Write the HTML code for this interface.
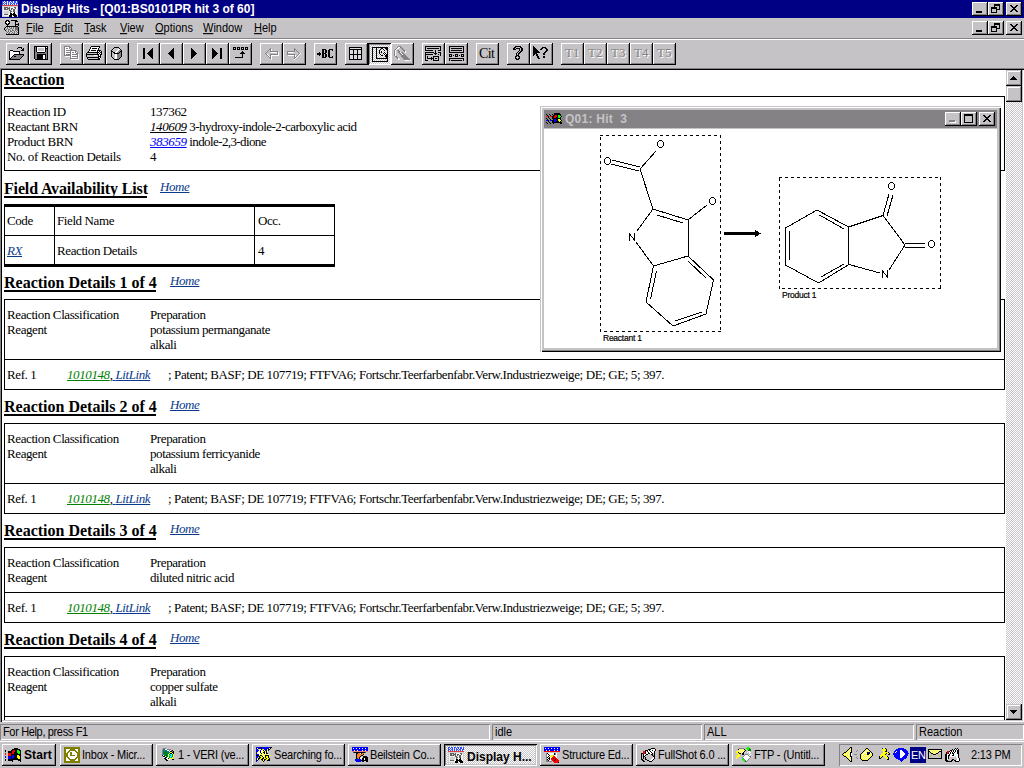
<!DOCTYPE html><html><head><meta charset="utf-8"><style>
*{box-sizing:border-box}
html,body{margin:0;padding:0}
body{width:1024px;height:768px;overflow:hidden;position:relative;background:#c6c3c6;font-family:"Liberation Sans",sans-serif;}
.a{position:absolute}
svg{position:absolute;overflow:visible}
.ss{position:absolute;font-family:"Liberation Sans",sans-serif;font-size:11px;color:#000;white-space:nowrap;line-height:13px}
.se{position:absolute;font-family:"Liberation Serif",serif;font-size:13px;letter-spacing:-0.4px;color:#000;white-space:nowrap;line-height:15px}
.t9{transform:scaleY(1.125);transform-origin:0 10.3px}
.rb{position:absolute;background:#c6c3c6;box-shadow:inset -1px -1px #000,inset 1px 1px #fff,inset -2px -2px #848284}
.h{position:absolute;font-family:"Liberation Serif",serif;font-weight:bold;font-size:16px;line-height:18px;white-space:nowrap}
.ul{position:absolute;height:2px;background:#000}
.home{position:absolute;font-family:"Liberation Serif",serif;font-style:italic;font-size:13px;letter-spacing:-0.4px;line-height:14px;color:#0a3a8c;text-decoration:underline;white-space:nowrap}
.bx{position:absolute;background:#000}
u{text-decoration:none;border-bottom:1px solid #000}
</style></head><body><div class="a" style="left:0px;top:0px;width:1024px;height:18px;background:#000084;"></div><svg style="left:2px;top:1px;" width="16" height="16" viewBox="0 0 16 16" shape-rendering="crispEdges"><rect x="0" y="0" width="2" height="1" fill="#3050ff"/><rect x="2" y="0" width="1" height="1" fill="#f0f0f0"/><rect x="3" y="0" width="2" height="1" fill="#3050ff"/><rect x="5" y="0" width="1" height="1" fill="#f0f0f0"/><rect x="6" y="0" width="2" height="1" fill="#3050ff"/><rect x="8" y="0" width="1" height="1" fill="#f0f0f0"/><rect x="9" y="0" width="2" height="1" fill="#3050ff"/><rect x="11" y="0" width="1" height="1" fill="#f0f0f0"/><rect x="12" y="0" width="2" height="1" fill="#3050ff"/><rect x="14" y="0" width="1" height="1" fill="#f0f0f0"/><rect x="15" y="0" width="1" height="1" fill="#3050ff"/><rect x="0" y="1" width="1" height="1" fill="#3050ff"/><rect x="1" y="1" width="1" height="1" fill="#f0f0f0"/><rect x="2" y="1" width="1" height="1" fill="#3050ff"/><rect x="3" y="1" width="1" height="1" fill="#f0f0f0"/><rect x="4" y="1" width="1" height="1" fill="#3050ff"/><rect x="5" y="1" width="1" height="1" fill="#f0f0f0"/><rect x="6" y="1" width="1" height="1" fill="#3050ff"/><rect x="7" y="1" width="1" height="1" fill="#f0f0f0"/><rect x="8" y="1" width="1" height="1" fill="#3050ff"/><rect x="9" y="1" width="1" height="1" fill="#f0f0f0"/><rect x="10" y="1" width="1" height="1" fill="#3050ff"/><rect x="11" y="1" width="1" height="1" fill="#f0f0f0"/><rect x="12" y="1" width="2" height="1" fill="#3050ff"/><rect x="14" y="1" width="1" height="1" fill="#f0f0f0"/><rect x="15" y="1" width="1" height="1" fill="#3050ff"/><rect x="0" y="2" width="2" height="1" fill="#3050ff"/><rect x="2" y="2" width="1" height="1" fill="#f0f0f0"/><rect x="3" y="2" width="2" height="1" fill="#3050ff"/><rect x="5" y="2" width="1" height="1" fill="#f0f0f0"/><rect x="6" y="2" width="1" height="1" fill="#3050ff"/><rect x="7" y="2" width="1" height="1" fill="#f0f0f0"/><rect x="8" y="2" width="2" height="1" fill="#3050ff"/><rect x="10" y="2" width="1" height="1" fill="#f0f0f0"/><rect x="11" y="2" width="2" height="1" fill="#3050ff"/><rect x="13" y="2" width="1" height="1" fill="#f0f0f0"/><rect x="14" y="2" width="2" height="1" fill="#3050ff"/><rect x="0" y="3" width="1" height="1" fill="#3050ff"/><rect x="1" y="3" width="1" height="1" fill="#f0f0f0"/><rect x="2" y="3" width="1" height="1" fill="#3050ff"/><rect x="3" y="3" width="1" height="1" fill="#f0f0f0"/><rect x="4" y="3" width="1" height="1" fill="#3050ff"/><rect x="5" y="3" width="1" height="1" fill="#f0f0f0"/><rect x="6" y="3" width="1" height="1" fill="#3050ff"/><rect x="7" y="3" width="1" height="1" fill="#f0f0f0"/><rect x="8" y="3" width="1" height="1" fill="#3050ff"/><rect x="9" y="3" width="1" height="1" fill="#f0f0f0"/><rect x="10" y="3" width="1" height="1" fill="#3050ff"/><rect x="11" y="3" width="1" height="1" fill="#f0f0f0"/><rect x="12" y="3" width="1" height="1" fill="#3050ff"/><rect x="13" y="3" width="1" height="1" fill="#f0f0f0"/><rect x="14" y="3" width="1" height="1" fill="#3050ff"/><rect x="15" y="3" width="1" height="1" fill="#f0f0f0"/><rect x="0" y="4" width="16" height="1" fill="#e04040"/><rect x="0" y="5" width="16" height="1" fill="#d0d4cc"/><rect x="0" y="6" width="1" height="1" fill="#d0d4cc"/><rect x="1" y="6" width="1" height="1" fill="#f0f0f0"/><rect x="2" y="6" width="4" height="1" fill="#606060"/><rect x="6" y="6" width="1" height="1" fill="#d0d4cc"/><rect x="7" y="6" width="1" height="1" fill="#606060"/><rect x="8" y="6" width="4" height="1" fill="#f0f0f0"/><rect x="12" y="6" width="2" height="1" fill="#606060"/><rect x="14" y="6" width="1" height="1" fill="#f0f0f0"/><rect x="15" y="6" width="1" height="1" fill="#d0d4cc"/><rect x="0" y="7" width="1" height="1" fill="#d0d4cc"/><rect x="1" y="7" width="1" height="1" fill="#f0f0f0"/><rect x="2" y="7" width="2" height="1" fill="#606060"/><rect x="4" y="7" width="1" height="1" fill="#f0f0f0"/><rect x="5" y="7" width="3" height="1" fill="#606060"/><rect x="8" y="7" width="1" height="1" fill="#f0f0f0"/><rect x="9" y="7" width="2" height="1" fill="#606060"/><rect x="11" y="7" width="2" height="1" fill="#f0f0f0"/><rect x="13" y="7" width="1" height="1" fill="#606060"/><rect x="14" y="7" width="1" height="1" fill="#f0f0f0"/><rect x="15" y="7" width="1" height="1" fill="#d0d4cc"/><rect x="0" y="8" width="1" height="1" fill="#d0d4cc"/><rect x="1" y="8" width="1" height="1" fill="#f0f0f0"/><rect x="2" y="8" width="4" height="1" fill="#606060"/><rect x="6" y="8" width="1" height="1" fill="#d0d4cc"/><rect x="7" y="8" width="1" height="1" fill="#606060"/><rect x="8" y="8" width="1" height="1" fill="#f0f0f0"/><rect x="9" y="8" width="1" height="1" fill="#606060"/><rect x="10" y="8" width="1" height="1" fill="#f0f0f0"/><rect x="11" y="8" width="2" height="1" fill="#606060"/><rect x="13" y="8" width="2" height="1" fill="#f0f0f0"/><rect x="15" y="8" width="1" height="1" fill="#d0d4cc"/><rect x="0" y="9" width="1" height="1" fill="#d0d4cc"/><rect x="1" y="9" width="6" height="1" fill="#f0f0f0"/><rect x="7" y="9" width="2" height="1" fill="#606060"/><rect x="9" y="9" width="2" height="1" fill="#f0f0f0"/><rect x="11" y="9" width="2" height="1" fill="#606060"/><rect x="13" y="9" width="2" height="1" fill="#f0f0f0"/><rect x="15" y="9" width="1" height="1" fill="#d0d4cc"/><rect x="0" y="10" width="1" height="1" fill="#d0d4cc"/><rect x="1" y="10" width="1" height="1" fill="#f0f0f0"/><rect x="2" y="10" width="5" height="1" fill="#d0d4cc"/><rect x="7" y="10" width="1" height="1" fill="#f0f0f0"/><rect x="8" y="10" width="2" height="1" fill="#606060"/><rect x="10" y="10" width="1" height="1" fill="#f0f0f0"/><rect x="11" y="10" width="2" height="1" fill="#606060"/><rect x="13" y="10" width="2" height="1" fill="#f0f0f0"/><rect x="15" y="10" width="1" height="1" fill="#d0d4cc"/><rect x="0" y="11" width="1" height="1" fill="#d0d4cc"/><rect x="1" y="11" width="1" height="1" fill="#f0f0f0"/><rect x="2" y="11" width="5" height="1" fill="#d0d4cc"/><rect x="7" y="11" width="1" height="1" fill="#f0f0f0"/><rect x="8" y="11" width="1" height="1" fill="#606060"/><rect x="9" y="11" width="3" height="1" fill="#f0f0f0"/><rect x="12" y="11" width="1" height="1" fill="#000"/><rect x="13" y="11" width="2" height="1" fill="#f0f0f0"/><rect x="15" y="11" width="1" height="1" fill="#d0d4cc"/><rect x="0" y="12" width="1" height="1" fill="#d0d4cc"/><rect x="1" y="12" width="1" height="1" fill="#f0f0f0"/><rect x="2" y="12" width="4" height="1" fill="#d0d4cc"/><rect x="6" y="12" width="2" height="1" fill="#f0f0f0"/><rect x="8" y="12" width="2" height="1" fill="#000"/><rect x="10" y="12" width="1" height="1" fill="#f0f0f0"/><rect x="11" y="12" width="2" height="1" fill="#000"/><rect x="13" y="12" width="2" height="1" fill="#f0f0f0"/><rect x="15" y="12" width="1" height="1" fill="#d0d4cc"/><rect x="0" y="13" width="1" height="1" fill="#d0d4cc"/><rect x="1" y="13" width="1" height="1" fill="#f0f0f0"/><rect x="2" y="13" width="4" height="1" fill="#606060"/><rect x="6" y="13" width="2" height="1" fill="#f0f0f0"/><rect x="8" y="13" width="6" height="1" fill="#000"/><rect x="14" y="13" width="1" height="1" fill="#f0f0f0"/><rect x="15" y="13" width="1" height="1" fill="#d0d4cc"/><rect x="0" y="14" width="1" height="1" fill="#d0d4cc"/><rect x="1" y="14" width="6" height="1" fill="#f0f0f0"/><rect x="7" y="14" width="3" height="1" fill="#000"/><rect x="10" y="14" width="1" height="1" fill="#f0f0f0"/><rect x="11" y="14" width="4" height="1" fill="#000"/><rect x="15" y="14" width="1" height="1" fill="#d0d4cc"/><rect x="0" y="15" width="7" height="1" fill="#d0d4cc"/><rect x="7" y="15" width="3" height="1" fill="#000"/><rect x="10" y="15" width="2" height="1" fill="#f0f0f0"/><rect x="12" y="15" width="3" height="1" fill="#000"/><rect x="15" y="15" width="1" height="1" fill="#d0d4cc"/></svg><div class="ss" style="left:21px;top:2px;color:#fff;font-weight:bold;font-size:12px;line-height:14px">Display Hits - [Q01:BS0101PR hit 3 of 60]</div><div class="rb" style="left:972px;top:2px;width:16px;height:14px;"></div><div class="rb" style="left:988px;top:2px;width:16px;height:14px;"></div><div class="rb" style="left:1006px;top:2px;width:16px;height:14px;"></div><svg style="left:972px;top:2px;" width="16" height="14" viewBox="0 0 16 14" shape-rendering="crispEdges"><rect x="4" y="9" width="6" height="2" fill="#000"/></svg><svg style="left:988px;top:2px;" width="16" height="14" viewBox="0 0 16 14" shape-rendering="crispEdges"><rect x="6" y="2" width="6" height="1" fill="#000"/><rect x="6" y="3" width="6" height="1" fill="#000"/><rect x="6" y="3" width="1" height="3" fill="#000"/><rect x="11" y="3" width="1" height="5" fill="#000"/><rect x="9" y="7" width="3" height="1" fill="#000"/><rect x="3" y="5" width="6" height="1" fill="#000"/><rect x="3" y="6" width="6" height="1" fill="#000"/><rect x="3" y="6" width="1" height="5" fill="#000"/><rect x="8" y="6" width="1" height="5" fill="#000"/><rect x="3" y="10" width="6" height="1" fill="#000"/></svg><svg style="left:1006px;top:2px;" width="16" height="14" viewBox="0 0 16 14" shape-rendering="crispEdges"><rect x="4" y="3" width="2" height="1" fill="#000"/><rect x="10" y="3" width="2" height="1" fill="#000"/><rect x="5" y="4" width="2" height="1" fill="#000"/><rect x="9" y="4" width="2" height="1" fill="#000"/><rect x="6" y="5" width="2" height="1" fill="#000"/><rect x="8" y="5" width="2" height="1" fill="#000"/><rect x="7" y="6" width="2" height="1" fill="#000"/><rect x="7" y="6" width="2" height="1" fill="#000"/><rect x="8" y="7" width="2" height="1" fill="#000"/><rect x="6" y="7" width="2" height="1" fill="#000"/><rect x="9" y="8" width="2" height="1" fill="#000"/><rect x="5" y="8" width="2" height="1" fill="#000"/><rect x="10" y="9" width="2" height="1" fill="#000"/><rect x="4" y="9" width="2" height="1" fill="#000"/></svg><svg style="left:4px;top:20px;" width="16" height="15" viewBox="0 0 16 15" shape-rendering="crispEdges"><rect x="2" y="0" width="3" height="1" fill="#000"/><rect x="7" y="0" width="6" height="1" fill="#000"/><rect x="1" y="1" width="2" height="1" fill="#000"/><rect x="3" y="1" width="1" height="1" fill="#fff"/><rect x="4" y="1" width="2" height="1" fill="#000"/><rect x="11" y="1" width="3" height="1" fill="#000"/><rect x="1" y="2" width="1" height="1" fill="#000"/><rect x="2" y="2" width="3" height="1" fill="#fff"/><rect x="5" y="2" width="1" height="1" fill="#000"/><rect x="11" y="2" width="1" height="1" fill="#000"/><rect x="1" y="3" width="2" height="1" fill="#000"/><rect x="3" y="3" width="1" height="1" fill="#fff"/><rect x="4" y="3" width="2" height="1" fill="#000"/><rect x="11" y="3" width="1" height="1" fill="#000"/><rect x="14" y="3" width="1" height="1" fill="#000"/><rect x="2" y="4" width="3" height="1" fill="#000"/><rect x="11" y="4" width="4" height="1" fill="#000"/><rect x="3" y="5" width="1" height="1" fill="#000"/><rect x="11" y="5" width="1" height="1" fill="#000"/><rect x="14" y="5" width="1" height="1" fill="#000"/><rect x="2" y="6" width="12" height="1" fill="#000"/><rect x="1" y="7" width="1" height="1" fill="#000"/><rect x="3" y="7" width="1" height="1" fill="#707070"/><rect x="4" y="7" width="1" height="1" fill="#d0d0d0"/><rect x="5" y="7" width="1" height="1" fill="#707070"/><rect x="6" y="7" width="1" height="1" fill="#d0d0d0"/><rect x="7" y="7" width="1" height="1" fill="#707070"/><rect x="8" y="7" width="1" height="1" fill="#d0d0d0"/><rect x="9" y="7" width="1" height="1" fill="#707070"/><rect x="10" y="7" width="1" height="1" fill="#d0d0d0"/><rect x="11" y="7" width="3" height="1" fill="#707070"/><rect x="14" y="7" width="1" height="1" fill="#000"/><rect x="0" y="8" width="1" height="1" fill="#000"/><rect x="2" y="8" width="1" height="1" fill="#d0d0d0"/><rect x="3" y="8" width="1" height="1" fill="#707070"/><rect x="4" y="8" width="2" height="1" fill="#d0d0d0"/><rect x="6" y="8" width="2" height="1" fill="#707070"/><rect x="8" y="8" width="1" height="1" fill="#d0d0d0"/><rect x="9" y="8" width="1" height="1" fill="#707070"/><rect x="10" y="8" width="1" height="1" fill="#d0d0d0"/><rect x="11" y="8" width="3" height="1" fill="#707070"/><rect x="14" y="8" width="1" height="1" fill="#000"/><rect x="0" y="9" width="1" height="1" fill="#000"/><rect x="2" y="9" width="1" height="1" fill="#707070"/><rect x="3" y="9" width="1" height="1" fill="#d0d0d0"/><rect x="4" y="9" width="2" height="1" fill="#707070"/><rect x="6" y="9" width="2" height="1" fill="#d0d0d0"/><rect x="8" y="9" width="1" height="1" fill="#707070"/><rect x="9" y="9" width="2" height="1" fill="#d0d0d0"/><rect x="11" y="9" width="3" height="1" fill="#707070"/><rect x="14" y="9" width="1" height="1" fill="#000"/><rect x="1" y="10" width="1" height="1" fill="#000"/><rect x="2" y="10" width="2" height="1" fill="#d0d0d0"/><rect x="4" y="10" width="1" height="1" fill="#707070"/><rect x="5" y="10" width="1" height="1" fill="#d0d0d0"/><rect x="6" y="10" width="1" height="1" fill="#707070"/><rect x="7" y="10" width="1" height="1" fill="#d0d0d0"/><rect x="8" y="10" width="2" height="1" fill="#707070"/><rect x="10" y="10" width="1" height="1" fill="#d0d0d0"/><rect x="11" y="10" width="1" height="1" fill="#707070"/><rect x="12" y="10" width="1" height="1" fill="#d0d0d0"/><rect x="13" y="10" width="1" height="1" fill="#707070"/><rect x="14" y="10" width="1" height="1" fill="#000"/><rect x="2" y="11" width="1" height="1" fill="#707070"/><rect x="3" y="11" width="1" height="1" fill="#d0d0d0"/><rect x="4" y="11" width="1" height="1" fill="#707070"/><rect x="5" y="11" width="1" height="1" fill="#d0d0d0"/><rect x="6" y="11" width="2" height="1" fill="#707070"/><rect x="8" y="11" width="2" height="1" fill="#d0d0d0"/><rect x="10" y="11" width="1" height="1" fill="#707070"/><rect x="11" y="11" width="1" height="1" fill="#d0d0d0"/><rect x="12" y="11" width="1" height="1" fill="#707070"/><rect x="13" y="11" width="1" height="1" fill="#d0d0d0"/><rect x="14" y="11" width="1" height="1" fill="#000"/><rect x="2" y="12" width="1" height="1" fill="#d0d0d0"/><rect x="3" y="12" width="1" height="1" fill="#707070"/><rect x="4" y="12" width="1" height="1" fill="#d0d0d0"/><rect x="5" y="12" width="1" height="1" fill="#707070"/><rect x="6" y="12" width="2" height="1" fill="#d0d0d0"/><rect x="8" y="12" width="1" height="1" fill="#707070"/><rect x="9" y="12" width="1" height="1" fill="#d0d0d0"/><rect x="10" y="12" width="1" height="1" fill="#707070"/><rect x="11" y="12" width="2" height="1" fill="#d0d0d0"/><rect x="13" y="12" width="1" height="1" fill="#707070"/><rect x="14" y="12" width="1" height="1" fill="#000"/><rect x="2" y="13" width="1" height="1" fill="#707070"/><rect x="3" y="13" width="1" height="1" fill="#d0d0d0"/><rect x="4" y="13" width="2" height="1" fill="#707070"/><rect x="6" y="13" width="1" height="1" fill="#d0d0d0"/><rect x="7" y="13" width="1" height="1" fill="#707070"/><rect x="8" y="13" width="1" height="1" fill="#d0d0d0"/><rect x="9" y="13" width="2" height="1" fill="#707070"/><rect x="11" y="13" width="1" height="1" fill="#d0d0d0"/><rect x="12" y="13" width="1" height="1" fill="#707070"/><rect x="13" y="13" width="1" height="1" fill="#d0d0d0"/><rect x="14" y="13" width="1" height="1" fill="#000"/><rect x="2" y="14" width="13" height="1" fill="#000"/></svg><div class="ss t9" style="left:26px;top:22px;"><span style="text-decoration:underline;text-underline-offset:1px">F</span>ile</div><div class="ss t9" style="left:54px;top:22px;"><span style="text-decoration:underline;text-underline-offset:1px">E</span>dit</div><div class="ss t9" style="left:84px;top:22px;"><span style="text-decoration:underline;text-underline-offset:1px">T</span>ask</div><div class="ss t9" style="left:120px;top:22px;"><span style="text-decoration:underline;text-underline-offset:1px">V</span>iew</div><div class="ss t9" style="left:155px;top:22px;"><span style="text-decoration:underline;text-underline-offset:1px">O</span>ptions</div><div class="ss t9" style="left:203px;top:22px;"><span style="text-decoration:underline;text-underline-offset:1px">W</span>indow</div><div class="ss t9" style="left:254px;top:22px;"><span style="text-decoration:underline;text-underline-offset:1px">H</span>elp</div><div class="rb" style="left:972px;top:21px;width:16px;height:14px;"></div><div class="rb" style="left:988px;top:21px;width:16px;height:14px;"></div><div class="rb" style="left:1006px;top:21px;width:16px;height:14px;"></div><svg style="left:972px;top:21px;" width="16" height="14" viewBox="0 0 16 14" shape-rendering="crispEdges"><rect x="4" y="9" width="6" height="2" fill="#000"/></svg><svg style="left:988px;top:21px;" width="16" height="14" viewBox="0 0 16 14" shape-rendering="crispEdges"><rect x="6" y="2" width="6" height="1" fill="#000"/><rect x="6" y="3" width="6" height="1" fill="#000"/><rect x="6" y="3" width="1" height="3" fill="#000"/><rect x="11" y="3" width="1" height="5" fill="#000"/><rect x="9" y="7" width="3" height="1" fill="#000"/><rect x="3" y="5" width="6" height="1" fill="#000"/><rect x="3" y="6" width="6" height="1" fill="#000"/><rect x="3" y="6" width="1" height="5" fill="#000"/><rect x="8" y="6" width="1" height="5" fill="#000"/><rect x="3" y="10" width="6" height="1" fill="#000"/></svg><svg style="left:1006px;top:21px;" width="16" height="14" viewBox="0 0 16 14" shape-rendering="crispEdges"><rect x="4" y="3" width="2" height="1" fill="#000"/><rect x="10" y="3" width="2" height="1" fill="#000"/><rect x="5" y="4" width="2" height="1" fill="#000"/><rect x="9" y="4" width="2" height="1" fill="#000"/><rect x="6" y="5" width="2" height="1" fill="#000"/><rect x="8" y="5" width="2" height="1" fill="#000"/><rect x="7" y="6" width="2" height="1" fill="#000"/><rect x="7" y="6" width="2" height="1" fill="#000"/><rect x="8" y="7" width="2" height="1" fill="#000"/><rect x="6" y="7" width="2" height="1" fill="#000"/><rect x="9" y="8" width="2" height="1" fill="#000"/><rect x="5" y="8" width="2" height="1" fill="#000"/><rect x="10" y="9" width="2" height="1" fill="#000"/><rect x="4" y="9" width="2" height="1" fill="#000"/></svg><div class="a" style="left:0px;top:38px;width:1024px;height:1px;background:#848284;"></div><div class="a" style="left:0px;top:39px;width:1024px;height:1px;background:#fff;"></div><div class="rb" style="left:6px;top:43px;width:23px;height:22px;"></div><div class="rb" style="left:29px;top:43px;width:23px;height:22px;"></div><div class="rb" style="left:60px;top:43px;width:23px;height:22px;"></div><div class="rb" style="left:83px;top:43px;width:23px;height:22px;"></div><div class="rb" style="left:106px;top:43px;width:23px;height:22px;"></div><div class="rb" style="left:137px;top:43px;width:23px;height:22px;"></div><div class="rb" style="left:160px;top:43px;width:23px;height:22px;"></div><div class="rb" style="left:183px;top:43px;width:23px;height:22px;"></div><div class="rb" style="left:206px;top:43px;width:23px;height:22px;"></div><div class="rb" style="left:229px;top:43px;width:23px;height:22px;"></div><div class="rb" style="left:260px;top:43px;width:23px;height:22px;"></div><div class="rb" style="left:283px;top:43px;width:23px;height:22px;"></div><div class="rb" style="left:314px;top:43px;width:23px;height:22px;"></div><div class="rb" style="left:345px;top:43px;width:23px;height:22px;"></div><div class="a" style="left:368px;top:43px;width:23px;height:22px;background-color:#fff;background-image:repeating-conic-gradient(#c6c3c6 0 25%,#fff 0 50%);background-size:2px 2px;box-shadow:inset 1px 1px #000,inset -1px -1px #fff,inset 2px 2px #848284"></div><div class="rb" style="left:391px;top:43px;width:23px;height:22px;"></div><div class="rb" style="left:422px;top:43px;width:23px;height:22px;"></div><div class="rb" style="left:445px;top:43px;width:23px;height:22px;"></div><div class="rb" style="left:476px;top:43px;width:23px;height:22px;"></div><div class="rb" style="left:507px;top:43px;width:23px;height:22px;"></div><div class="rb" style="left:530px;top:43px;width:23px;height:22px;"></div><div class="rb" style="left:561px;top:43px;width:23px;height:22px;"></div><div class="rb" style="left:584px;top:43px;width:23px;height:22px;"></div><div class="rb" style="left:607px;top:43px;width:23px;height:22px;"></div><div class="rb" style="left:630px;top:43px;width:23px;height:22px;"></div><div class="rb" style="left:653px;top:43px;width:23px;height:22px;"></div><svg style="left:9px;top:47px;" width="15" height="13" viewBox="0 0 15 13" shape-rendering="crispEdges"><rect x="9" y="0" width="4" height="1" fill="#000"/><rect x="8" y="1" width="1" height="1" fill="#000"/><rect x="12" y="1" width="1" height="1" fill="#000"/><rect x="14" y="1" width="1" height="1" fill="#000"/><rect x="13" y="2" width="2" height="1" fill="#000"/><rect x="1" y="3" width="3" height="1" fill="#000"/><rect x="12" y="3" width="3" height="1" fill="#000"/><rect x="0" y="4" width="1" height="1" fill="#000"/><rect x="1" y="4" width="3" height="1" fill="#fff"/><rect x="4" y="4" width="7" height="1" fill="#000"/><rect x="0" y="5" width="1" height="1" fill="#000"/><rect x="1" y="5" width="9" height="1" fill="#fff"/><rect x="10" y="5" width="1" height="1" fill="#000"/><rect x="0" y="6" width="1" height="1" fill="#000"/><rect x="1" y="6" width="9" height="1" fill="#fff"/><rect x="10" y="6" width="1" height="1" fill="#000"/><rect x="0" y="7" width="1" height="1" fill="#000"/><rect x="1" y="7" width="4" height="1" fill="#fff"/><rect x="5" y="7" width="10" height="1" fill="#000"/><rect x="0" y="8" width="1" height="1" fill="#000"/><rect x="1" y="8" width="3" height="1" fill="#fff"/><rect x="4" y="8" width="1" height="1" fill="#000"/><rect x="5" y="8" width="9" height="1" fill="#848284"/><rect x="14" y="8" width="1" height="1" fill="#000"/><rect x="0" y="9" width="1" height="1" fill="#000"/><rect x="1" y="9" width="2" height="1" fill="#fff"/><rect x="3" y="9" width="1" height="1" fill="#000"/><rect x="4" y="9" width="1" height="1" fill="#848284"/><rect x="5" y="9" width="2" height="1" fill="#000"/><rect x="7" y="9" width="6" height="1" fill="#848284"/><rect x="13" y="9" width="1" height="1" fill="#000"/><rect x="0" y="10" width="1" height="1" fill="#000"/><rect x="1" y="10" width="1" height="1" fill="#fff"/><rect x="2" y="10" width="1" height="1" fill="#000"/><rect x="3" y="10" width="9" height="1" fill="#848284"/><rect x="12" y="10" width="1" height="1" fill="#000"/><rect x="0" y="11" width="2" height="1" fill="#000"/><rect x="2" y="11" width="9" height="1" fill="#848284"/><rect x="11" y="11" width="1" height="1" fill="#000"/><rect x="0" y="12" width="11" height="1" fill="#000"/></svg><svg style="left:34px;top:46px;" width="14" height="14" viewBox="0 0 14 14" shape-rendering="crispEdges"><rect x="0" y="0" width="14" height="1" fill="#000"/><rect x="0" y="1" width="1" height="1" fill="#000"/><rect x="1" y="1" width="1" height="1" fill="#848284"/><rect x="2" y="1" width="1" height="1" fill="#000"/><rect x="3" y="1" width="8" height="1" fill="#fff"/><rect x="11" y="1" width="1" height="1" fill="#000"/><rect x="12" y="1" width="1" height="1" fill="#fff"/><rect x="13" y="1" width="1" height="1" fill="#000"/><rect x="0" y="2" width="1" height="1" fill="#000"/><rect x="1" y="2" width="1" height="1" fill="#848284"/><rect x="2" y="2" width="1" height="1" fill="#000"/><rect x="3" y="2" width="1" height="1" fill="#fff"/><rect x="4" y="2" width="6" height="1" fill="#c6c3c6"/><rect x="10" y="2" width="1" height="1" fill="#fff"/><rect x="11" y="2" width="3" height="1" fill="#000"/><rect x="0" y="3" width="1" height="1" fill="#000"/><rect x="1" y="3" width="1" height="1" fill="#848284"/><rect x="2" y="3" width="1" height="1" fill="#000"/><rect x="3" y="3" width="1" height="1" fill="#fff"/><rect x="4" y="3" width="6" height="1" fill="#c6c3c6"/><rect x="10" y="3" width="1" height="1" fill="#fff"/><rect x="11" y="3" width="1" height="1" fill="#000"/><rect x="12" y="3" width="1" height="1" fill="#848284"/><rect x="13" y="3" width="1" height="1" fill="#000"/><rect x="0" y="4" width="1" height="1" fill="#000"/><rect x="1" y="4" width="1" height="1" fill="#848284"/><rect x="2" y="4" width="1" height="1" fill="#000"/><rect x="3" y="4" width="1" height="1" fill="#fff"/><rect x="4" y="4" width="6" height="1" fill="#c6c3c6"/><rect x="10" y="4" width="1" height="1" fill="#fff"/><rect x="11" y="4" width="1" height="1" fill="#000"/><rect x="12" y="4" width="1" height="1" fill="#848284"/><rect x="13" y="4" width="1" height="1" fill="#000"/><rect x="0" y="5" width="1" height="1" fill="#000"/><rect x="1" y="5" width="1" height="1" fill="#848284"/><rect x="2" y="5" width="1" height="1" fill="#000"/><rect x="3" y="5" width="8" height="1" fill="#fff"/><rect x="11" y="5" width="1" height="1" fill="#000"/><rect x="12" y="5" width="1" height="1" fill="#848284"/><rect x="13" y="5" width="1" height="1" fill="#000"/><rect x="0" y="6" width="1" height="1" fill="#000"/><rect x="1" y="6" width="2" height="1" fill="#848284"/><rect x="3" y="6" width="8" height="1" fill="#000"/><rect x="11" y="6" width="2" height="1" fill="#848284"/><rect x="13" y="6" width="1" height="1" fill="#000"/><rect x="0" y="7" width="1" height="1" fill="#000"/><rect x="1" y="7" width="12" height="1" fill="#848284"/><rect x="13" y="7" width="1" height="1" fill="#000"/><rect x="0" y="8" width="1" height="1" fill="#000"/><rect x="1" y="8" width="2" height="1" fill="#848284"/><rect x="3" y="8" width="9" height="1" fill="#000"/><rect x="12" y="8" width="1" height="1" fill="#848284"/><rect x="13" y="8" width="1" height="1" fill="#000"/><rect x="0" y="9" width="1" height="1" fill="#000"/><rect x="1" y="9" width="2" height="1" fill="#848284"/><rect x="3" y="9" width="6" height="1" fill="#000"/><rect x="9" y="9" width="2" height="1" fill="#fff"/><rect x="11" y="9" width="1" height="1" fill="#000"/><rect x="12" y="9" width="1" height="1" fill="#848284"/><rect x="13" y="9" width="1" height="1" fill="#000"/><rect x="0" y="10" width="1" height="1" fill="#000"/><rect x="1" y="10" width="2" height="1" fill="#848284"/><rect x="3" y="10" width="6" height="1" fill="#000"/><rect x="9" y="10" width="2" height="1" fill="#fff"/><rect x="11" y="10" width="1" height="1" fill="#000"/><rect x="12" y="10" width="1" height="1" fill="#848284"/><rect x="13" y="10" width="1" height="1" fill="#000"/><rect x="0" y="11" width="1" height="1" fill="#000"/><rect x="1" y="11" width="2" height="1" fill="#848284"/><rect x="3" y="11" width="6" height="1" fill="#000"/><rect x="9" y="11" width="2" height="1" fill="#fff"/><rect x="11" y="11" width="1" height="1" fill="#000"/><rect x="12" y="11" width="1" height="1" fill="#848284"/><rect x="13" y="11" width="1" height="1" fill="#000"/><rect x="0" y="12" width="1" height="1" fill="#000"/><rect x="1" y="12" width="2" height="1" fill="#848284"/><rect x="3" y="12" width="6" height="1" fill="#000"/><rect x="9" y="12" width="2" height="1" fill="#fff"/><rect x="11" y="12" width="1" height="1" fill="#000"/><rect x="12" y="12" width="1" height="1" fill="#848284"/><rect x="13" y="12" width="1" height="1" fill="#000"/><rect x="0" y="13" width="1" height="1" fill="#fff"/><rect x="1" y="13" width="13" height="1" fill="#000"/></svg><svg style="left:64px;top:46px;" width="16" height="14" viewBox="0 0 16 14" shape-rendering="crispEdges"><rect x="0" y="0" width="6" height="1" fill="#848284"/><rect x="0" y="1" width="1" height="1" fill="#848284"/><rect x="1" y="1" width="4" height="1" fill="#fff"/><rect x="5" y="1" width="2" height="1" fill="#848284"/><rect x="0" y="2" width="1" height="1" fill="#848284"/><rect x="1" y="2" width="1" height="1" fill="#fff"/><rect x="2" y="2" width="2" height="1" fill="#848284"/><rect x="4" y="2" width="1" height="1" fill="#fff"/><rect x="5" y="2" width="1" height="1" fill="#848284"/><rect x="6" y="2" width="1" height="1" fill="#fff"/><rect x="7" y="2" width="1" height="1" fill="#848284"/><rect x="0" y="3" width="1" height="1" fill="#848284"/><rect x="1" y="3" width="5" height="1" fill="#fff"/><rect x="6" y="3" width="2" height="1" fill="#848284"/><rect x="0" y="4" width="1" height="1" fill="#848284"/><rect x="1" y="4" width="1" height="1" fill="#fff"/><rect x="2" y="4" width="10" height="1" fill="#848284"/><rect x="0" y="5" width="1" height="1" fill="#848284"/><rect x="1" y="5" width="5" height="1" fill="#fff"/><rect x="6" y="5" width="1" height="1" fill="#848284"/><rect x="7" y="5" width="4" height="1" fill="#fff"/><rect x="11" y="5" width="2" height="1" fill="#848284"/><rect x="0" y="6" width="1" height="1" fill="#848284"/><rect x="1" y="6" width="1" height="1" fill="#fff"/><rect x="2" y="6" width="5" height="1" fill="#848284"/><rect x="7" y="6" width="1" height="1" fill="#fff"/><rect x="8" y="6" width="2" height="1" fill="#848284"/><rect x="10" y="6" width="1" height="1" fill="#fff"/><rect x="11" y="6" width="1" height="1" fill="#848284"/><rect x="12" y="6" width="1" height="1" fill="#fff"/><rect x="13" y="6" width="1" height="1" fill="#848284"/><rect x="0" y="7" width="1" height="1" fill="#848284"/><rect x="1" y="7" width="5" height="1" fill="#fff"/><rect x="6" y="7" width="1" height="1" fill="#848284"/><rect x="7" y="7" width="5" height="1" fill="#fff"/><rect x="12" y="7" width="2" height="1" fill="#848284"/><rect x="0" y="8" width="1" height="1" fill="#848284"/><rect x="1" y="8" width="1" height="1" fill="#fff"/><rect x="2" y="8" width="5" height="1" fill="#848284"/><rect x="7" y="8" width="1" height="1" fill="#fff"/><rect x="8" y="8" width="6" height="1" fill="#848284"/><rect x="14" y="8" width="1" height="1" fill="#fff"/><rect x="0" y="9" width="7" height="1" fill="#848284"/><rect x="7" y="9" width="6" height="1" fill="#fff"/><rect x="13" y="9" width="1" height="1" fill="#848284"/><rect x="14" y="9" width="1" height="1" fill="#fff"/><rect x="1" y="10" width="5" height="1" fill="#fff"/><rect x="6" y="10" width="1" height="1" fill="#848284"/><rect x="7" y="10" width="1" height="1" fill="#fff"/><rect x="8" y="10" width="6" height="1" fill="#848284"/><rect x="14" y="10" width="1" height="1" fill="#fff"/><rect x="6" y="11" width="1" height="1" fill="#848284"/><rect x="7" y="11" width="6" height="1" fill="#fff"/><rect x="13" y="11" width="1" height="1" fill="#848284"/><rect x="14" y="11" width="1" height="1" fill="#fff"/><rect x="6" y="12" width="8" height="1" fill="#848284"/><rect x="14" y="12" width="1" height="1" fill="#fff"/><rect x="7" y="13" width="8" height="1" fill="#fff"/></svg><svg style="left:86px;top:46px;" width="16" height="14" viewBox="0 0 16 14" shape-rendering="crispEdges"><rect x="5" y="0" width="9" height="1" fill="#000"/><rect x="4" y="1" width="1" height="1" fill="#000"/><rect x="5" y="1" width="8" height="1" fill="#fff"/><rect x="13" y="1" width="1" height="1" fill="#000"/><rect x="4" y="2" width="1" height="1" fill="#000"/><rect x="5" y="2" width="1" height="1" fill="#fff"/><rect x="6" y="2" width="5" height="1" fill="#000"/><rect x="11" y="2" width="1" height="1" fill="#fff"/><rect x="12" y="2" width="1" height="1" fill="#000"/><rect x="3" y="3" width="1" height="1" fill="#000"/><rect x="4" y="3" width="8" height="1" fill="#fff"/><rect x="12" y="3" width="1" height="1" fill="#000"/><rect x="3" y="4" width="1" height="1" fill="#000"/><rect x="4" y="4" width="1" height="1" fill="#fff"/><rect x="5" y="4" width="5" height="1" fill="#000"/><rect x="10" y="4" width="1" height="1" fill="#fff"/><rect x="11" y="4" width="4" height="1" fill="#000"/><rect x="2" y="5" width="1" height="1" fill="#000"/><rect x="3" y="5" width="8" height="1" fill="#fff"/><rect x="11" y="5" width="1" height="1" fill="#000"/><rect x="12" y="5" width="1" height="1" fill="#fff"/><rect x="13" y="5" width="1" height="1" fill="#000"/><rect x="14" y="5" width="1" height="1" fill="#fff"/><rect x="15" y="5" width="1" height="1" fill="#000"/><rect x="1" y="6" width="12" height="1" fill="#000"/><rect x="13" y="6" width="1" height="1" fill="#fff"/><rect x="14" y="6" width="2" height="1" fill="#000"/><rect x="0" y="7" width="1" height="1" fill="#000"/><rect x="1" y="7" width="10" height="1" fill="#c6c3c6"/><rect x="11" y="7" width="1" height="1" fill="#000"/><rect x="12" y="7" width="1" height="1" fill="#fff"/><rect x="13" y="7" width="1" height="1" fill="#000"/><rect x="14" y="7" width="1" height="1" fill="#fff"/><rect x="15" y="7" width="1" height="1" fill="#000"/><rect x="0" y="8" width="13" height="1" fill="#000"/><rect x="13" y="8" width="1" height="1" fill="#fff"/><rect x="14" y="8" width="2" height="1" fill="#000"/><rect x="0" y="9" width="1" height="1" fill="#000"/><rect x="1" y="9" width="7" height="1" fill="#c6c3c6"/><rect x="8" y="9" width="3" height="1" fill="#fff"/><rect x="11" y="9" width="1" height="1" fill="#c6c3c6"/><rect x="12" y="9" width="1" height="1" fill="#000"/><rect x="13" y="9" width="1" height="1" fill="#fff"/><rect x="14" y="9" width="1" height="1" fill="#000"/><rect x="0" y="10" width="1" height="1" fill="#000"/><rect x="1" y="10" width="11" height="1" fill="#c6c3c6"/><rect x="12" y="10" width="3" height="1" fill="#000"/><rect x="1" y="11" width="12" height="1" fill="#000"/><rect x="13" y="11" width="1" height="1" fill="#fff"/><rect x="14" y="11" width="1" height="1" fill="#000"/><rect x="1" y="12" width="1" height="1" fill="#000"/><rect x="2" y="12" width="10" height="1" fill="#c6c3c6"/><rect x="12" y="12" width="2" height="1" fill="#000"/><rect x="14" y="12" width="1" height="1" fill="#fff"/><rect x="2" y="13" width="12" height="1" fill="#000"/></svg><svg style="left:111px;top:47px;" width="11" height="13" viewBox="0 0 11 13" shape-rendering="crispEdges"><rect x="3" y="0" width="5" height="1" fill="#000"/><rect x="2" y="1" width="1" height="1" fill="#000"/><rect x="3" y="1" width="5" height="1" fill="#c6c3c6"/><rect x="8" y="1" width="1" height="1" fill="#000"/><rect x="1" y="2" width="1" height="1" fill="#000"/><rect x="2" y="2" width="5" height="1" fill="#c6c3c6"/><rect x="7" y="2" width="2" height="1" fill="#fff"/><rect x="9" y="2" width="1" height="1" fill="#000"/><rect x="0" y="3" width="1" height="1" fill="#000"/><rect x="1" y="3" width="5" height="1" fill="#c6c3c6"/><rect x="6" y="3" width="2" height="1" fill="#fff"/><rect x="8" y="3" width="2" height="1" fill="#848284"/><rect x="10" y="3" width="1" height="1" fill="#000"/><rect x="0" y="4" width="2" height="1" fill="#000"/><rect x="2" y="4" width="3" height="1" fill="#c6c3c6"/><rect x="5" y="4" width="2" height="1" fill="#fff"/><rect x="7" y="4" width="2" height="1" fill="#848284"/><rect x="9" y="4" width="2" height="1" fill="#000"/><rect x="0" y="5" width="1" height="1" fill="#000"/><rect x="1" y="5" width="1" height="1" fill="#c6c3c6"/><rect x="2" y="5" width="2" height="1" fill="#000"/><rect x="4" y="5" width="2" height="1" fill="#fff"/><rect x="6" y="5" width="2" height="1" fill="#848284"/><rect x="8" y="5" width="1" height="1" fill="#000"/><rect x="9" y="5" width="1" height="1" fill="#848284"/><rect x="10" y="5" width="1" height="1" fill="#000"/><rect x="0" y="6" width="1" height="1" fill="#000"/><rect x="1" y="6" width="2" height="1" fill="#c6c3c6"/><rect x="3" y="6" width="5" height="1" fill="#000"/><rect x="8" y="6" width="2" height="1" fill="#848284"/><rect x="10" y="6" width="1" height="1" fill="#000"/><rect x="0" y="7" width="1" height="1" fill="#000"/><rect x="1" y="7" width="3" height="1" fill="#c6c3c6"/><rect x="4" y="7" width="2" height="1" fill="#fff"/><rect x="6" y="7" width="4" height="1" fill="#848284"/><rect x="10" y="7" width="1" height="1" fill="#000"/><rect x="0" y="8" width="1" height="1" fill="#000"/><rect x="1" y="8" width="3" height="1" fill="#c6c3c6"/><rect x="4" y="8" width="2" height="1" fill="#fff"/><rect x="6" y="8" width="4" height="1" fill="#848284"/><rect x="10" y="8" width="1" height="1" fill="#000"/><rect x="0" y="9" width="1" height="1" fill="#000"/><rect x="1" y="9" width="3" height="1" fill="#c6c3c6"/><rect x="4" y="9" width="2" height="1" fill="#fff"/><rect x="6" y="9" width="4" height="1" fill="#848284"/><rect x="10" y="9" width="1" height="1" fill="#000"/><rect x="1" y="10" width="1" height="1" fill="#000"/><rect x="2" y="10" width="2" height="1" fill="#c6c3c6"/><rect x="4" y="10" width="2" height="1" fill="#fff"/><rect x="6" y="10" width="3" height="1" fill="#848284"/><rect x="9" y="10" width="1" height="1" fill="#000"/><rect x="2" y="11" width="1" height="1" fill="#000"/><rect x="3" y="11" width="1" height="1" fill="#c6c3c6"/><rect x="4" y="11" width="2" height="1" fill="#fff"/><rect x="6" y="11" width="2" height="1" fill="#848284"/><rect x="8" y="11" width="1" height="1" fill="#000"/><rect x="3" y="12" width="5" height="1" fill="#000"/></svg><svg style="left:137px;top:43px;" width="23" height="22" viewBox="0 0 23 22" shape-rendering="crispEdges"><rect x="6" y="5" width="2" height="11" fill="#000"/><rect x="15" y="5" width="1" height="1" fill="#000"/><rect x="14" y="6" width="2" height="1" fill="#000"/><rect x="13" y="7" width="3" height="1" fill="#000"/><rect x="12" y="8" width="4" height="1" fill="#000"/><rect x="11" y="9" width="5" height="1" fill="#000"/><rect x="10" y="10" width="6" height="1" fill="#000"/><rect x="11" y="11" width="5" height="1" fill="#000"/><rect x="12" y="12" width="4" height="1" fill="#000"/><rect x="13" y="13" width="3" height="1" fill="#000"/><rect x="14" y="14" width="2" height="1" fill="#000"/><rect x="15" y="15" width="1" height="1" fill="#000"/></svg><svg style="left:160px;top:43px;" width="23" height="22" viewBox="0 0 23 22" shape-rendering="crispEdges"><rect x="13" y="5" width="1" height="1" fill="#000"/><rect x="12" y="6" width="2" height="1" fill="#000"/><rect x="11" y="7" width="3" height="1" fill="#000"/><rect x="10" y="8" width="4" height="1" fill="#000"/><rect x="9" y="9" width="5" height="1" fill="#000"/><rect x="8" y="10" width="6" height="1" fill="#000"/><rect x="9" y="11" width="5" height="1" fill="#000"/><rect x="10" y="12" width="4" height="1" fill="#000"/><rect x="11" y="13" width="3" height="1" fill="#000"/><rect x="12" y="14" width="2" height="1" fill="#000"/><rect x="13" y="15" width="1" height="1" fill="#000"/></svg><svg style="left:183px;top:43px;" width="23" height="22" viewBox="0 0 23 22" shape-rendering="crispEdges"><rect x="8" y="5" width="1" height="1" fill="#000"/><rect x="8" y="6" width="2" height="1" fill="#000"/><rect x="8" y="7" width="3" height="1" fill="#000"/><rect x="8" y="8" width="4" height="1" fill="#000"/><rect x="8" y="9" width="5" height="1" fill="#000"/><rect x="8" y="10" width="6" height="1" fill="#000"/><rect x="8" y="11" width="5" height="1" fill="#000"/><rect x="8" y="12" width="4" height="1" fill="#000"/><rect x="8" y="13" width="3" height="1" fill="#000"/><rect x="8" y="14" width="2" height="1" fill="#000"/><rect x="8" y="15" width="1" height="1" fill="#000"/></svg><svg style="left:206px;top:43px;" width="23" height="22" viewBox="0 0 23 22" shape-rendering="crispEdges"><rect x="6" y="5" width="1" height="1" fill="#000"/><rect x="6" y="6" width="2" height="1" fill="#000"/><rect x="6" y="7" width="3" height="1" fill="#000"/><rect x="6" y="8" width="4" height="1" fill="#000"/><rect x="6" y="9" width="5" height="1" fill="#000"/><rect x="6" y="10" width="6" height="1" fill="#000"/><rect x="6" y="11" width="5" height="1" fill="#000"/><rect x="6" y="12" width="4" height="1" fill="#000"/><rect x="6" y="13" width="3" height="1" fill="#000"/><rect x="6" y="14" width="2" height="1" fill="#000"/><rect x="6" y="15" width="1" height="1" fill="#000"/><rect x="14" y="5" width="2" height="11" fill="#000"/></svg><svg style="left:229px;top:43px;" width="23" height="22" viewBox="0 0 23 22" shape-rendering="crispEdges"><rect x="4" y="4" width="3" height="3" fill="#000"/><rect x="5" y="5" width="1" height="1" fill="#c6c3c6"/><rect x="8" y="4" width="3" height="3" fill="#000"/><rect x="9" y="5" width="1" height="1" fill="#c6c3c6"/><rect x="12" y="4" width="3" height="3" fill="#000"/><rect x="13" y="5" width="1" height="1" fill="#c6c3c6"/><rect x="16" y="4" width="3" height="3" fill="#000"/><rect x="17" y="5" width="1" height="1" fill="#c6c3c6"/><rect x="6" y="14" width="8" height="1" fill="#000"/><rect x="13" y="10" width="1" height="5" fill="#000"/><rect x="11" y="10" width="5" height="1" fill="#000"/><rect x="12" y="9" width="3" height="1" fill="#000"/><rect x="13" y="8" width="1" height="1" fill="#000"/></svg><svg style="left:265px;top:48px;" width="14" height="12" viewBox="0 0 14 12" shape-rendering="crispEdges"><rect x="6" y="1" width="1" height="3" fill="#fff"/><rect x="6" y="4" width="6" height="1" fill="#fff"/><rect x="13" y="4" width="1" height="4" fill="#fff"/><rect x="6" y="7" width="8" height="1" fill="#fff"/><rect x="6" y="8" width="1" height="4" fill="#fff"/><rect x="2" y="6" width="1" height="1" fill="#fff"/><rect x="3" y="7" width="1" height="1" fill="#fff"/><rect x="4" y="8" width="1" height="1" fill="#fff"/><rect x="5" y="9" width="1" height="1" fill="#fff"/><rect x="6" y="10" width="1" height="1" fill="#fff"/><rect x="5" y="0" width="1" height="1" fill="#848284"/><rect x="4" y="1" width="1" height="1" fill="#848284"/><rect x="3" y="2" width="1" height="1" fill="#848284"/><rect x="2" y="3" width="1" height="1" fill="#848284"/><rect x="1" y="4" width="1" height="1" fill="#848284"/><rect x="0" y="5" width="1" height="1" fill="#848284"/><rect x="1" y="6" width="1" height="1" fill="#848284"/><rect x="2" y="7" width="1" height="1" fill="#848284"/><rect x="3" y="8" width="1" height="1" fill="#848284"/><rect x="4" y="9" width="1" height="1" fill="#848284"/><rect x="5" y="10" width="1" height="1" fill="#848284"/><rect x="5" y="0" width="1" height="4" fill="#848284"/><rect x="5" y="3" width="8" height="1" fill="#848284"/><rect x="12" y="3" width="1" height="4" fill="#848284"/><rect x="5" y="6" width="8" height="1" fill="#848284"/><rect x="5" y="6" width="1" height="5" fill="#848284"/></svg><svg style="left:287px;top:48px;" width="14" height="12" viewBox="0 0 14 12" shape-rendering="crispEdges"><rect x="1" y="4" width="6" height="1" fill="#fff"/><rect x="1" y="7" width="7" height="1" fill="#fff"/><rect x="8" y="7" width="1" height="4" fill="#fff"/><rect x="13" y="5" width="1" height="1" fill="#fff"/><rect x="12" y="6" width="1" height="1" fill="#fff"/><rect x="11" y="7" width="1" height="1" fill="#fff"/><rect x="10" y="8" width="1" height="1" fill="#fff"/><rect x="9" y="9" width="1" height="1" fill="#fff"/><rect x="8" y="10" width="1" height="1" fill="#fff"/><rect x="7" y="11" width="1" height="1" fill="#fff"/><rect x="7" y="0" width="1" height="1" fill="#848284"/><rect x="8" y="1" width="1" height="1" fill="#848284"/><rect x="9" y="2" width="1" height="1" fill="#848284"/><rect x="10" y="3" width="1" height="1" fill="#848284"/><rect x="11" y="4" width="1" height="1" fill="#848284"/><rect x="12" y="5" width="1" height="1" fill="#848284"/><rect x="11" y="6" width="1" height="1" fill="#848284"/><rect x="10" y="7" width="1" height="1" fill="#848284"/><rect x="9" y="8" width="1" height="1" fill="#848284"/><rect x="8" y="9" width="1" height="1" fill="#848284"/><rect x="7" y="10" width="1" height="1" fill="#848284"/><rect x="7" y="0" width="1" height="4" fill="#848284"/><rect x="0" y="3" width="8" height="1" fill="#848284"/><rect x="0" y="3" width="1" height="4" fill="#848284"/><rect x="0" y="6" width="8" height="1" fill="#848284"/><rect x="7" y="6" width="1" height="5" fill="#848284"/></svg><svg style="left:317px;top:49px;" width="16" height="9" viewBox="0 0 16 9" shape-rendering="crispEdges"><rect x="5" y="0" width="4" height="1" fill="#000"/><rect x="12" y="0" width="4" height="1" fill="#000"/><rect x="5" y="1" width="2" height="1" fill="#000"/><rect x="8" y="1" width="2" height="1" fill="#000"/><rect x="11" y="1" width="2" height="1" fill="#000"/><rect x="15" y="1" width="1" height="1" fill="#000"/><rect x="5" y="2" width="2" height="1" fill="#000"/><rect x="8" y="2" width="2" height="1" fill="#000"/><rect x="11" y="2" width="2" height="1" fill="#000"/><rect x="2" y="3" width="1" height="1" fill="#000"/><rect x="5" y="3" width="2" height="1" fill="#000"/><rect x="8" y="3" width="2" height="1" fill="#000"/><rect x="11" y="3" width="2" height="1" fill="#000"/><rect x="0" y="4" width="4" height="1" fill="#000"/><rect x="5" y="4" width="4" height="1" fill="#000"/><rect x="11" y="4" width="2" height="1" fill="#000"/><rect x="0" y="5" width="4" height="1" fill="#000"/><rect x="5" y="5" width="2" height="1" fill="#000"/><rect x="8" y="5" width="2" height="1" fill="#000"/><rect x="11" y="5" width="2" height="1" fill="#000"/><rect x="2" y="6" width="1" height="1" fill="#000"/><rect x="5" y="6" width="2" height="1" fill="#000"/><rect x="8" y="6" width="2" height="1" fill="#000"/><rect x="11" y="6" width="2" height="1" fill="#000"/><rect x="5" y="7" width="2" height="1" fill="#000"/><rect x="8" y="7" width="2" height="1" fill="#000"/><rect x="11" y="7" width="2" height="1" fill="#000"/><rect x="15" y="7" width="1" height="1" fill="#000"/><rect x="5" y="8" width="4" height="1" fill="#000"/><rect x="12" y="8" width="4" height="1" fill="#000"/></svg><svg style="left:349px;top:47px;" width="13" height="13" viewBox="0 0 13 13" shape-rendering="crispEdges"><rect x="0" y="0" width="13" height="1" fill="#000"/><rect x="0" y="1" width="1" height="1" fill="#000"/><rect x="1" y="1" width="11" height="1" fill="#dcdcdc"/><rect x="12" y="1" width="1" height="1" fill="#000"/><rect x="0" y="2" width="13" height="1" fill="#000"/><rect x="0" y="3" width="1" height="1" fill="#000"/><rect x="1" y="3" width="3" height="1" fill="#dcdcdc"/><rect x="4" y="3" width="1" height="1" fill="#000"/><rect x="5" y="3" width="3" height="1" fill="#dcdcdc"/><rect x="8" y="3" width="1" height="1" fill="#000"/><rect x="9" y="3" width="3" height="1" fill="#dcdcdc"/><rect x="12" y="3" width="1" height="1" fill="#000"/><rect x="0" y="4" width="1" height="1" fill="#000"/><rect x="1" y="4" width="3" height="1" fill="#dcdcdc"/><rect x="4" y="4" width="1" height="1" fill="#000"/><rect x="5" y="4" width="3" height="1" fill="#dcdcdc"/><rect x="8" y="4" width="1" height="1" fill="#000"/><rect x="9" y="4" width="3" height="1" fill="#dcdcdc"/><rect x="12" y="4" width="1" height="1" fill="#000"/><rect x="0" y="5" width="1" height="1" fill="#000"/><rect x="1" y="5" width="3" height="1" fill="#dcdcdc"/><rect x="4" y="5" width="1" height="1" fill="#000"/><rect x="5" y="5" width="3" height="1" fill="#dcdcdc"/><rect x="8" y="5" width="1" height="1" fill="#000"/><rect x="9" y="5" width="3" height="1" fill="#dcdcdc"/><rect x="12" y="5" width="1" height="1" fill="#000"/><rect x="0" y="6" width="1" height="1" fill="#000"/><rect x="1" y="6" width="3" height="1" fill="#dcdcdc"/><rect x="4" y="6" width="1" height="1" fill="#000"/><rect x="5" y="6" width="3" height="1" fill="#dcdcdc"/><rect x="8" y="6" width="1" height="1" fill="#000"/><rect x="9" y="6" width="3" height="1" fill="#dcdcdc"/><rect x="12" y="6" width="1" height="1" fill="#000"/><rect x="0" y="7" width="13" height="1" fill="#000"/><rect x="0" y="8" width="1" height="1" fill="#000"/><rect x="1" y="8" width="3" height="1" fill="#dcdcdc"/><rect x="4" y="8" width="1" height="1" fill="#000"/><rect x="5" y="8" width="3" height="1" fill="#dcdcdc"/><rect x="8" y="8" width="1" height="1" fill="#000"/><rect x="9" y="8" width="3" height="1" fill="#dcdcdc"/><rect x="12" y="8" width="1" height="1" fill="#000"/><rect x="0" y="9" width="1" height="1" fill="#000"/><rect x="1" y="9" width="3" height="1" fill="#dcdcdc"/><rect x="4" y="9" width="1" height="1" fill="#000"/><rect x="5" y="9" width="3" height="1" fill="#dcdcdc"/><rect x="8" y="9" width="1" height="1" fill="#000"/><rect x="9" y="9" width="3" height="1" fill="#dcdcdc"/><rect x="12" y="9" width="1" height="1" fill="#000"/><rect x="0" y="10" width="1" height="1" fill="#000"/><rect x="1" y="10" width="3" height="1" fill="#dcdcdc"/><rect x="4" y="10" width="1" height="1" fill="#000"/><rect x="5" y="10" width="3" height="1" fill="#dcdcdc"/><rect x="8" y="10" width="1" height="1" fill="#000"/><rect x="9" y="10" width="3" height="1" fill="#dcdcdc"/><rect x="12" y="10" width="1" height="1" fill="#000"/><rect x="0" y="11" width="1" height="1" fill="#000"/><rect x="1" y="11" width="3" height="1" fill="#dcdcdc"/><rect x="4" y="11" width="1" height="1" fill="#000"/><rect x="5" y="11" width="3" height="1" fill="#dcdcdc"/><rect x="8" y="11" width="1" height="1" fill="#000"/><rect x="9" y="11" width="3" height="1" fill="#dcdcdc"/><rect x="12" y="11" width="1" height="1" fill="#000"/><rect x="0" y="12" width="13" height="1" fill="#000"/></svg><svg style="left:372px;top:47px;" width="16" height="15" viewBox="0 0 16 15" shape-rendering="crispEdges"><rect x="0" y="0" width="16" height="1" fill="#000"/><rect x="0" y="1" width="1" height="1" fill="#000"/><rect x="1" y="1" width="1" height="1" fill="#fff"/><rect x="2" y="1" width="1" height="1" fill="#c6c3c6"/><rect x="3" y="1" width="1" height="1" fill="#fff"/><rect x="4" y="1" width="1" height="1" fill="#000"/><rect x="5" y="1" width="1" height="1" fill="#fff"/><rect x="6" y="1" width="1" height="1" fill="#c6c3c6"/><rect x="7" y="1" width="1" height="1" fill="#fff"/><rect x="8" y="1" width="1" height="1" fill="#c6c3c6"/><rect x="9" y="1" width="2" height="1" fill="#000"/><rect x="11" y="1" width="1" height="1" fill="#fff"/><rect x="12" y="1" width="1" height="1" fill="#c6c3c6"/><rect x="13" y="1" width="3" height="1" fill="#000"/><rect x="0" y="2" width="1" height="1" fill="#000"/><rect x="1" y="2" width="1" height="1" fill="#c6c3c6"/><rect x="2" y="2" width="1" height="1" fill="#fff"/><rect x="3" y="2" width="1" height="1" fill="#c6c3c6"/><rect x="4" y="2" width="1" height="1" fill="#000"/><rect x="5" y="2" width="1" height="1" fill="#c6c3c6"/><rect x="6" y="2" width="1" height="1" fill="#fff"/><rect x="7" y="2" width="1" height="1" fill="#c6c3c6"/><rect x="8" y="2" width="1" height="1" fill="#000"/><rect x="9" y="2" width="1" height="1" fill="#c6c3c6"/><rect x="10" y="2" width="1" height="1" fill="#fff"/><rect x="11" y="2" width="1" height="1" fill="#000"/><rect x="12" y="2" width="1" height="1" fill="#fff"/><rect x="13" y="2" width="1" height="1" fill="#c6c3c6"/><rect x="14" y="2" width="2" height="1" fill="#000"/><rect x="0" y="3" width="1" height="1" fill="#000"/><rect x="1" y="3" width="1" height="1" fill="#fff"/><rect x="2" y="3" width="1" height="1" fill="#c6c3c6"/><rect x="3" y="3" width="1" height="1" fill="#fff"/><rect x="4" y="3" width="1" height="1" fill="#000"/><rect x="5" y="3" width="1" height="1" fill="#fff"/><rect x="6" y="3" width="1" height="1" fill="#c6c3c6"/><rect x="7" y="3" width="1" height="1" fill="#000"/><rect x="8" y="3" width="1" height="1" fill="#c6c3c6"/><rect x="9" y="3" width="1" height="1" fill="#fff"/><rect x="10" y="3" width="1" height="1" fill="#c6c3c6"/><rect x="11" y="3" width="1" height="1" fill="#fff"/><rect x="12" y="3" width="1" height="1" fill="#000"/><rect x="13" y="3" width="1" height="1" fill="#fff"/><rect x="14" y="3" width="1" height="1" fill="#c6c3c6"/><rect x="15" y="3" width="1" height="1" fill="#000"/><rect x="0" y="4" width="1" height="1" fill="#000"/><rect x="1" y="4" width="1" height="1" fill="#c6c3c6"/><rect x="2" y="4" width="1" height="1" fill="#fff"/><rect x="3" y="4" width="1" height="1" fill="#c6c3c6"/><rect x="4" y="4" width="1" height="1" fill="#000"/><rect x="5" y="4" width="1" height="1" fill="#c6c3c6"/><rect x="6" y="4" width="1" height="1" fill="#fff"/><rect x="7" y="4" width="1" height="1" fill="#000"/><rect x="8" y="4" width="1" height="1" fill="#fff"/><rect x="9" y="4" width="1" height="1" fill="#000"/><rect x="10" y="4" width="1" height="1" fill="#fff"/><rect x="11" y="4" width="1" height="1" fill="#c6c3c6"/><rect x="12" y="4" width="1" height="1" fill="#fff"/><rect x="13" y="4" width="1" height="1" fill="#c6c3c6"/><rect x="14" y="4" width="1" height="1" fill="#fff"/><rect x="15" y="4" width="1" height="1" fill="#000"/><rect x="0" y="5" width="1" height="1" fill="#000"/><rect x="1" y="5" width="1" height="1" fill="#fff"/><rect x="2" y="5" width="1" height="1" fill="#c6c3c6"/><rect x="3" y="5" width="1" height="1" fill="#fff"/><rect x="4" y="5" width="1" height="1" fill="#000"/><rect x="5" y="5" width="1" height="1" fill="#fff"/><rect x="6" y="5" width="1" height="1" fill="#c6c3c6"/><rect x="7" y="5" width="1" height="1" fill="#000"/><rect x="8" y="5" width="1" height="1" fill="#c6c3c6"/><rect x="9" y="5" width="1" height="1" fill="#000"/><rect x="10" y="5" width="1" height="1" fill="#c6c3c6"/><rect x="11" y="5" width="1" height="1" fill="#fff"/><rect x="12" y="5" width="1" height="1" fill="#000"/><rect x="13" y="5" width="1" height="1" fill="#fff"/><rect x="14" y="5" width="1" height="1" fill="#c6c3c6"/><rect x="15" y="5" width="1" height="1" fill="#000"/><rect x="0" y="6" width="1" height="1" fill="#000"/><rect x="1" y="6" width="1" height="1" fill="#c6c3c6"/><rect x="2" y="6" width="1" height="1" fill="#fff"/><rect x="3" y="6" width="1" height="1" fill="#c6c3c6"/><rect x="4" y="6" width="1" height="1" fill="#000"/><rect x="5" y="6" width="1" height="1" fill="#c6c3c6"/><rect x="6" y="6" width="1" height="1" fill="#fff"/><rect x="7" y="6" width="1" height="1" fill="#000"/><rect x="8" y="6" width="1" height="1" fill="#fff"/><rect x="9" y="6" width="1" height="1" fill="#c6c3c6"/><rect x="10" y="6" width="1" height="1" fill="#fff"/><rect x="11" y="6" width="1" height="1" fill="#000"/><rect x="12" y="6" width="1" height="1" fill="#fff"/><rect x="13" y="6" width="1" height="1" fill="#000"/><rect x="14" y="6" width="1" height="1" fill="#fff"/><rect x="15" y="6" width="1" height="1" fill="#000"/><rect x="0" y="7" width="1" height="1" fill="#000"/><rect x="1" y="7" width="1" height="1" fill="#fff"/><rect x="2" y="7" width="1" height="1" fill="#c6c3c6"/><rect x="3" y="7" width="1" height="1" fill="#fff"/><rect x="4" y="7" width="1" height="1" fill="#000"/><rect x="5" y="7" width="1" height="1" fill="#fff"/><rect x="6" y="7" width="1" height="1" fill="#c6c3c6"/><rect x="7" y="7" width="1" height="1" fill="#fff"/><rect x="8" y="7" width="1" height="1" fill="#000"/><rect x="9" y="7" width="1" height="1" fill="#fff"/><rect x="10" y="7" width="1" height="1" fill="#c6c3c6"/><rect x="11" y="7" width="1" height="1" fill="#fff"/><rect x="12" y="7" width="1" height="1" fill="#000"/><rect x="13" y="7" width="1" height="1" fill="#fff"/><rect x="14" y="7" width="2" height="1" fill="#000"/><rect x="0" y="8" width="1" height="1" fill="#000"/><rect x="1" y="8" width="1" height="1" fill="#c6c3c6"/><rect x="2" y="8" width="1" height="1" fill="#fff"/><rect x="3" y="8" width="1" height="1" fill="#c6c3c6"/><rect x="4" y="8" width="1" height="1" fill="#000"/><rect x="5" y="8" width="1" height="1" fill="#c6c3c6"/><rect x="6" y="8" width="1" height="1" fill="#fff"/><rect x="7" y="8" width="1" height="1" fill="#c6c3c6"/><rect x="8" y="8" width="1" height="1" fill="#fff"/><rect x="9" y="8" width="2" height="1" fill="#000"/><rect x="11" y="8" width="1" height="1" fill="#c6c3c6"/><rect x="12" y="8" width="1" height="1" fill="#fff"/><rect x="13" y="8" width="3" height="1" fill="#000"/><rect x="0" y="9" width="1" height="1" fill="#000"/><rect x="1" y="9" width="1" height="1" fill="#fff"/><rect x="2" y="9" width="1" height="1" fill="#c6c3c6"/><rect x="3" y="9" width="1" height="1" fill="#fff"/><rect x="4" y="9" width="1" height="1" fill="#000"/><rect x="5" y="9" width="1" height="1" fill="#fff"/><rect x="6" y="9" width="1" height="1" fill="#c6c3c6"/><rect x="7" y="9" width="1" height="1" fill="#fff"/><rect x="8" y="9" width="1" height="1" fill="#c6c3c6"/><rect x="9" y="9" width="1" height="1" fill="#fff"/><rect x="10" y="9" width="1" height="1" fill="#c6c3c6"/><rect x="11" y="9" width="1" height="1" fill="#fff"/><rect x="12" y="9" width="1" height="1" fill="#c6c3c6"/><rect x="13" y="9" width="3" height="1" fill="#000"/><rect x="0" y="10" width="1" height="1" fill="#000"/><rect x="1" y="10" width="1" height="1" fill="#c6c3c6"/><rect x="2" y="10" width="1" height="1" fill="#fff"/><rect x="3" y="10" width="1" height="1" fill="#c6c3c6"/><rect x="4" y="10" width="1" height="1" fill="#000"/><rect x="5" y="10" width="1" height="1" fill="#c6c3c6"/><rect x="6" y="10" width="1" height="1" fill="#fff"/><rect x="7" y="10" width="1" height="1" fill="#c6c3c6"/><rect x="8" y="10" width="1" height="1" fill="#fff"/><rect x="9" y="10" width="1" height="1" fill="#c6c3c6"/><rect x="10" y="10" width="1" height="1" fill="#fff"/><rect x="11" y="10" width="1" height="1" fill="#c6c3c6"/><rect x="12" y="10" width="1" height="1" fill="#fff"/><rect x="13" y="10" width="1" height="1" fill="#c6c3c6"/><rect x="14" y="10" width="2" height="1" fill="#000"/><rect x="0" y="11" width="1" height="1" fill="#000"/><rect x="1" y="11" width="1" height="1" fill="#fff"/><rect x="2" y="11" width="1" height="1" fill="#c6c3c6"/><rect x="3" y="11" width="1" height="1" fill="#fff"/><rect x="4" y="11" width="12" height="1" fill="#000"/><rect x="0" y="12" width="1" height="1" fill="#000"/><rect x="1" y="12" width="1" height="1" fill="#c6c3c6"/><rect x="2" y="12" width="1" height="1" fill="#fff"/><rect x="3" y="12" width="1" height="1" fill="#c6c3c6"/><rect x="4" y="12" width="1" height="1" fill="#fff"/><rect x="5" y="12" width="1" height="1" fill="#c6c3c6"/><rect x="6" y="12" width="1" height="1" fill="#fff"/><rect x="7" y="12" width="1" height="1" fill="#c6c3c6"/><rect x="8" y="12" width="1" height="1" fill="#fff"/><rect x="9" y="12" width="1" height="1" fill="#c6c3c6"/><rect x="10" y="12" width="1" height="1" fill="#fff"/><rect x="11" y="12" width="1" height="1" fill="#c6c3c6"/><rect x="12" y="12" width="1" height="1" fill="#fff"/><rect x="13" y="12" width="1" height="1" fill="#c6c3c6"/><rect x="14" y="12" width="1" height="1" fill="#fff"/><rect x="15" y="12" width="1" height="1" fill="#000"/><rect x="0" y="13" width="1" height="1" fill="#000"/><rect x="1" y="13" width="1" height="1" fill="#fff"/><rect x="2" y="13" width="1" height="1" fill="#c6c3c6"/><rect x="3" y="13" width="1" height="1" fill="#fff"/><rect x="4" y="13" width="1" height="1" fill="#c6c3c6"/><rect x="5" y="13" width="1" height="1" fill="#fff"/><rect x="6" y="13" width="1" height="1" fill="#c6c3c6"/><rect x="7" y="13" width="1" height="1" fill="#fff"/><rect x="8" y="13" width="1" height="1" fill="#c6c3c6"/><rect x="9" y="13" width="1" height="1" fill="#fff"/><rect x="10" y="13" width="1" height="1" fill="#c6c3c6"/><rect x="11" y="13" width="1" height="1" fill="#fff"/><rect x="12" y="13" width="1" height="1" fill="#c6c3c6"/><rect x="13" y="13" width="1" height="1" fill="#fff"/><rect x="14" y="13" width="1" height="1" fill="#c6c3c6"/><rect x="15" y="13" width="1" height="1" fill="#000"/><rect x="0" y="14" width="16" height="1" fill="#000"/></svg><svg style="left:394px;top:46px;" width="17" height="15" viewBox="0 0 17 15" shape-rendering="crispEdges"><rect x="4" y="0" width="3" height="1" fill="#848284"/><rect x="3" y="1" width="1" height="1" fill="#848284"/><rect x="4" y="1" width="2" height="1" fill="#fff"/><rect x="6" y="1" width="2" height="1" fill="#848284"/><rect x="2" y="2" width="1" height="1" fill="#848284"/><rect x="3" y="2" width="2" height="1" fill="#fff"/><rect x="7" y="2" width="2" height="1" fill="#848284"/><rect x="1" y="3" width="1" height="1" fill="#848284"/><rect x="2" y="3" width="1" height="1" fill="#fff"/><rect x="8" y="3" width="2" height="1" fill="#848284"/><rect x="0" y="4" width="1" height="1" fill="#848284"/><rect x="1" y="4" width="1" height="1" fill="#fff"/><rect x="3" y="4" width="2" height="1" fill="#848284"/><rect x="9" y="4" width="2" height="1" fill="#848284"/><rect x="0" y="5" width="1" height="1" fill="#848284"/><rect x="1" y="5" width="1" height="1" fill="#fff"/><rect x="4" y="5" width="2" height="1" fill="#848284"/><rect x="10" y="5" width="1" height="1" fill="#848284"/><rect x="11" y="5" width="1" height="1" fill="#fff"/><rect x="0" y="6" width="1" height="1" fill="#848284"/><rect x="1" y="6" width="1" height="1" fill="#fff"/><rect x="4" y="6" width="2" height="1" fill="#848284"/><rect x="6" y="6" width="1" height="1" fill="#fff"/><rect x="7" y="6" width="2" height="1" fill="#848284"/><rect x="11" y="6" width="1" height="1" fill="#fff"/><rect x="0" y="7" width="1" height="1" fill="#848284"/><rect x="1" y="7" width="1" height="1" fill="#fff"/><rect x="5" y="7" width="2" height="1" fill="#848284"/><rect x="7" y="7" width="1" height="1" fill="#fff"/><rect x="8" y="7" width="2" height="1" fill="#848284"/><rect x="0" y="8" width="1" height="1" fill="#848284"/><rect x="1" y="8" width="1" height="1" fill="#fff"/><rect x="6" y="8" width="2" height="1" fill="#848284"/><rect x="8" y="8" width="1" height="1" fill="#fff"/><rect x="9" y="8" width="2" height="1" fill="#848284"/><rect x="0" y="9" width="1" height="1" fill="#848284"/><rect x="1" y="9" width="1" height="1" fill="#fff"/><rect x="7" y="9" width="5" height="1" fill="#848284"/><rect x="1" y="10" width="2" height="1" fill="#848284"/><rect x="7" y="10" width="6" height="1" fill="#848284"/><rect x="2" y="11" width="2" height="1" fill="#848284"/><rect x="8" y="11" width="6" height="1" fill="#848284"/><rect x="3" y="12" width="1" height="1" fill="#848284"/><rect x="4" y="12" width="1" height="1" fill="#fff"/><rect x="9" y="12" width="6" height="1" fill="#848284"/><rect x="4" y="13" width="2" height="1" fill="#fff"/><rect x="10" y="13" width="6" height="1" fill="#848284"/><rect x="11" y="14" width="4" height="1" fill="#fff"/><rect x="16" y="14" width="1" height="1" fill="#fff"/></svg><svg style="left:425px;top:46px;" width="16" height="15" viewBox="0 0 16 15" shape-rendering="crispEdges"><rect x="0" y="0" width="16" height="1" fill="#000"/><rect x="0" y="1" width="1" height="1" fill="#000"/><rect x="15" y="1" width="1" height="1" fill="#000"/><rect x="0" y="2" width="1" height="1" fill="#000"/><rect x="2" y="2" width="12" height="1" fill="#000"/><rect x="15" y="2" width="1" height="1" fill="#000"/><rect x="0" y="3" width="1" height="1" fill="#000"/><rect x="15" y="3" width="1" height="1" fill="#000"/><rect x="0" y="4" width="8" height="1" fill="#000"/><rect x="10" y="4" width="1" height="1" fill="#000"/><rect x="13" y="4" width="3" height="1" fill="#000"/><rect x="10" y="5" width="1" height="1" fill="#000"/><rect x="0" y="6" width="9" height="1" fill="#000"/><rect x="10" y="6" width="1" height="1" fill="#000"/><rect x="13" y="6" width="3" height="1" fill="#000"/><rect x="0" y="7" width="1" height="1" fill="#000"/><rect x="9" y="7" width="3" height="1" fill="#000"/><rect x="15" y="7" width="1" height="1" fill="#000"/><rect x="0" y="8" width="8" height="1" fill="#000"/><rect x="10" y="8" width="1" height="1" fill="#000"/><rect x="13" y="8" width="1" height="1" fill="#000"/><rect x="15" y="8" width="1" height="1" fill="#000"/><rect x="0" y="9" width="1" height="1" fill="#000"/><rect x="15" y="9" width="1" height="1" fill="#000"/><rect x="0" y="10" width="1" height="1" fill="#000"/><rect x="2" y="10" width="1" height="1" fill="#000"/><rect x="8" y="10" width="6" height="1" fill="#000"/><rect x="0" y="11" width="1" height="1" fill="#000"/><rect x="2" y="11" width="1" height="1" fill="#000"/><rect x="6" y="11" width="1" height="1" fill="#000"/><rect x="8" y="11" width="1" height="1" fill="#000"/><rect x="13" y="11" width="1" height="1" fill="#000"/><rect x="0" y="12" width="1" height="1" fill="#000"/><rect x="2" y="12" width="7" height="1" fill="#000"/><rect x="10" y="12" width="2" height="1" fill="#000"/><rect x="13" y="12" width="1" height="1" fill="#000"/><rect x="0" y="13" width="1" height="1" fill="#000"/><rect x="6" y="13" width="1" height="1" fill="#000"/><rect x="8" y="13" width="1" height="1" fill="#000"/><rect x="13" y="13" width="1" height="1" fill="#000"/><rect x="0" y="14" width="3" height="1" fill="#000"/><rect x="8" y="14" width="6" height="1" fill="#000"/></svg><svg style="left:449px;top:46px;" width="15" height="15" viewBox="0 0 15 15" shape-rendering="crispEdges"><rect x="0" y="0" width="15" height="1" fill="#000"/><rect x="0" y="1" width="1" height="1" fill="#000"/><rect x="14" y="1" width="1" height="1" fill="#000"/><rect x="0" y="2" width="1" height="1" fill="#000"/><rect x="2" y="2" width="11" height="1" fill="#000"/><rect x="14" y="2" width="1" height="1" fill="#000"/><rect x="0" y="3" width="1" height="1" fill="#000"/><rect x="14" y="3" width="1" height="1" fill="#000"/><rect x="0" y="4" width="1" height="1" fill="#000"/><rect x="2" y="4" width="11" height="1" fill="#000"/><rect x="14" y="4" width="1" height="1" fill="#000"/><rect x="0" y="5" width="1" height="1" fill="#000"/><rect x="14" y="5" width="1" height="1" fill="#000"/><rect x="0" y="6" width="15" height="1" fill="#000"/><rect x="0" y="8" width="3" height="1" fill="#000"/><rect x="6" y="8" width="3" height="1" fill="#000"/><rect x="12" y="8" width="3" height="1" fill="#000"/><rect x="0" y="9" width="1" height="1" fill="#000"/><rect x="2" y="9" width="1" height="1" fill="#000"/><rect x="4" y="9" width="1" height="1" fill="#000"/><rect x="6" y="9" width="1" height="1" fill="#000"/><rect x="8" y="9" width="1" height="1" fill="#000"/><rect x="10" y="9" width="1" height="1" fill="#000"/><rect x="12" y="9" width="1" height="1" fill="#000"/><rect x="14" y="9" width="1" height="1" fill="#000"/><rect x="0" y="10" width="3" height="1" fill="#000"/><rect x="6" y="10" width="3" height="1" fill="#000"/><rect x="12" y="10" width="3" height="1" fill="#000"/><rect x="0" y="12" width="15" height="1" fill="#000"/><rect x="0" y="13" width="1" height="1" fill="#000"/><rect x="14" y="13" width="1" height="1" fill="#000"/><rect x="0" y="14" width="1" height="1" fill="#000"/><rect x="2" y="14" width="11" height="1" fill="#000"/><rect x="14" y="14" width="1" height="1" fill="#000"/></svg><div class="se" style="left:479px;top:46px;font-size:14px;line-height:15px;letter-spacing:-0.6px">Cit</div><svg style="left:513px;top:46px;" width="10" height="14" viewBox="0 0 10 14" shape-rendering="crispEdges"><rect x="0" y="0" width="2" height="1" fill="#fff" opacity="0"/><rect x="2" y="0" width="6" height="1" fill="#000"/><rect x="8" y="0" width="2" height="1" fill="#fff" opacity="0"/><rect x="0" y="1" width="1" height="1" fill="#fff" opacity="0"/><rect x="1" y="1" width="2" height="1" fill="#000"/><rect x="3" y="1" width="4" height="1" fill="#fff" opacity="0"/><rect x="7" y="1" width="2" height="1" fill="#000"/><rect x="9" y="1" width="1" height="1" fill="#fff" opacity="0"/><rect x="0" y="2" width="2" height="1" fill="#000"/><rect x="2" y="2" width="1" height="1" fill="#fff" opacity="0"/><rect x="3" y="2" width="4" height="1" fill="#000"/><rect x="7" y="2" width="1" height="1" fill="#fff" opacity="0"/><rect x="8" y="2" width="2" height="1" fill="#000"/><rect x="0" y="3" width="3" height="1" fill="#000"/><rect x="3" y="3" width="3" height="1" fill="#fff" opacity="0"/><rect x="6" y="3" width="1" height="1" fill="#000"/><rect x="7" y="3" width="1" height="1" fill="#fff" opacity="0"/><rect x="8" y="3" width="2" height="1" fill="#000"/><rect x="0" y="4" width="6" height="1" fill="#fff" opacity="0"/><rect x="6" y="4" width="1" height="1" fill="#000"/><rect x="7" y="4" width="1" height="1" fill="#fff" opacity="0"/><rect x="8" y="4" width="2" height="1" fill="#000"/><rect x="0" y="5" width="5" height="1" fill="#fff" opacity="0"/><rect x="5" y="5" width="1" height="1" fill="#000"/><rect x="6" y="5" width="1" height="1" fill="#fff" opacity="0"/><rect x="7" y="5" width="2" height="1" fill="#000"/><rect x="9" y="5" width="1" height="1" fill="#fff" opacity="0"/><rect x="0" y="6" width="4" height="1" fill="#fff" opacity="0"/><rect x="4" y="6" width="1" height="1" fill="#000"/><rect x="5" y="6" width="1" height="1" fill="#fff" opacity="0"/><rect x="6" y="6" width="2" height="1" fill="#000"/><rect x="8" y="6" width="2" height="1" fill="#fff" opacity="0"/><rect x="0" y="7" width="3" height="1" fill="#fff" opacity="0"/><rect x="3" y="7" width="1" height="1" fill="#000"/><rect x="4" y="7" width="1" height="1" fill="#fff" opacity="0"/><rect x="5" y="7" width="2" height="1" fill="#000"/><rect x="7" y="7" width="3" height="1" fill="#fff" opacity="0"/><rect x="0" y="8" width="3" height="1" fill="#fff" opacity="0"/><rect x="3" y="8" width="1" height="1" fill="#000"/><rect x="4" y="8" width="1" height="1" fill="#fff" opacity="0"/><rect x="5" y="8" width="1" height="1" fill="#000"/><rect x="6" y="8" width="4" height="1" fill="#fff" opacity="0"/><rect x="0" y="9" width="3" height="1" fill="#fff" opacity="0"/><rect x="3" y="9" width="3" height="1" fill="#000"/><rect x="6" y="9" width="4" height="1" fill="#fff" opacity="0"/><rect x="0" y="10" width="2" height="1" fill="#fff" opacity="0"/><rect x="2" y="10" width="2" height="1" fill="#000"/><rect x="4" y="10" width="1" height="1" fill="#fff" opacity="0"/><rect x="5" y="10" width="2" height="1" fill="#000"/><rect x="7" y="10" width="3" height="1" fill="#fff" opacity="0"/><rect x="0" y="11" width="2" height="1" fill="#fff" opacity="0"/><rect x="2" y="11" width="1" height="1" fill="#000"/><rect x="3" y="11" width="3" height="1" fill="#fff" opacity="0"/><rect x="6" y="11" width="1" height="1" fill="#000"/><rect x="7" y="11" width="3" height="1" fill="#fff" opacity="0"/><rect x="0" y="12" width="2" height="1" fill="#fff" opacity="0"/><rect x="2" y="12" width="2" height="1" fill="#000"/><rect x="4" y="12" width="1" height="1" fill="#fff" opacity="0"/><rect x="5" y="12" width="2" height="1" fill="#000"/><rect x="7" y="12" width="3" height="1" fill="#fff" opacity="0"/><rect x="0" y="13" width="3" height="1" fill="#fff" opacity="0"/><rect x="3" y="13" width="3" height="1" fill="#000"/><rect x="6" y="13" width="4" height="1" fill="#fff" opacity="0"/></svg><svg style="left:533px;top:46px;" width="7" height="13" viewBox="0 0 7 13" shape-rendering="crispEdges"><rect x="0" y="0" width="1" height="1" fill="#000"/><rect x="0" y="1" width="2" height="1" fill="#000"/><rect x="0" y="2" width="3" height="1" fill="#000"/><rect x="0" y="3" width="4" height="1" fill="#000"/><rect x="0" y="4" width="5" height="1" fill="#000"/><rect x="0" y="5" width="6" height="1" fill="#000"/><rect x="0" y="6" width="7" height="1" fill="#000"/><rect x="0" y="7" width="4" height="1" fill="#000"/><rect x="0" y="8" width="2" height="1" fill="#000"/><rect x="3" y="8" width="2" height="1" fill="#000"/><rect x="0" y="9" width="1" height="1" fill="#000"/><rect x="3" y="9" width="2" height="1" fill="#000"/><rect x="4" y="10" width="2" height="1" fill="#000"/><rect x="4" y="11" width="2" height="1" fill="#000"/><rect x="5" y="12" width="2" height="1" fill="#000"/></svg><svg style="left:540px;top:47px;" width="8" height="11" viewBox="0 0 8 11" shape-rendering="crispEdges"><rect x="2" y="0" width="4" height="1" fill="#000"/><rect x="1" y="1" width="2" height="1" fill="#000"/><rect x="5" y="1" width="2" height="1" fill="#000"/><rect x="0" y="2" width="2" height="1" fill="#000"/><rect x="6" y="2" width="2" height="1" fill="#000"/><rect x="6" y="3" width="2" height="1" fill="#000"/><rect x="5" y="4" width="2" height="1" fill="#000"/><rect x="4" y="5" width="2" height="1" fill="#000"/><rect x="3" y="6" width="2" height="1" fill="#000"/><rect x="3" y="7" width="2" height="1" fill="#000"/><rect x="3" y="9" width="2" height="1" fill="#000"/><rect x="3" y="10" width="2" height="1" fill="#000"/></svg><div class="se" style="left:566px;top:46px;color:#fff;font-size:13px;line-height:15px;letter-spacing:0px">T1</div><div class="se" style="left:565px;top:45px;color:#848284;font-size:13px;line-height:15px;letter-spacing:0px">T1</div><div class="se" style="left:589px;top:46px;color:#fff;font-size:13px;line-height:15px;letter-spacing:0px">T2</div><div class="se" style="left:588px;top:45px;color:#848284;font-size:13px;line-height:15px;letter-spacing:0px">T2</div><div class="se" style="left:612px;top:46px;color:#fff;font-size:13px;line-height:15px;letter-spacing:0px">T3</div><div class="se" style="left:611px;top:45px;color:#848284;font-size:13px;line-height:15px;letter-spacing:0px">T3</div><div class="se" style="left:635px;top:46px;color:#fff;font-size:13px;line-height:15px;letter-spacing:0px">T4</div><div class="se" style="left:634px;top:45px;color:#848284;font-size:13px;line-height:15px;letter-spacing:0px">T4</div><div class="se" style="left:658px;top:46px;color:#fff;font-size:13px;line-height:15px;letter-spacing:0px">T5</div><div class="se" style="left:657px;top:45px;color:#848284;font-size:13px;line-height:15px;letter-spacing:0px">T5</div><div class="a" style="left:0px;top:68px;width:1024px;height:654px;background:#fff;box-shadow:inset 1px 1px #848284,inset 2px 2px #000,inset -1px -1px #fff,inset -2px -2px #c6c3c6"></div><div class="a" style="left:0;top:0;width:1006px;height:720px;overflow:hidden"><div class="h" style="left:4px;top:71px;">Reaction</div><div class="a" style="left:4px;top:87px;width:60px;height:2px;background:#000;"></div><div class="a" style="left:4px;top:96px;width:1001px;height:1px;background:#000;"></div><div class="a" style="left:4px;top:170px;width:1001px;height:1px;background:#000;"></div><div class="a" style="left:4px;top:96px;width:1px;height:75px;background:#000;"></div><div class="a" style="left:1004px;top:96px;width:1px;height:75px;background:#000;"></div><div class="se" style="left:7px;top:104px;">Reaction ID</div><div class="se" style="left:150px;top:104px;">137362</div><div class="se" style="left:7px;top:119px;">Reactant BRN</div><div class="se" style="left:150px;top:119px;"><span style="font-style:italic;text-decoration:underline">140609</span><span style="letter-spacing:-0.55px"> 3-hydroxy-indole-2-carboxylic acid</span></div><div class="se" style="left:7px;top:134px;">Product BRN</div><div class="se" style="left:150px;top:134px;"><span style="font-style:italic;text-decoration:underline;color:#0000ff">383659</span><span style="letter-spacing:-0.6px"> indole-2,3-dione</span></div><div class="se" style="left:7px;top:149px;">No. of Reaction Details</div><div class="se" style="left:150px;top:149px;">4</div><div class="h" style="left:4px;top:180px;letter-spacing:-0.15px">Field Availability List</div><div class="a" style="left:4px;top:196px;width:143px;height:2px;background:#000;"></div><div class="home" style="left:160px;top:180px;">Home</div><div class="a" style="left:4px;top:204px;width:331px;height:3px;background:#000;"></div><div class="a" style="left:4px;top:264px;width:331px;height:3px;background:#000;"></div><div class="a" style="left:4px;top:204px;width:1px;height:63px;background:#000;"></div><div class="a" style="left:334px;top:204px;width:1px;height:63px;background:#000;"></div><div class="a" style="left:4px;top:235px;width:331px;height:1px;background:#000;"></div><div class="a" style="left:54px;top:206px;width:1px;height:59px;background:#000;"></div><div class="a" style="left:254px;top:206px;width:1px;height:59px;background:#000;"></div><div class="se" style="left:7px;top:213px;">Code</div><div class="se" style="left:57px;top:213px;">Field Name</div><div class="se" style="left:258px;top:213px;">Occ.</div><div class="se" style="left:7px;top:243px;"><span style="font-style:italic;text-decoration:underline;color:#0a3a8c">RX</span></div><div class="se" style="left:57px;top:243px;">Reaction Details</div><div class="se" style="left:258px;top:243px;">4</div><div class="h" style="left:4px;top:274px;">Reaction Details 1 of 4</div><div class="a" style="left:4px;top:290px;width:152px;height:2px;background:#000;"></div><div class="home" style="left:170px;top:274px;">Home</div><div class="a" style="left:4px;top:299px;width:1001px;height:1px;background:#000;"></div><div class="a" style="left:4px;top:359px;width:1001px;height:1px;background:#000;"></div><div class="a" style="left:4px;top:299px;width:1px;height:91px;background:#000;"></div><div class="a" style="left:1004px;top:299px;width:1px;height:91px;background:#000;"></div><div class="a" style="left:4px;top:389px;width:1001px;height:1px;background:#000;"></div><div class="se" style="left:7px;top:307px;">Reaction Classification</div><div class="se" style="left:150px;top:307px;">Preparation</div><div class="se" style="left:7px;top:322px;">Reagent</div><div class="se" style="left:150px;top:322px;">potassium permanganate</div><div class="se" style="left:150px;top:337px;">alkali</div><div class="se" style="left:7px;top:367px;">Ref. 1</div><div class="se" style="left:67px;top:367px;"><span style="font-style:italic;text-decoration:underline;color:#008200">1010148</span>,<span style="text-decoration:underline;color:#0a3a8c"> </span><span style="font-style:italic;text-decoration:underline;color:#0a3a8c">LitLink</span></div><div class="se" style="left:168px;top:367px;">; Patent; BASF; DE 107719; FTFVA6; Fortschr.Teerfarbenfabr.Verw.Industriezweige; DE; GE; 5; 397.</div><div class="h" style="left:4px;top:398px;">Reaction Details 2 of 4</div><div class="a" style="left:4px;top:414px;width:152px;height:2px;background:#000;"></div><div class="home" style="left:170px;top:398px;">Home</div><div class="a" style="left:4px;top:423px;width:1001px;height:1px;background:#000;"></div><div class="a" style="left:4px;top:483px;width:1001px;height:1px;background:#000;"></div><div class="a" style="left:4px;top:423px;width:1px;height:91px;background:#000;"></div><div class="a" style="left:1004px;top:423px;width:1px;height:91px;background:#000;"></div><div class="a" style="left:4px;top:513px;width:1001px;height:1px;background:#000;"></div><div class="se" style="left:7px;top:431px;">Reaction Classification</div><div class="se" style="left:150px;top:431px;">Preparation</div><div class="se" style="left:7px;top:446px;">Reagent</div><div class="se" style="left:150px;top:446px;">potassium ferricyanide</div><div class="se" style="left:150px;top:461px;">alkali</div><div class="se" style="left:7px;top:491px;">Ref. 1</div><div class="se" style="left:67px;top:491px;"><span style="font-style:italic;text-decoration:underline;color:#008200">1010148</span>,<span style="text-decoration:underline;color:#0a3a8c"> </span><span style="font-style:italic;text-decoration:underline;color:#0a3a8c">LitLink</span></div><div class="se" style="left:168px;top:491px;">; Patent; BASF; DE 107719; FTFVA6; Fortschr.Teerfarbenfabr.Verw.Industriezweige; DE; GE; 5; 397.</div><div class="h" style="left:4px;top:522px;">Reaction Details 3 of 4</div><div class="a" style="left:4px;top:538px;width:152px;height:2px;background:#000;"></div><div class="home" style="left:170px;top:522px;">Home</div><div class="a" style="left:4px;top:547px;width:1001px;height:1px;background:#000;"></div><div class="a" style="left:4px;top:592px;width:1001px;height:1px;background:#000;"></div><div class="a" style="left:4px;top:547px;width:1px;height:76px;background:#000;"></div><div class="a" style="left:1004px;top:547px;width:1px;height:76px;background:#000;"></div><div class="a" style="left:4px;top:622px;width:1001px;height:1px;background:#000;"></div><div class="se" style="left:7px;top:555px;">Reaction Classification</div><div class="se" style="left:150px;top:555px;">Preparation</div><div class="se" style="left:7px;top:570px;">Reagent</div><div class="se" style="left:150px;top:570px;">diluted nitric acid</div><div class="se" style="left:7px;top:600px;">Ref. 1</div><div class="se" style="left:67px;top:600px;"><span style="font-style:italic;text-decoration:underline;color:#008200">1010148</span>,<span style="text-decoration:underline;color:#0a3a8c"> </span><span style="font-style:italic;text-decoration:underline;color:#0a3a8c">LitLink</span></div><div class="se" style="left:168px;top:600px;">; Patent; BASF; DE 107719; FTFVA6; Fortschr.Teerfarbenfabr.Verw.Industriezweige; DE; GE; 5; 397.</div><div class="h" style="left:4px;top:631px;">Reaction Details 4 of 4</div><div class="a" style="left:4px;top:647px;width:152px;height:2px;background:#000;"></div><div class="home" style="left:170px;top:631px;">Home</div><div class="a" style="left:4px;top:656px;width:1001px;height:1px;background:#000;"></div><div class="a" style="left:4px;top:716px;width:1001px;height:1px;background:#000;"></div><div class="a" style="left:4px;top:656px;width:1px;height:91px;background:#000;"></div><div class="a" style="left:1004px;top:656px;width:1px;height:91px;background:#000;"></div><div class="se" style="left:7px;top:664px;">Reaction Classification</div><div class="se" style="left:150px;top:664px;">Preparation</div><div class="se" style="left:7px;top:679px;">Reagent</div><div class="se" style="left:150px;top:679px;">copper sulfate</div><div class="se" style="left:150px;top:694px;">alkali</div><div class="se" style="left:7px;top:724px;">Ref. 1</div><div class="se" style="left:67px;top:724px;"><span style="font-style:italic;text-decoration:underline;color:#008200">1010148</span>,<span style="text-decoration:underline;color:#0a3a8c"> </span><span style="font-style:italic;text-decoration:underline;color:#0a3a8c">LitLink</span></div><div class="se" style="left:168px;top:724px;">; Patent; BASF; DE 107719; FTFVA6; Fortschr.Teerfarbenfabr.Verw.Industriezweige; DE; GE; 5; 397.</div></div><div class="a" style="left:1006px;top:70px;width:16px;height:650px;background:#fff;background-image:repeating-conic-gradient(#c6c3c6 0 25%,#fff 0 50%);background-size:2px 2px"></div><div class="rb" style="left:1006px;top:70px;width:16px;height:16px;box-shadow:inset -1px -1px #000,inset 1px 1px #c6c3c6,inset -2px -2px #848284,inset 2px 2px #fff"></div><svg style="left:1006px;top:70px;" width="16" height="16" viewBox="0 0 16 16" shape-rendering="crispEdges"><rect x="7" y="6" width="1" height="1" fill="#000"/><rect x="6" y="7" width="3" height="1" fill="#000"/><rect x="5" y="8" width="5" height="1" fill="#000"/><rect x="4" y="9" width="7" height="1" fill="#000"/></svg><div class="rb" style="left:1006px;top:86px;width:16px;height:16px;box-shadow:inset -1px -1px #000,inset 1px 1px #c6c3c6,inset -2px -2px #848284,inset 2px 2px #fff"></div><div class="rb" style="left:1006px;top:704px;width:16px;height:16px;box-shadow:inset -1px -1px #000,inset 1px 1px #c6c3c6,inset -2px -2px #848284,inset 2px 2px #fff"></div><svg style="left:1006px;top:704px;" width="16" height="16" viewBox="0 0 16 16" shape-rendering="crispEdges"><rect x="4" y="6" width="7" height="1" fill="#000"/><rect x="5" y="7" width="5" height="1" fill="#000"/><rect x="6" y="8" width="3" height="1" fill="#000"/><rect x="7" y="9" width="1" height="1" fill="#000"/></svg><div class="a" style="left:540px;top:106px;width:461px;height:246px;background:#c6c3c6;box-shadow:inset 1px 1px #c6c3c6,inset 2px 2px #fff,inset -1px -1px #000,inset -2px -2px #848284"></div><div class="a" style="left:544px;top:110px;width:453px;height:18px;background:#848284;"></div><svg style="left:546px;top:113px;" width="16" height="11" viewBox="0 0 16 11" shape-rendering="crispEdges"><rect x="8" y="0" width="6" height="1" fill="#000"/><rect x="0" y="1" width="1" height="1" fill="#000"/><rect x="3" y="1" width="1" height="1" fill="#000"/><rect x="6" y="1" width="1" height="1" fill="#000"/><rect x="8" y="1" width="7" height="1" fill="#000"/><rect x="1" y="2" width="1" height="1" fill="#000"/><rect x="4" y="2" width="1" height="1" fill="#000"/><rect x="7" y="2" width="2" height="1" fill="#000"/><rect x="9" y="2" width="2" height="1" fill="#ff0000"/><rect x="11" y="2" width="1" height="1" fill="#000"/><rect x="12" y="2" width="2" height="1" fill="#00ff00"/><rect x="14" y="2" width="1" height="1" fill="#000"/><rect x="0" y="3" width="2" height="1" fill="#ff0000"/><rect x="2" y="3" width="1" height="1" fill="#000"/><rect x="4" y="3" width="2" height="1" fill="#ff0000"/><rect x="6" y="3" width="2" height="1" fill="#000"/><rect x="8" y="3" width="3" height="1" fill="#ff0000"/><rect x="11" y="3" width="1" height="1" fill="#000"/><rect x="12" y="3" width="3" height="1" fill="#00ff00"/><rect x="15" y="3" width="1" height="1" fill="#000"/><rect x="2" y="4" width="1" height="1" fill="#000"/><rect x="6" y="4" width="2" height="1" fill="#000"/><rect x="8" y="4" width="2" height="1" fill="#ff0000"/><rect x="10" y="4" width="2" height="1" fill="#000"/><rect x="12" y="4" width="2" height="1" fill="#00ff00"/><rect x="14" y="4" width="1" height="1" fill="#000"/><rect x="0" y="5" width="1" height="1" fill="#000"/><rect x="3" y="5" width="1" height="1" fill="#000"/><rect x="6" y="5" width="9" height="1" fill="#000"/><rect x="1" y="6" width="1" height="1" fill="#000"/><rect x="4" y="6" width="1" height="1" fill="#000"/><rect x="7" y="6" width="1" height="1" fill="#000"/><rect x="8" y="6" width="2" height="1" fill="#0000ff"/><rect x="10" y="6" width="2" height="1" fill="#000"/><rect x="12" y="6" width="2" height="1" fill="#ffff00"/><rect x="14" y="6" width="1" height="1" fill="#000"/><rect x="0" y="7" width="2" height="1" fill="#0000ff"/><rect x="2" y="7" width="1" height="1" fill="#000"/><rect x="4" y="7" width="2" height="1" fill="#0000ff"/><rect x="6" y="7" width="2" height="1" fill="#000"/><rect x="8" y="7" width="3" height="1" fill="#0000ff"/><rect x="11" y="7" width="1" height="1" fill="#000"/><rect x="12" y="7" width="3" height="1" fill="#ffff00"/><rect x="15" y="7" width="1" height="1" fill="#000"/><rect x="2" y="8" width="1" height="1" fill="#000"/><rect x="6" y="8" width="2" height="1" fill="#000"/><rect x="8" y="8" width="2" height="1" fill="#0000ff"/><rect x="10" y="8" width="3" height="1" fill="#000"/><rect x="13" y="8" width="1" height="1" fill="#ffff00"/><rect x="14" y="8" width="1" height="1" fill="#000"/><rect x="0" y="9" width="1" height="1" fill="#000"/><rect x="3" y="9" width="1" height="1" fill="#000"/><rect x="6" y="9" width="10" height="1" fill="#000"/><rect x="1" y="10" width="1" height="1" fill="#000"/><rect x="4" y="10" width="1" height="1" fill="#000"/><rect x="7" y="10" width="1" height="1" fill="#000"/><rect x="14" y="10" width="2" height="1" fill="#000"/></svg><div class="ss" style="left:565px;top:112px;color:#c6c3c6;font-weight:bold;font-size:12px;line-height:14px;letter-spacing:0.25px">Q01: Hit&nbsp; 3</div><div class="rb" style="left:945px;top:112px;width:16px;height:14px;"></div><div class="rb" style="left:961px;top:112px;width:16px;height:14px;"></div><div class="rb" style="left:979px;top:112px;width:16px;height:14px;"></div><svg style="left:945px;top:112px;" width="16" height="14" viewBox="0 0 16 14" shape-rendering="crispEdges"><rect x="5" y="9" width="6" height="2" fill="#fff"/><rect x="4" y="8" width="6" height="2" fill="#848284"/></svg><svg style="left:961px;top:112px;" width="16" height="14" viewBox="0 0 16 14" shape-rendering="crispEdges"><rect x="3" y="2" width="9" height="2" fill="#000"/><rect x="3" y="2" width="1" height="9" fill="#000"/><rect x="11" y="2" width="1" height="9" fill="#000"/><rect x="3" y="10" width="9" height="1" fill="#000"/></svg><svg style="left:979px;top:112px;" width="16" height="14" viewBox="0 0 16 14" shape-rendering="crispEdges"><rect x="4" y="3" width="2" height="1" fill="#000"/><rect x="10" y="3" width="2" height="1" fill="#000"/><rect x="5" y="4" width="2" height="1" fill="#000"/><rect x="9" y="4" width="2" height="1" fill="#000"/><rect x="6" y="5" width="2" height="1" fill="#000"/><rect x="8" y="5" width="2" height="1" fill="#000"/><rect x="7" y="6" width="2" height="1" fill="#000"/><rect x="7" y="6" width="2" height="1" fill="#000"/><rect x="8" y="7" width="2" height="1" fill="#000"/><rect x="6" y="7" width="2" height="1" fill="#000"/><rect x="9" y="8" width="2" height="1" fill="#000"/><rect x="5" y="8" width="2" height="1" fill="#000"/><rect x="10" y="9" width="2" height="1" fill="#000"/><rect x="4" y="9" width="2" height="1" fill="#000"/></svg><div class="a" style="left:544px;top:129px;width:453px;height:219px;background:#fff;"></div><svg style="left:0;top:0" width="1024" height="768" viewBox="0 0 1024 768" shape-rendering="crispEdges"><g stroke="#000" stroke-width="1" fill="none"><path d="M600 135.5 H721" stroke-dasharray="3 3"/><path d="M720.5 135 V332" stroke-dasharray="3 3"/><path d="M721 331.5 H600" stroke-dasharray="3 3"/><path d="M600.5 332 V135" stroke-dasharray="3 3"/><path d="M779 177.5 H941" stroke-dasharray="3 3"/><path d="M940.5 177 V289" stroke-dasharray="3 3"/><path d="M941 288.5 H779" stroke-dasharray="3 3"/><path d="M779.5 289 V177" stroke-dasharray="3 3"/><line x1="640" y1="169" x2="656" y2="151"/><line x1="612" y1="160" x2="640" y2="167"/><line x1="611" y1="164" x2="639" y2="171"/><line x1="640" y1="169" x2="653" y2="209"/><line x1="653" y1="209" x2="688" y2="220"/><line x1="657" y1="215" x2="683" y2="223"/><line x1="688" y1="220" x2="707" y2="205"/><line x1="653" y1="209" x2="637" y2="231"/><line x1="636" y1="242" x2="653.5" y2="266"/><line x1="653.5" y1="266" x2="688" y2="256"/><line x1="688" y1="220" x2="688" y2="256"/><line x1="688" y1="256" x2="713.5" y2="280"/><line x1="688" y1="261" x2="706.5" y2="278.5"/><line x1="713.5" y1="280" x2="706" y2="314"/><line x1="706" y1="314" x2="673" y2="326"/><line x1="675" y1="321" x2="702" y2="312"/><line x1="673" y1="326" x2="646" y2="302"/><line x1="646" y1="302" x2="653.5" y2="266"/><line x1="656.5" y1="271" x2="650.5" y2="299"/></g><g fill="#000"><rect x="724" y="232" width="32" height="3"/><polygon points="755,230 761,233.5 755,237"/></g><g stroke="#000" stroke-width="1" fill="none"><line x1="817" y1="210" x2="785.5" y2="228"/><line x1="785.5" y1="228" x2="785.5" y2="265"/><line x1="785.5" y1="265" x2="818.5" y2="283"/><line x1="818.5" y1="283" x2="849" y2="264.5"/><line x1="849" y1="264.5" x2="848.5" y2="227"/><line x1="848.5" y1="227" x2="817" y2="210"/><line x1="819.5" y1="215" x2="844" y2="229"/><line x1="789.5" y1="231" x2="789.5" y2="260"/><line x1="821" y1="277" x2="844" y2="264"/><line x1="848.5" y1="227" x2="883" y2="215.5"/><line x1="883" y1="215.5" x2="889" y2="194"/><line x1="887" y1="216" x2="893" y2="195"/><line x1="883" y1="215.5" x2="905" y2="245"/><line x1="905" y1="243" x2="925" y2="243"/><line x1="905" y1="247" x2="925" y2="247"/><line x1="849" y1="264.5" x2="880" y2="273"/><line x1="889" y1="270" x2="905" y2="245"/></g></svg><svg style="left:657px;top:140px;" width="7" height="8" viewBox="0 0 7 8" shape-rendering="crispEdges"><rect x="2" y="0" width="3" height="1" fill="#000"/><rect x="1" y="1" width="1" height="1" fill="#000"/><rect x="5" y="1" width="1" height="1" fill="#000"/><rect x="0" y="2" width="1" height="1" fill="#000"/><rect x="6" y="2" width="1" height="1" fill="#000"/><rect x="0" y="3" width="1" height="1" fill="#000"/><rect x="6" y="3" width="1" height="1" fill="#000"/><rect x="0" y="4" width="1" height="1" fill="#000"/><rect x="6" y="4" width="1" height="1" fill="#000"/><rect x="0" y="5" width="1" height="1" fill="#000"/><rect x="6" y="5" width="1" height="1" fill="#000"/><rect x="1" y="6" width="1" height="1" fill="#000"/><rect x="5" y="6" width="1" height="1" fill="#000"/><rect x="2" y="7" width="3" height="1" fill="#000"/></svg><svg style="left:604px;top:157px;" width="7" height="8" viewBox="0 0 7 8" shape-rendering="crispEdges"><rect x="2" y="0" width="3" height="1" fill="#000"/><rect x="1" y="1" width="1" height="1" fill="#000"/><rect x="5" y="1" width="1" height="1" fill="#000"/><rect x="0" y="2" width="1" height="1" fill="#000"/><rect x="6" y="2" width="1" height="1" fill="#000"/><rect x="0" y="3" width="1" height="1" fill="#000"/><rect x="6" y="3" width="1" height="1" fill="#000"/><rect x="0" y="4" width="1" height="1" fill="#000"/><rect x="6" y="4" width="1" height="1" fill="#000"/><rect x="0" y="5" width="1" height="1" fill="#000"/><rect x="6" y="5" width="1" height="1" fill="#000"/><rect x="1" y="6" width="1" height="1" fill="#000"/><rect x="5" y="6" width="1" height="1" fill="#000"/><rect x="2" y="7" width="3" height="1" fill="#000"/></svg><svg style="left:709px;top:197px;" width="7" height="8" viewBox="0 0 7 8" shape-rendering="crispEdges"><rect x="2" y="0" width="3" height="1" fill="#000"/><rect x="1" y="1" width="1" height="1" fill="#000"/><rect x="5" y="1" width="1" height="1" fill="#000"/><rect x="0" y="2" width="1" height="1" fill="#000"/><rect x="6" y="2" width="1" height="1" fill="#000"/><rect x="0" y="3" width="1" height="1" fill="#000"/><rect x="6" y="3" width="1" height="1" fill="#000"/><rect x="0" y="4" width="1" height="1" fill="#000"/><rect x="6" y="4" width="1" height="1" fill="#000"/><rect x="0" y="5" width="1" height="1" fill="#000"/><rect x="6" y="5" width="1" height="1" fill="#000"/><rect x="1" y="6" width="1" height="1" fill="#000"/><rect x="5" y="6" width="1" height="1" fill="#000"/><rect x="2" y="7" width="3" height="1" fill="#000"/></svg><svg style="left:629px;top:233px;" width="7" height="8" viewBox="0 0 7 8" shape-rendering="crispEdges"><rect x="0" y="0" width="1" height="1" fill="#000"/><rect x="5" y="0" width="1" height="1" fill="#000"/><rect x="0" y="1" width="2" height="1" fill="#000"/><rect x="5" y="1" width="1" height="1" fill="#000"/><rect x="0" y="2" width="2" height="1" fill="#000"/><rect x="5" y="2" width="1" height="1" fill="#000"/><rect x="0" y="3" width="1" height="1" fill="#000"/><rect x="2" y="3" width="1" height="1" fill="#000"/><rect x="5" y="3" width="1" height="1" fill="#000"/><rect x="0" y="4" width="1" height="1" fill="#000"/><rect x="3" y="4" width="1" height="1" fill="#000"/><rect x="5" y="4" width="1" height="1" fill="#000"/><rect x="0" y="5" width="1" height="1" fill="#000"/><rect x="4" y="5" width="2" height="1" fill="#000"/><rect x="0" y="6" width="1" height="1" fill="#000"/><rect x="4" y="6" width="2" height="1" fill="#000"/><rect x="0" y="7" width="1" height="1" fill="#000"/><rect x="5" y="7" width="1" height="1" fill="#000"/></svg><svg style="left:888px;top:182px;" width="7" height="8" viewBox="0 0 7 8" shape-rendering="crispEdges"><rect x="2" y="0" width="3" height="1" fill="#000"/><rect x="1" y="1" width="1" height="1" fill="#000"/><rect x="5" y="1" width="1" height="1" fill="#000"/><rect x="0" y="2" width="1" height="1" fill="#000"/><rect x="6" y="2" width="1" height="1" fill="#000"/><rect x="0" y="3" width="1" height="1" fill="#000"/><rect x="6" y="3" width="1" height="1" fill="#000"/><rect x="0" y="4" width="1" height="1" fill="#000"/><rect x="6" y="4" width="1" height="1" fill="#000"/><rect x="0" y="5" width="1" height="1" fill="#000"/><rect x="6" y="5" width="1" height="1" fill="#000"/><rect x="1" y="6" width="1" height="1" fill="#000"/><rect x="5" y="6" width="1" height="1" fill="#000"/><rect x="2" y="7" width="3" height="1" fill="#000"/></svg><svg style="left:928px;top:240px;" width="7" height="8" viewBox="0 0 7 8" shape-rendering="crispEdges"><rect x="2" y="0" width="3" height="1" fill="#000"/><rect x="1" y="1" width="1" height="1" fill="#000"/><rect x="5" y="1" width="1" height="1" fill="#000"/><rect x="0" y="2" width="1" height="1" fill="#000"/><rect x="6" y="2" width="1" height="1" fill="#000"/><rect x="0" y="3" width="1" height="1" fill="#000"/><rect x="6" y="3" width="1" height="1" fill="#000"/><rect x="0" y="4" width="1" height="1" fill="#000"/><rect x="6" y="4" width="1" height="1" fill="#000"/><rect x="0" y="5" width="1" height="1" fill="#000"/><rect x="6" y="5" width="1" height="1" fill="#000"/><rect x="1" y="6" width="1" height="1" fill="#000"/><rect x="5" y="6" width="1" height="1" fill="#000"/><rect x="2" y="7" width="3" height="1" fill="#000"/></svg><svg style="left:882px;top:270px;" width="7" height="8" viewBox="0 0 7 8" shape-rendering="crispEdges"><rect x="0" y="0" width="1" height="1" fill="#000"/><rect x="5" y="0" width="1" height="1" fill="#000"/><rect x="0" y="1" width="2" height="1" fill="#000"/><rect x="5" y="1" width="1" height="1" fill="#000"/><rect x="0" y="2" width="2" height="1" fill="#000"/><rect x="5" y="2" width="1" height="1" fill="#000"/><rect x="0" y="3" width="1" height="1" fill="#000"/><rect x="2" y="3" width="1" height="1" fill="#000"/><rect x="5" y="3" width="1" height="1" fill="#000"/><rect x="0" y="4" width="1" height="1" fill="#000"/><rect x="3" y="4" width="1" height="1" fill="#000"/><rect x="5" y="4" width="1" height="1" fill="#000"/><rect x="0" y="5" width="1" height="1" fill="#000"/><rect x="4" y="5" width="2" height="1" fill="#000"/><rect x="0" y="6" width="1" height="1" fill="#000"/><rect x="4" y="6" width="2" height="1" fill="#000"/><rect x="0" y="7" width="1" height="1" fill="#000"/><rect x="5" y="7" width="1" height="1" fill="#000"/></svg><div class="ss" style="left:603px;top:333px;font-size:8.5px;line-height:10px;letter-spacing:-0.25px;-webkit-text-stroke:0.2px #000">Reactant 1</div><div class="ss" style="left:782px;top:290px;font-size:8.5px;line-height:10px;letter-spacing:-0.25px;-webkit-text-stroke:0.2px #000">Product 1</div><div class="a" style="left:0px;top:724px;width:490px;height:16px;box-shadow:inset 1px 1px #848284,inset -1px -1px #fff"></div><div class="ss t9" style="left:3px;top:726px;font-size:11px;letter-spacing:-0.35px">For Help, press F1</div><div class="a" style="left:492px;top:724px;width:210px;height:16px;box-shadow:inset 1px 1px #848284,inset -1px -1px #fff"></div><div class="ss t9" style="left:495px;top:726px;">idle</div><div class="a" style="left:704px;top:724px;width:210px;height:16px;box-shadow:inset 1px 1px #848284,inset -1px -1px #fff"></div><div class="ss t9" style="left:707px;top:726px;">ALL</div><div class="a" style="left:916px;top:724px;width:108px;height:16px;box-shadow:inset 1px 1px #848284,inset -1px -1px #fff"></div><div class="ss t9" style="left:919px;top:726px;">Reaction</div><div class="a" style="left:0px;top:740px;width:1024px;height:1px;background:#c6c3c6;"></div><div class="a" style="left:0px;top:741px;width:1024px;height:1px;background:#fff;"></div><div class="rb" style="left:2px;top:744px;width:54px;height:22px;"></div><svg style="left:4px;top:748px;" width="17" height="14" viewBox="0 0 17 14" shape-rendering="crispEdges"><rect x="10" y="0" width="4" height="1" fill="#000"/><rect x="8" y="1" width="8" height="1" fill="#000"/><rect x="1" y="2" width="1" height="1" fill="#000"/><rect x="7" y="2" width="2" height="1" fill="#000"/><rect x="9" y="2" width="2" height="1" fill="#ff0000"/><rect x="11" y="2" width="2" height="1" fill="#000"/><rect x="13" y="2" width="2" height="1" fill="#00ff00"/><rect x="15" y="2" width="2" height="1" fill="#000"/><rect x="1" y="3" width="1" height="1" fill="#000"/><rect x="4" y="3" width="4" height="1" fill="#000"/><rect x="8" y="3" width="3" height="1" fill="#ff0000"/><rect x="11" y="3" width="2" height="1" fill="#000"/><rect x="13" y="3" width="3" height="1" fill="#00ff00"/><rect x="16" y="3" width="1" height="1" fill="#000"/><rect x="4" y="4" width="4" height="1" fill="#000"/><rect x="8" y="4" width="2" height="1" fill="#ff0000"/><rect x="10" y="4" width="3" height="1" fill="#000"/><rect x="13" y="4" width="3" height="1" fill="#00ff00"/><rect x="16" y="4" width="1" height="1" fill="#000"/><rect x="1" y="5" width="1" height="1" fill="#ff0000"/><rect x="4" y="5" width="3" height="1" fill="#ff0000"/><rect x="7" y="5" width="1" height="1" fill="#000"/><rect x="8" y="5" width="2" height="1" fill="#ff0000"/><rect x="10" y="5" width="4" height="1" fill="#000"/><rect x="14" y="5" width="2" height="1" fill="#00ff00"/><rect x="16" y="5" width="1" height="1" fill="#000"/><rect x="1" y="6" width="1" height="1" fill="#ff0000"/><rect x="4" y="6" width="3" height="1" fill="#ff0000"/><rect x="7" y="6" width="10" height="1" fill="#000"/><rect x="4" y="7" width="3" height="1" fill="#ff0000"/><rect x="7" y="7" width="1" height="1" fill="#000"/><rect x="8" y="7" width="2" height="1" fill="#0000ff"/><rect x="10" y="7" width="3" height="1" fill="#000"/><rect x="13" y="7" width="2" height="1" fill="#ffff00"/><rect x="15" y="7" width="2" height="1" fill="#000"/><rect x="1" y="8" width="1" height="1" fill="#0000ff"/><rect x="4" y="8" width="3" height="1" fill="#0000ff"/><rect x="7" y="8" width="1" height="1" fill="#000"/><rect x="8" y="8" width="3" height="1" fill="#0000ff"/><rect x="11" y="8" width="2" height="1" fill="#000"/><rect x="13" y="8" width="3" height="1" fill="#ffff00"/><rect x="16" y="8" width="1" height="1" fill="#000"/><rect x="1" y="9" width="1" height="1" fill="#0000ff"/><rect x="4" y="9" width="3" height="1" fill="#0000ff"/><rect x="7" y="9" width="1" height="1" fill="#000"/><rect x="8" y="9" width="2" height="1" fill="#0000ff"/><rect x="10" y="9" width="3" height="1" fill="#000"/><rect x="13" y="9" width="3" height="1" fill="#ffff00"/><rect x="16" y="9" width="1" height="1" fill="#000"/><rect x="4" y="10" width="3" height="1" fill="#0000ff"/><rect x="7" y="10" width="1" height="1" fill="#000"/><rect x="8" y="10" width="1" height="1" fill="#0000ff"/><rect x="9" y="10" width="5" height="1" fill="#000"/><rect x="14" y="10" width="2" height="1" fill="#ffff00"/><rect x="16" y="10" width="1" height="1" fill="#000"/><rect x="1" y="11" width="1" height="1" fill="#000"/><rect x="4" y="11" width="13" height="1" fill="#000"/><rect x="1" y="12" width="1" height="1" fill="#000"/><rect x="4" y="12" width="5" height="1" fill="#000"/><rect x="14" y="12" width="3" height="1" fill="#000"/><rect x="8" y="13" width="1" height="1" fill="#000"/><rect x="16" y="13" width="1" height="1" fill="#000"/></svg><div class="ss" style="left:24px;top:748px;font-weight:bold;font-size:12px;line-height:14px;letter-spacing:0.1px">Start</div><div class="rb" style="left:60px;top:744px;width:93px;height:22px;"></div><div class="ss t9" style="left:82px;top:749px;font-size:11px;letter-spacing:-0.2px">Inbox - Micr...</div><div class="rb" style="left:156px;top:744px;width:93px;height:22px;"></div><div class="ss t9" style="left:178px;top:749px;font-size:11px;letter-spacing:-0.2px">1 - VERI (ve...</div><div class="rb" style="left:252px;top:744px;width:93px;height:22px;"></div><div class="ss t9" style="left:274px;top:749px;font-size:11px;letter-spacing:-0.2px">Searching fo...</div><div class="rb" style="left:348px;top:744px;width:93px;height:22px;"></div><div class="ss t9" style="left:370px;top:749px;font-size:11px;letter-spacing:-0.2px">Beilstein Co...</div><div class="a" style="left:444px;top:744px;width:93px;height:22px;background-color:#fff;background-image:repeating-conic-gradient(#c6c3c6 0 25%,#fff 0 50%);background-size:2px 2px;box-shadow:inset 1px 1px #000,inset -1px -1px #fff,inset 2px 2px #848284,inset -2px -2px #c6c3c6"></div><div class="ss" style="left:467px;top:750px;font-weight:bold;font-size:12px;line-height:14px">Display H...</div><div class="rb" style="left:540px;top:744px;width:93px;height:22px;"></div><div class="ss t9" style="left:562px;top:749px;font-size:11px;letter-spacing:-0.2px">Structure Ed...</div><div class="rb" style="left:636px;top:744px;width:93px;height:22px;"></div><div class="ss t9" style="left:658px;top:749px;font-size:11px;letter-spacing:-0.2px">FullShot 6.0 ...</div><div class="rb" style="left:732px;top:744px;width:93px;height:22px;"></div><div class="ss t9" style="left:754px;top:749px;font-size:11px;letter-spacing:-0.2px">FTP - (Untitl...</div><svg style="left:64px;top:747px;" width="16" height="16" viewBox="0 0 16 16" shape-rendering="crispEdges"><rect x="0" y="0" width="16" height="1" fill="#808000"/><rect x="0" y="1" width="16" height="1" fill="#808000"/><rect x="0" y="2" width="2" height="1" fill="#808000"/><rect x="2" y="2" width="4" height="1" fill="#fff"/><rect x="6" y="2" width="5" height="1" fill="#808000"/><rect x="11" y="2" width="3" height="1" fill="#fff"/><rect x="14" y="2" width="2" height="1" fill="#808000"/><rect x="0" y="3" width="2" height="1" fill="#808000"/><rect x="2" y="3" width="3" height="1" fill="#fff"/><rect x="5" y="3" width="7" height="1" fill="#808000"/><rect x="12" y="3" width="2" height="1" fill="#fff"/><rect x="14" y="3" width="2" height="1" fill="#808000"/><rect x="0" y="4" width="2" height="1" fill="#808000"/><rect x="2" y="4" width="2" height="1" fill="#fff"/><rect x="4" y="4" width="2" height="1" fill="#808000"/><rect x="6" y="4" width="5" height="1" fill="#fff"/><rect x="11" y="4" width="2" height="1" fill="#808000"/><rect x="13" y="4" width="1" height="1" fill="#fff"/><rect x="14" y="4" width="2" height="1" fill="#808000"/><rect x="0" y="5" width="2" height="1" fill="#808000"/><rect x="2" y="5" width="1" height="1" fill="#fff"/><rect x="3" y="5" width="2" height="1" fill="#808000"/><rect x="5" y="5" width="1" height="1" fill="#fff"/><rect x="6" y="5" width="2" height="1" fill="#808000"/><rect x="8" y="5" width="4" height="1" fill="#fff"/><rect x="12" y="5" width="4" height="1" fill="#808000"/><rect x="0" y="6" width="4" height="1" fill="#808000"/><rect x="4" y="6" width="2" height="1" fill="#fff"/><rect x="6" y="6" width="2" height="1" fill="#808000"/><rect x="8" y="6" width="5" height="1" fill="#fff"/><rect x="13" y="6" width="3" height="1" fill="#808000"/><rect x="0" y="7" width="4" height="1" fill="#808000"/><rect x="4" y="7" width="2" height="1" fill="#fff"/><rect x="6" y="7" width="2" height="1" fill="#808000"/><rect x="8" y="7" width="5" height="1" fill="#fff"/><rect x="13" y="7" width="3" height="1" fill="#808000"/><rect x="0" y="8" width="4" height="1" fill="#808000"/><rect x="4" y="8" width="2" height="1" fill="#fff"/><rect x="6" y="8" width="5" height="1" fill="#808000"/><rect x="11" y="8" width="2" height="1" fill="#fff"/><rect x="13" y="8" width="3" height="1" fill="#808000"/><rect x="0" y="9" width="4" height="1" fill="#808000"/><rect x="4" y="9" width="9" height="1" fill="#fff"/><rect x="13" y="9" width="3" height="1" fill="#808000"/><rect x="0" y="10" width="2" height="1" fill="#808000"/><rect x="2" y="10" width="1" height="1" fill="#fff"/><rect x="3" y="10" width="2" height="1" fill="#808000"/><rect x="5" y="10" width="7" height="1" fill="#fff"/><rect x="12" y="10" width="4" height="1" fill="#808000"/><rect x="0" y="11" width="2" height="1" fill="#808000"/><rect x="2" y="11" width="2" height="1" fill="#fff"/><rect x="4" y="11" width="2" height="1" fill="#808000"/><rect x="6" y="11" width="5" height="1" fill="#fff"/><rect x="11" y="11" width="2" height="1" fill="#808000"/><rect x="13" y="11" width="1" height="1" fill="#fff"/><rect x="14" y="11" width="2" height="1" fill="#808000"/><rect x="0" y="12" width="2" height="1" fill="#808000"/><rect x="2" y="12" width="3" height="1" fill="#fff"/><rect x="5" y="12" width="7" height="1" fill="#808000"/><rect x="12" y="12" width="2" height="1" fill="#fff"/><rect x="14" y="12" width="2" height="1" fill="#808000"/><rect x="0" y="13" width="2" height="1" fill="#808000"/><rect x="2" y="13" width="4" height="1" fill="#fff"/><rect x="6" y="13" width="5" height="1" fill="#808000"/><rect x="11" y="13" width="3" height="1" fill="#fff"/><rect x="14" y="13" width="2" height="1" fill="#808000"/><rect x="0" y="14" width="16" height="1" fill="#808000"/><rect x="0" y="15" width="16" height="1" fill="#808000"/></svg><svg style="left:160px;top:747px;" width="16" height="16" viewBox="0 0 16 16" shape-rendering="crispEdges"><rect x="3" y="1" width="3" height="1" fill="#848284"/><rect x="2" y="2" width="1" height="1" fill="#f08080"/><rect x="3" y="2" width="2" height="1" fill="#008080"/><rect x="5" y="2" width="2" height="1" fill="#fff"/><rect x="7" y="2" width="4" height="1" fill="#848284"/><rect x="2" y="3" width="1" height="1" fill="#848284"/><rect x="3" y="3" width="4" height="1" fill="#008080"/><rect x="7" y="3" width="2" height="1" fill="#fff"/><rect x="9" y="3" width="1" height="1" fill="#848284"/><rect x="10" y="3" width="1" height="1" fill="#fff"/><rect x="11" y="3" width="1" height="1" fill="#848284"/><rect x="12" y="3" width="1" height="1" fill="#000"/><rect x="2" y="4" width="1" height="1" fill="#848284"/><rect x="3" y="4" width="2" height="1" fill="#008080"/><rect x="5" y="4" width="1" height="1" fill="#008000"/><rect x="6" y="4" width="3" height="1" fill="#008080"/><rect x="9" y="4" width="1" height="1" fill="#fff"/><rect x="10" y="4" width="2" height="1" fill="#000"/><rect x="12" y="4" width="1" height="1" fill="#848284"/><rect x="13" y="4" width="1" height="1" fill="#000"/><rect x="2" y="5" width="1" height="1" fill="#848284"/><rect x="3" y="5" width="1" height="1" fill="#008080"/><rect x="4" y="5" width="3" height="1" fill="#008000"/><rect x="7" y="5" width="3" height="1" fill="#008080"/><rect x="10" y="5" width="2" height="1" fill="#ffff00"/><rect x="12" y="5" width="2" height="1" fill="#000"/><rect x="2" y="6" width="1" height="1" fill="#848284"/><rect x="3" y="6" width="1" height="1" fill="#008080"/><rect x="4" y="6" width="3" height="1" fill="#008000"/><rect x="7" y="6" width="2" height="1" fill="#008080"/><rect x="9" y="6" width="1" height="1" fill="#ffff00"/><rect x="10" y="6" width="2" height="1" fill="#000"/><rect x="12" y="6" width="1" height="1" fill="#ffff00"/><rect x="13" y="6" width="1" height="1" fill="#000"/><rect x="2" y="7" width="1" height="1" fill="#848284"/><rect x="3" y="7" width="2" height="1" fill="#008080"/><rect x="5" y="7" width="2" height="1" fill="#008000"/><rect x="7" y="7" width="1" height="1" fill="#008080"/><rect x="8" y="7" width="1" height="1" fill="#ffff00"/><rect x="9" y="7" width="1" height="1" fill="#008080"/><rect x="10" y="7" width="2" height="1" fill="#00ffff"/><rect x="12" y="7" width="1" height="1" fill="#008080"/><rect x="13" y="7" width="1" height="1" fill="#ffff00"/><rect x="2" y="8" width="1" height="1" fill="#000"/><rect x="3" y="8" width="1" height="1" fill="#fff"/><rect x="4" y="8" width="4" height="1" fill="#008000"/><rect x="8" y="8" width="1" height="1" fill="#ffff00"/><rect x="9" y="8" width="1" height="1" fill="#00ffff"/><rect x="10" y="8" width="1" height="1" fill="#008080"/><rect x="11" y="8" width="1" height="1" fill="#00ffff"/><rect x="12" y="8" width="1" height="1" fill="#008080"/><rect x="13" y="8" width="1" height="1" fill="#ffff00"/><rect x="3" y="9" width="2" height="1" fill="#000"/><rect x="5" y="9" width="1" height="1" fill="#fff"/><rect x="6" y="9" width="2" height="1" fill="#008000"/><rect x="8" y="9" width="1" height="1" fill="#ffff00"/><rect x="9" y="9" width="1" height="1" fill="#008080"/><rect x="10" y="9" width="2" height="1" fill="#00ffff"/><rect x="12" y="9" width="1" height="1" fill="#008080"/><rect x="13" y="9" width="1" height="1" fill="#ffff00"/><rect x="3" y="10" width="2" height="1" fill="#fff"/><rect x="5" y="10" width="2" height="1" fill="#000"/><rect x="7" y="10" width="1" height="1" fill="#fff"/><rect x="8" y="10" width="1" height="1" fill="#ffff00"/><rect x="9" y="10" width="1" height="1" fill="#008080"/><rect x="10" y="10" width="1" height="1" fill="#00ffff"/><rect x="11" y="10" width="1" height="1" fill="#008080"/><rect x="12" y="10" width="1" height="1" fill="#ffff00"/><rect x="4" y="11" width="2" height="1" fill="#000"/><rect x="6" y="11" width="2" height="1" fill="#fff"/><rect x="8" y="11" width="1" height="1" fill="#000"/><rect x="9" y="11" width="4" height="1" fill="#ffff00"/><rect x="5" y="12" width="2" height="1" fill="#000"/><rect x="7" y="12" width="3" height="1" fill="#fff"/><rect x="12" y="12" width="2" height="1" fill="#000"/><rect x="6" y="13" width="2" height="1" fill="#000"/></svg><svg style="left:256px;top:747px;" width="16" height="16" viewBox="0 0 16 16" shape-rendering="crispEdges"><rect x="0" y="0" width="5" height="1" fill="#0000ff"/><rect x="5" y="0" width="1" height="1" fill="#000"/><rect x="6" y="0" width="8" height="1" fill="#0000ff"/><rect x="14" y="0" width="2" height="1" fill="#000"/><rect x="0" y="1" width="1" height="1" fill="#0000ff"/><rect x="1" y="1" width="1" height="1" fill="#ffff00"/><rect x="2" y="1" width="1" height="1" fill="#000"/><rect x="3" y="1" width="2" height="1" fill="#0000ff"/><rect x="5" y="1" width="1" height="1" fill="#000"/><rect x="6" y="1" width="7" height="1" fill="#0000ff"/><rect x="13" y="1" width="1" height="1" fill="#ffff00"/><rect x="14" y="1" width="1" height="1" fill="#000"/><rect x="0" y="2" width="2" height="1" fill="#0000ff"/><rect x="2" y="2" width="1" height="1" fill="#ffff00"/><rect x="3" y="2" width="2" height="1" fill="#fff"/><rect x="5" y="2" width="1" height="1" fill="#000"/><rect x="6" y="2" width="2" height="1" fill="#ffff00"/><rect x="8" y="2" width="3" height="1" fill="#0000ff"/><rect x="11" y="2" width="1" height="1" fill="#ffff00"/><rect x="12" y="2" width="2" height="1" fill="#000"/><rect x="0" y="3" width="3" height="1" fill="#0000ff"/><rect x="3" y="3" width="1" height="1" fill="#fff"/><rect x="4" y="3" width="1" height="1" fill="#0000ff"/><rect x="5" y="3" width="1" height="1" fill="#fff"/><rect x="6" y="3" width="1" height="1" fill="#ffff00"/><rect x="7" y="3" width="1" height="1" fill="#000"/><rect x="8" y="3" width="1" height="1" fill="#fff"/><rect x="9" y="3" width="2" height="1" fill="#0000ff"/><rect x="11" y="3" width="1" height="1" fill="#ffff00"/><rect x="12" y="3" width="1" height="1" fill="#000"/><rect x="0" y="4" width="2" height="1" fill="#0000ff"/><rect x="2" y="4" width="1" height="1" fill="#ffff00"/><rect x="3" y="4" width="1" height="1" fill="#fff"/><rect x="4" y="4" width="1" height="1" fill="#000"/><rect x="5" y="4" width="2" height="1" fill="#fff"/><rect x="7" y="4" width="1" height="1" fill="#ffff00"/><rect x="8" y="4" width="1" height="1" fill="#000"/><rect x="9" y="4" width="1" height="1" fill="#ffff00"/><rect x="10" y="4" width="1" height="1" fill="#000"/><rect x="11" y="4" width="1" height="1" fill="#fff"/><rect x="0" y="5" width="1" height="1" fill="#0000ff"/><rect x="1" y="5" width="1" height="1" fill="#ffff00"/><rect x="2" y="5" width="2" height="1" fill="#fff"/><rect x="4" y="5" width="1" height="1" fill="#000"/><rect x="5" y="5" width="1" height="1" fill="#fff"/><rect x="6" y="5" width="1" height="1" fill="#ffff00"/><rect x="7" y="5" width="2" height="1" fill="#000"/><rect x="9" y="5" width="1" height="1" fill="#ffff00"/><rect x="10" y="5" width="1" height="1" fill="#000"/><rect x="0" y="6" width="1" height="1" fill="#0000ff"/><rect x="1" y="6" width="1" height="1" fill="#ffff00"/><rect x="2" y="6" width="2" height="1" fill="#fff"/><rect x="4" y="6" width="1" height="1" fill="#ffff00"/><rect x="5" y="6" width="1" height="1" fill="#000"/><rect x="6" y="6" width="1" height="1" fill="#fff"/><rect x="7" y="6" width="1" height="1" fill="#ffff00"/><rect x="8" y="6" width="1" height="1" fill="#000"/><rect x="9" y="6" width="1" height="1" fill="#fff"/><rect x="10" y="6" width="2" height="1" fill="#000"/><rect x="0" y="7" width="3" height="1" fill="#0000ff"/><rect x="3" y="7" width="1" height="1" fill="#fff"/><rect x="4" y="7" width="2" height="1" fill="#ffff00"/><rect x="6" y="7" width="1" height="1" fill="#fff"/><rect x="7" y="7" width="1" height="1" fill="#ffff00"/><rect x="8" y="7" width="1" height="1" fill="#fff"/><rect x="9" y="7" width="2" height="1" fill="#ffff00"/><rect x="11" y="7" width="2" height="1" fill="#fff"/><rect x="0" y="8" width="3" height="1" fill="#000"/><rect x="3" y="8" width="1" height="1" fill="#ffff00"/><rect x="4" y="8" width="2" height="1" fill="#000"/><rect x="6" y="8" width="1" height="1" fill="#ffff00"/><rect x="7" y="8" width="1" height="1" fill="#fff"/><rect x="8" y="8" width="1" height="1" fill="#ffff00"/><rect x="9" y="8" width="4" height="1" fill="#000"/><rect x="13" y="8" width="2" height="1" fill="#ffff00"/><rect x="0" y="9" width="3" height="1" fill="#0000ff"/><rect x="3" y="9" width="1" height="1" fill="#000"/><rect x="4" y="9" width="2" height="1" fill="#ffff00"/><rect x="6" y="9" width="1" height="1" fill="#000"/><rect x="7" y="9" width="1" height="1" fill="#fff"/><rect x="8" y="9" width="1" height="1" fill="#ffff00"/><rect x="9" y="9" width="1" height="1" fill="#000"/><rect x="10" y="9" width="2" height="1" fill="#ffff00"/><rect x="12" y="9" width="1" height="1" fill="#000"/><rect x="0" y="10" width="2" height="1" fill="#0000ff"/><rect x="2" y="10" width="1" height="1" fill="#ffff00"/><rect x="3" y="10" width="2" height="1" fill="#000"/><rect x="5" y="10" width="2" height="1" fill="#ffff00"/><rect x="7" y="10" width="1" height="1" fill="#000"/><rect x="8" y="10" width="1" height="1" fill="#ffff00"/><rect x="9" y="10" width="1" height="1" fill="#000"/><rect x="10" y="10" width="2" height="1" fill="#ffff00"/><rect x="12" y="10" width="1" height="1" fill="#000"/><rect x="0" y="11" width="1" height="1" fill="#0000ff"/><rect x="1" y="11" width="1" height="1" fill="#ffff00"/><rect x="2" y="11" width="2" height="1" fill="#000"/><rect x="4" y="11" width="2" height="1" fill="#ffff00"/><rect x="6" y="11" width="2" height="1" fill="#000"/><rect x="8" y="11" width="2" height="1" fill="#ffff00"/><rect x="10" y="11" width="1" height="1" fill="#000"/><rect x="11" y="11" width="2" height="1" fill="#ffff00"/><rect x="13" y="11" width="1" height="1" fill="#000"/><rect x="0" y="12" width="1" height="1" fill="#0000ff"/><rect x="1" y="12" width="1" height="1" fill="#ffff00"/><rect x="2" y="12" width="1" height="1" fill="#000"/><rect x="5" y="12" width="2" height="1" fill="#000"/><rect x="7" y="12" width="1" height="1" fill="#ffff00"/><rect x="8" y="12" width="2" height="1" fill="#000"/><rect x="10" y="12" width="2" height="1" fill="#ffff00"/><rect x="12" y="12" width="2" height="1" fill="#000"/><rect x="0" y="13" width="1" height="1" fill="#0000ff"/><rect x="1" y="13" width="1" height="1" fill="#000"/><rect x="6" y="13" width="1" height="1" fill="#000"/><rect x="7" y="13" width="1" height="1" fill="#ffff00"/><rect x="8" y="13" width="1" height="1" fill="#000"/><rect x="11" y="13" width="3" height="1" fill="#000"/><rect x="0" y="14" width="1" height="1" fill="#0000ff"/><rect x="6" y="14" width="1" height="1" fill="#ffff00"/><rect x="7" y="14" width="1" height="1" fill="#000"/></svg><svg style="left:352px;top:747px;" width="16" height="16" viewBox="0 0 16 16" shape-rendering="crispEdges"><rect x="0" y="0" width="16" height="1" fill="#0000ff"/><rect x="0" y="1" width="1" height="1" fill="#0000ff"/><rect x="1" y="1" width="1" height="1" fill="#fff"/><rect x="2" y="1" width="2" height="1" fill="#0000ff"/><rect x="4" y="1" width="1" height="1" fill="#fff"/><rect x="5" y="1" width="2" height="1" fill="#0000ff"/><rect x="7" y="1" width="1" height="1" fill="#fff"/><rect x="8" y="1" width="2" height="1" fill="#0000ff"/><rect x="10" y="1" width="1" height="1" fill="#fff"/><rect x="11" y="1" width="2" height="1" fill="#0000ff"/><rect x="13" y="1" width="1" height="1" fill="#fff"/><rect x="14" y="1" width="2" height="1" fill="#0000ff"/><rect x="0" y="2" width="16" height="1" fill="#0000ff"/><rect x="0" y="3" width="2" height="1" fill="#0000ff"/><rect x="2" y="3" width="1" height="1" fill="#fff"/><rect x="3" y="3" width="2" height="1" fill="#0000ff"/><rect x="5" y="3" width="1" height="1" fill="#fff"/><rect x="6" y="3" width="4" height="1" fill="#0000ff"/><rect x="10" y="3" width="1" height="1" fill="#fff"/><rect x="11" y="3" width="2" height="1" fill="#0000ff"/><rect x="13" y="3" width="1" height="1" fill="#fff"/><rect x="14" y="3" width="2" height="1" fill="#0000ff"/><rect x="0" y="4" width="16" height="1" fill="#f08080"/><rect x="1" y="5" width="1" height="1" fill="#008080"/><rect x="2" y="5" width="11" height="1" fill="#000"/><rect x="13" y="5" width="1" height="1" fill="#008080"/><rect x="4" y="6" width="2" height="1" fill="#000"/><rect x="6" y="6" width="1" height="1" fill="#ff8020"/><rect x="7" y="6" width="1" height="1" fill="#f08080"/><rect x="8" y="6" width="1" height="1" fill="#fff"/><rect x="9" y="6" width="1" height="1" fill="#000"/><rect x="10" y="6" width="2" height="1" fill="#ff8020"/><rect x="4" y="7" width="1" height="1" fill="#000"/><rect x="5" y="7" width="6" height="1" fill="#ff8020"/><rect x="11" y="7" width="1" height="1" fill="#000"/><rect x="4" y="8" width="1" height="1" fill="#000"/><rect x="5" y="8" width="4" height="1" fill="#ff8020"/><rect x="9" y="8" width="2" height="1" fill="#000"/><rect x="4" y="9" width="1" height="1" fill="#000"/><rect x="5" y="9" width="3" height="1" fill="#ff8020"/><rect x="8" y="9" width="1" height="1" fill="#000"/><rect x="11" y="9" width="4" height="1" fill="#000"/><rect x="4" y="10" width="1" height="1" fill="#000"/><rect x="5" y="10" width="2" height="1" fill="#ff8020"/><rect x="7" y="10" width="1" height="1" fill="#000"/><rect x="9" y="10" width="1" height="1" fill="#fff"/><rect x="11" y="10" width="5" height="1" fill="#000"/><rect x="4" y="11" width="1" height="1" fill="#000"/><rect x="5" y="11" width="1" height="1" fill="#008000"/><rect x="6" y="11" width="1" height="1" fill="#ff8020"/><rect x="7" y="11" width="1" height="1" fill="#000"/><rect x="8" y="11" width="2" height="1" fill="#fff"/><rect x="10" y="11" width="2" height="1" fill="#000"/><rect x="12" y="11" width="1" height="1" fill="#fff"/><rect x="13" y="11" width="3" height="1" fill="#000"/><rect x="3" y="12" width="6" height="1" fill="#0000ff"/><rect x="10" y="12" width="2" height="1" fill="#000"/><rect x="12" y="12" width="1" height="1" fill="#fff"/><rect x="13" y="12" width="3" height="1" fill="#000"/><rect x="3" y="13" width="6" height="1" fill="#0000ff"/><rect x="9" y="13" width="7" height="1" fill="#000"/><rect x="4" y="14" width="5" height="1" fill="#0000ff"/><rect x="10" y="14" width="2" height="1" fill="#000"/><rect x="14" y="14" width="2" height="1" fill="#000"/></svg><svg style="left:448px;top:747px;" width="16" height="16" viewBox="0 0 16 16" shape-rendering="crispEdges"><rect x="0" y="0" width="2" height="1" fill="#3050ff"/><rect x="2" y="0" width="1" height="1" fill="#f0f0f0"/><rect x="3" y="0" width="2" height="1" fill="#3050ff"/><rect x="5" y="0" width="1" height="1" fill="#f0f0f0"/><rect x="6" y="0" width="2" height="1" fill="#3050ff"/><rect x="8" y="0" width="1" height="1" fill="#f0f0f0"/><rect x="9" y="0" width="2" height="1" fill="#3050ff"/><rect x="11" y="0" width="1" height="1" fill="#f0f0f0"/><rect x="12" y="0" width="2" height="1" fill="#3050ff"/><rect x="14" y="0" width="1" height="1" fill="#f0f0f0"/><rect x="15" y="0" width="1" height="1" fill="#3050ff"/><rect x="0" y="1" width="1" height="1" fill="#3050ff"/><rect x="1" y="1" width="1" height="1" fill="#f0f0f0"/><rect x="2" y="1" width="1" height="1" fill="#3050ff"/><rect x="3" y="1" width="1" height="1" fill="#f0f0f0"/><rect x="4" y="1" width="1" height="1" fill="#3050ff"/><rect x="5" y="1" width="1" height="1" fill="#f0f0f0"/><rect x="6" y="1" width="1" height="1" fill="#3050ff"/><rect x="7" y="1" width="1" height="1" fill="#f0f0f0"/><rect x="8" y="1" width="1" height="1" fill="#3050ff"/><rect x="9" y="1" width="1" height="1" fill="#f0f0f0"/><rect x="10" y="1" width="1" height="1" fill="#3050ff"/><rect x="11" y="1" width="1" height="1" fill="#f0f0f0"/><rect x="12" y="1" width="2" height="1" fill="#3050ff"/><rect x="14" y="1" width="1" height="1" fill="#f0f0f0"/><rect x="15" y="1" width="1" height="1" fill="#3050ff"/><rect x="0" y="2" width="2" height="1" fill="#3050ff"/><rect x="2" y="2" width="1" height="1" fill="#f0f0f0"/><rect x="3" y="2" width="2" height="1" fill="#3050ff"/><rect x="5" y="2" width="1" height="1" fill="#f0f0f0"/><rect x="6" y="2" width="1" height="1" fill="#3050ff"/><rect x="7" y="2" width="1" height="1" fill="#f0f0f0"/><rect x="8" y="2" width="2" height="1" fill="#3050ff"/><rect x="10" y="2" width="1" height="1" fill="#f0f0f0"/><rect x="11" y="2" width="2" height="1" fill="#3050ff"/><rect x="13" y="2" width="1" height="1" fill="#f0f0f0"/><rect x="14" y="2" width="2" height="1" fill="#3050ff"/><rect x="0" y="3" width="1" height="1" fill="#3050ff"/><rect x="1" y="3" width="1" height="1" fill="#f0f0f0"/><rect x="2" y="3" width="1" height="1" fill="#3050ff"/><rect x="3" y="3" width="1" height="1" fill="#f0f0f0"/><rect x="4" y="3" width="1" height="1" fill="#3050ff"/><rect x="5" y="3" width="1" height="1" fill="#f0f0f0"/><rect x="6" y="3" width="1" height="1" fill="#3050ff"/><rect x="7" y="3" width="1" height="1" fill="#f0f0f0"/><rect x="8" y="3" width="1" height="1" fill="#3050ff"/><rect x="9" y="3" width="1" height="1" fill="#f0f0f0"/><rect x="10" y="3" width="1" height="1" fill="#3050ff"/><rect x="11" y="3" width="1" height="1" fill="#f0f0f0"/><rect x="12" y="3" width="1" height="1" fill="#3050ff"/><rect x="13" y="3" width="1" height="1" fill="#f0f0f0"/><rect x="14" y="3" width="1" height="1" fill="#3050ff"/><rect x="15" y="3" width="1" height="1" fill="#f0f0f0"/><rect x="0" y="4" width="16" height="1" fill="#e04040"/><rect x="0" y="5" width="16" height="1" fill="#d0d4cc"/><rect x="0" y="6" width="1" height="1" fill="#d0d4cc"/><rect x="1" y="6" width="1" height="1" fill="#f0f0f0"/><rect x="2" y="6" width="4" height="1" fill="#606060"/><rect x="6" y="6" width="1" height="1" fill="#d0d4cc"/><rect x="7" y="6" width="1" height="1" fill="#606060"/><rect x="8" y="6" width="4" height="1" fill="#f0f0f0"/><rect x="12" y="6" width="2" height="1" fill="#606060"/><rect x="14" y="6" width="1" height="1" fill="#f0f0f0"/><rect x="15" y="6" width="1" height="1" fill="#d0d4cc"/><rect x="0" y="7" width="1" height="1" fill="#d0d4cc"/><rect x="1" y="7" width="1" height="1" fill="#f0f0f0"/><rect x="2" y="7" width="2" height="1" fill="#606060"/><rect x="4" y="7" width="1" height="1" fill="#f0f0f0"/><rect x="5" y="7" width="3" height="1" fill="#606060"/><rect x="8" y="7" width="1" height="1" fill="#f0f0f0"/><rect x="9" y="7" width="2" height="1" fill="#606060"/><rect x="11" y="7" width="2" height="1" fill="#f0f0f0"/><rect x="13" y="7" width="1" height="1" fill="#606060"/><rect x="14" y="7" width="1" height="1" fill="#f0f0f0"/><rect x="15" y="7" width="1" height="1" fill="#d0d4cc"/><rect x="0" y="8" width="1" height="1" fill="#d0d4cc"/><rect x="1" y="8" width="1" height="1" fill="#f0f0f0"/><rect x="2" y="8" width="4" height="1" fill="#606060"/><rect x="6" y="8" width="1" height="1" fill="#d0d4cc"/><rect x="7" y="8" width="1" height="1" fill="#606060"/><rect x="8" y="8" width="1" height="1" fill="#f0f0f0"/><rect x="9" y="8" width="1" height="1" fill="#606060"/><rect x="10" y="8" width="1" height="1" fill="#f0f0f0"/><rect x="11" y="8" width="2" height="1" fill="#606060"/><rect x="13" y="8" width="2" height="1" fill="#f0f0f0"/><rect x="15" y="8" width="1" height="1" fill="#d0d4cc"/><rect x="0" y="9" width="1" height="1" fill="#d0d4cc"/><rect x="1" y="9" width="6" height="1" fill="#f0f0f0"/><rect x="7" y="9" width="2" height="1" fill="#606060"/><rect x="9" y="9" width="2" height="1" fill="#f0f0f0"/><rect x="11" y="9" width="2" height="1" fill="#606060"/><rect x="13" y="9" width="2" height="1" fill="#f0f0f0"/><rect x="15" y="9" width="1" height="1" fill="#d0d4cc"/><rect x="0" y="10" width="1" height="1" fill="#d0d4cc"/><rect x="1" y="10" width="1" height="1" fill="#f0f0f0"/><rect x="2" y="10" width="5" height="1" fill="#d0d4cc"/><rect x="7" y="10" width="1" height="1" fill="#f0f0f0"/><rect x="8" y="10" width="2" height="1" fill="#606060"/><rect x="10" y="10" width="1" height="1" fill="#f0f0f0"/><rect x="11" y="10" width="2" height="1" fill="#606060"/><rect x="13" y="10" width="2" height="1" fill="#f0f0f0"/><rect x="15" y="10" width="1" height="1" fill="#d0d4cc"/><rect x="0" y="11" width="1" height="1" fill="#d0d4cc"/><rect x="1" y="11" width="1" height="1" fill="#f0f0f0"/><rect x="2" y="11" width="5" height="1" fill="#d0d4cc"/><rect x="7" y="11" width="1" height="1" fill="#f0f0f0"/><rect x="8" y="11" width="1" height="1" fill="#606060"/><rect x="9" y="11" width="3" height="1" fill="#f0f0f0"/><rect x="12" y="11" width="1" height="1" fill="#000"/><rect x="13" y="11" width="2" height="1" fill="#f0f0f0"/><rect x="15" y="11" width="1" height="1" fill="#d0d4cc"/><rect x="0" y="12" width="1" height="1" fill="#d0d4cc"/><rect x="1" y="12" width="1" height="1" fill="#f0f0f0"/><rect x="2" y="12" width="4" height="1" fill="#d0d4cc"/><rect x="6" y="12" width="2" height="1" fill="#f0f0f0"/><rect x="8" y="12" width="2" height="1" fill="#000"/><rect x="10" y="12" width="1" height="1" fill="#f0f0f0"/><rect x="11" y="12" width="2" height="1" fill="#000"/><rect x="13" y="12" width="2" height="1" fill="#f0f0f0"/><rect x="15" y="12" width="1" height="1" fill="#d0d4cc"/><rect x="0" y="13" width="1" height="1" fill="#d0d4cc"/><rect x="1" y="13" width="1" height="1" fill="#f0f0f0"/><rect x="2" y="13" width="4" height="1" fill="#606060"/><rect x="6" y="13" width="2" height="1" fill="#f0f0f0"/><rect x="8" y="13" width="6" height="1" fill="#000"/><rect x="14" y="13" width="1" height="1" fill="#f0f0f0"/><rect x="15" y="13" width="1" height="1" fill="#d0d4cc"/><rect x="0" y="14" width="1" height="1" fill="#d0d4cc"/><rect x="1" y="14" width="6" height="1" fill="#f0f0f0"/><rect x="7" y="14" width="3" height="1" fill="#000"/><rect x="10" y="14" width="1" height="1" fill="#f0f0f0"/><rect x="11" y="14" width="4" height="1" fill="#000"/><rect x="15" y="14" width="1" height="1" fill="#d0d4cc"/><rect x="0" y="15" width="7" height="1" fill="#d0d4cc"/><rect x="7" y="15" width="3" height="1" fill="#000"/><rect x="10" y="15" width="2" height="1" fill="#f0f0f0"/><rect x="12" y="15" width="3" height="1" fill="#000"/><rect x="15" y="15" width="1" height="1" fill="#d0d4cc"/></svg><svg style="left:544px;top:747px;" width="16" height="16" viewBox="0 0 16 16" shape-rendering="crispEdges"><rect x="0" y="0" width="16" height="1" fill="#0000ff"/><rect x="0" y="1" width="1" height="1" fill="#0000ff"/><rect x="1" y="1" width="1" height="1" fill="#fff"/><rect x="2" y="1" width="2" height="1" fill="#0000ff"/><rect x="4" y="1" width="1" height="1" fill="#fff"/><rect x="5" y="1" width="2" height="1" fill="#0000ff"/><rect x="7" y="1" width="1" height="1" fill="#fff"/><rect x="8" y="1" width="2" height="1" fill="#0000ff"/><rect x="10" y="1" width="1" height="1" fill="#fff"/><rect x="11" y="1" width="2" height="1" fill="#0000ff"/><rect x="13" y="1" width="1" height="1" fill="#fff"/><rect x="14" y="1" width="2" height="1" fill="#0000ff"/><rect x="0" y="2" width="16" height="1" fill="#0000ff"/><rect x="0" y="3" width="2" height="1" fill="#0000ff"/><rect x="2" y="3" width="1" height="1" fill="#fff"/><rect x="3" y="3" width="2" height="1" fill="#0000ff"/><rect x="5" y="3" width="1" height="1" fill="#fff"/><rect x="6" y="3" width="4" height="1" fill="#0000ff"/><rect x="10" y="3" width="1" height="1" fill="#fff"/><rect x="11" y="3" width="2" height="1" fill="#0000ff"/><rect x="13" y="3" width="1" height="1" fill="#fff"/><rect x="14" y="3" width="2" height="1" fill="#0000ff"/><rect x="0" y="4" width="16" height="1" fill="#ff0000"/><rect x="1" y="5" width="14" height="1" fill="#c6c3c6"/><rect x="1" y="6" width="1" height="1" fill="#c6c3c6"/><rect x="2" y="6" width="1" height="1" fill="#848284"/><rect x="3" y="6" width="1" height="1" fill="#000"/><rect x="4" y="6" width="6" height="1" fill="#fff"/><rect x="10" y="6" width="1" height="1" fill="#000"/><rect x="11" y="6" width="1" height="1" fill="#848284"/><rect x="12" y="6" width="1" height="1" fill="#fff"/><rect x="13" y="6" width="2" height="1" fill="#c6c3c6"/><rect x="1" y="7" width="1" height="1" fill="#c6c3c6"/><rect x="2" y="7" width="1" height="1" fill="#848284"/><rect x="3" y="7" width="1" height="1" fill="#fff"/><rect x="4" y="7" width="1" height="1" fill="#000"/><rect x="5" y="7" width="5" height="1" fill="#fff"/><rect x="10" y="7" width="1" height="1" fill="#000"/><rect x="11" y="7" width="1" height="1" fill="#848284"/><rect x="12" y="7" width="1" height="1" fill="#fff"/><rect x="13" y="7" width="2" height="1" fill="#c6c3c6"/><rect x="1" y="8" width="1" height="1" fill="#c6c3c6"/><rect x="2" y="8" width="1" height="1" fill="#848284"/><rect x="3" y="8" width="2" height="1" fill="#fff"/><rect x="5" y="8" width="1" height="1" fill="#000"/><rect x="6" y="8" width="1" height="1" fill="#fff"/><rect x="7" y="8" width="2" height="1" fill="#ffff00"/><rect x="9" y="8" width="1" height="1" fill="#ff8020"/><rect x="10" y="8" width="3" height="1" fill="#fff"/><rect x="13" y="8" width="2" height="1" fill="#c6c3c6"/><rect x="1" y="9" width="1" height="1" fill="#c6c3c6"/><rect x="2" y="9" width="1" height="1" fill="#848284"/><rect x="3" y="9" width="1" height="1" fill="#fff"/><rect x="4" y="9" width="1" height="1" fill="#000"/><rect x="5" y="9" width="1" height="1" fill="#fff"/><rect x="6" y="9" width="3" height="1" fill="#ffff00"/><rect x="9" y="9" width="2" height="1" fill="#ff0000"/><rect x="11" y="9" width="2" height="1" fill="#fff"/><rect x="13" y="9" width="2" height="1" fill="#c6c3c6"/><rect x="1" y="10" width="1" height="1" fill="#c6c3c6"/><rect x="2" y="10" width="1" height="1" fill="#848284"/><rect x="3" y="10" width="1" height="1" fill="#000"/><rect x="4" y="10" width="1" height="1" fill="#fff"/><rect x="5" y="10" width="1" height="1" fill="#000"/><rect x="6" y="10" width="1" height="1" fill="#fff"/><rect x="7" y="10" width="1" height="1" fill="#ffff00"/><rect x="8" y="10" width="4" height="1" fill="#ff0000"/><rect x="12" y="10" width="1" height="1" fill="#fff"/><rect x="13" y="10" width="2" height="1" fill="#c6c3c6"/><rect x="1" y="11" width="1" height="1" fill="#c6c3c6"/><rect x="2" y="11" width="1" height="1" fill="#848284"/><rect x="3" y="11" width="1" height="1" fill="#fff"/><rect x="4" y="11" width="2" height="1" fill="#000"/><rect x="6" y="11" width="1" height="1" fill="#fff"/><rect x="7" y="11" width="2" height="1" fill="#ff0000"/><rect x="9" y="11" width="1" height="1" fill="#000"/><rect x="10" y="11" width="3" height="1" fill="#ff0000"/><rect x="13" y="11" width="2" height="1" fill="#c6c3c6"/><rect x="1" y="12" width="1" height="1" fill="#c6c3c6"/><rect x="2" y="12" width="1" height="1" fill="#848284"/><rect x="3" y="12" width="1" height="1" fill="#000"/><rect x="4" y="12" width="1" height="1" fill="#fff"/><rect x="5" y="12" width="1" height="1" fill="#000"/><rect x="6" y="12" width="1" height="1" fill="#fff"/><rect x="7" y="12" width="4" height="1" fill="#ff0000"/><rect x="11" y="12" width="1" height="1" fill="#000"/><rect x="12" y="12" width="2" height="1" fill="#ff0000"/><rect x="14" y="12" width="1" height="1" fill="#c6c3c6"/><rect x="1" y="13" width="1" height="1" fill="#c6c3c6"/><rect x="2" y="13" width="2" height="1" fill="#848284"/><rect x="4" y="13" width="1" height="1" fill="#000"/><rect x="5" y="13" width="2" height="1" fill="#fff"/><rect x="7" y="13" width="1" height="1" fill="#c6c3c6"/><rect x="8" y="13" width="2" height="1" fill="#ff0000"/><rect x="10" y="13" width="1" height="1" fill="#000"/><rect x="11" y="13" width="4" height="1" fill="#ff0000"/><rect x="1" y="14" width="1" height="1" fill="#c6c3c6"/><rect x="2" y="14" width="6" height="1" fill="#848284"/><rect x="8" y="14" width="1" height="1" fill="#c6c3c6"/><rect x="9" y="14" width="6" height="1" fill="#ff0000"/><rect x="10" y="15" width="4" height="1" fill="#ff0000"/><rect x="14" y="15" width="1" height="1" fill="#000"/></svg><svg style="left:640px;top:747px;" width="16" height="16" viewBox="0 0 16 16" shape-rendering="crispEdges"><rect x="11" y="1" width="4" height="1" fill="#000"/><rect x="8" y="2" width="3" height="1" fill="#000"/><rect x="11" y="2" width="4" height="1" fill="#fff"/><rect x="15" y="2" width="1" height="1" fill="#000"/><rect x="5" y="3" width="3" height="1" fill="#000"/><rect x="8" y="3" width="1" height="1" fill="#fff"/><rect x="9" y="3" width="1" height="1" fill="#000"/><rect x="10" y="3" width="2" height="1" fill="#fff"/><rect x="12" y="3" width="1" height="1" fill="#000"/><rect x="13" y="3" width="2" height="1" fill="#fff"/><rect x="15" y="3" width="1" height="1" fill="#000"/><rect x="3" y="4" width="2" height="1" fill="#ff0000"/><rect x="5" y="4" width="1" height="1" fill="#000"/><rect x="6" y="4" width="1" height="1" fill="#fff"/><rect x="7" y="4" width="1" height="1" fill="#000"/><rect x="8" y="4" width="2" height="1" fill="#fff"/><rect x="10" y="4" width="1" height="1" fill="#000"/><rect x="11" y="4" width="3" height="1" fill="#fff"/><rect x="14" y="4" width="1" height="1" fill="#000"/><rect x="3" y="5" width="2" height="1" fill="#ff0000"/><rect x="5" y="5" width="1" height="1" fill="#000"/><rect x="6" y="5" width="2" height="1" fill="#fff"/><rect x="8" y="5" width="1" height="1" fill="#000"/><rect x="9" y="5" width="2" height="1" fill="#fff"/><rect x="11" y="5" width="1" height="1" fill="#000"/><rect x="12" y="5" width="2" height="1" fill="#fff"/><rect x="14" y="5" width="1" height="1" fill="#000"/><rect x="1" y="6" width="2" height="1" fill="#000"/><rect x="3" y="6" width="2" height="1" fill="#ff0000"/><rect x="5" y="6" width="1" height="1" fill="#000"/><rect x="6" y="6" width="2" height="1" fill="#fff"/><rect x="8" y="6" width="2" height="1" fill="#000"/><rect x="10" y="6" width="2" height="1" fill="#fff"/><rect x="12" y="6" width="1" height="1" fill="#000"/><rect x="13" y="6" width="1" height="1" fill="#c6c3c6"/><rect x="14" y="6" width="1" height="1" fill="#000"/><rect x="1" y="7" width="1" height="1" fill="#000"/><rect x="3" y="7" width="1" height="1" fill="#000"/><rect x="4" y="7" width="2" height="1" fill="#fff"/><rect x="6" y="7" width="2" height="1" fill="#000"/><rect x="8" y="7" width="1" height="1" fill="#fff"/><rect x="9" y="7" width="2" height="1" fill="#c6c3c6"/><rect x="11" y="7" width="2" height="1" fill="#000"/><rect x="13" y="7" width="1" height="1" fill="#c6c3c6"/><rect x="14" y="7" width="1" height="1" fill="#000"/><rect x="1" y="8" width="1" height="1" fill="#000"/><rect x="3" y="8" width="1" height="1" fill="#000"/><rect x="4" y="8" width="1" height="1" fill="#fff"/><rect x="5" y="8" width="1" height="1" fill="#000"/><rect x="6" y="8" width="6" height="1" fill="#c6c3c6"/><rect x="12" y="8" width="1" height="1" fill="#000"/><rect x="13" y="8" width="1" height="1" fill="#848284"/><rect x="14" y="8" width="1" height="1" fill="#000"/><rect x="1" y="9" width="1" height="1" fill="#000"/><rect x="3" y="9" width="2" height="1" fill="#000"/><rect x="5" y="9" width="8" height="1" fill="#c6c3c6"/><rect x="13" y="9" width="2" height="1" fill="#000"/><rect x="1" y="10" width="1" height="1" fill="#000"/><rect x="3" y="10" width="1" height="1" fill="#000"/><rect x="5" y="10" width="1" height="1" fill="#000"/><rect x="6" y="10" width="7" height="1" fill="#c6c3c6"/><rect x="13" y="10" width="1" height="1" fill="#fff"/><rect x="14" y="10" width="1" height="1" fill="#000"/><rect x="1" y="11" width="1" height="1" fill="#000"/><rect x="3" y="11" width="1" height="1" fill="#000"/><rect x="5" y="11" width="1" height="1" fill="#000"/><rect x="6" y="11" width="6" height="1" fill="#c6c3c6"/><rect x="12" y="11" width="2" height="1" fill="#fff"/><rect x="14" y="11" width="1" height="1" fill="#000"/><rect x="1" y="12" width="2" height="1" fill="#000"/><rect x="5" y="12" width="2" height="1" fill="#000"/><rect x="7" y="12" width="4" height="1" fill="#c6c3c6"/><rect x="11" y="12" width="2" height="1" fill="#fff"/><rect x="13" y="12" width="1" height="1" fill="#000"/><rect x="2" y="13" width="2" height="1" fill="#000"/><rect x="7" y="13" width="2" height="1" fill="#000"/><rect x="9" y="13" width="1" height="1" fill="#c6c3c6"/><rect x="10" y="13" width="2" height="1" fill="#fff"/><rect x="12" y="13" width="1" height="1" fill="#000"/><rect x="3" y="14" width="2" height="1" fill="#000"/><rect x="9" y="14" width="3" height="1" fill="#000"/></svg><svg style="left:736px;top:747px;" width="16" height="16" viewBox="0 0 16 16" shape-rendering="crispEdges"><rect x="11" y="0" width="2" height="1" fill="#00ff00"/><rect x="3" y="1" width="5" height="1" fill="#848284"/><rect x="10" y="1" width="3" height="1" fill="#00ff00"/><rect x="13" y="1" width="1" height="1" fill="#008000"/><rect x="2" y="2" width="1" height="1" fill="#000"/><rect x="3" y="2" width="1" height="1" fill="#ffff00"/><rect x="4" y="2" width="1" height="1" fill="#fff"/><rect x="5" y="2" width="1" height="1" fill="#ffff00"/><rect x="6" y="2" width="1" height="1" fill="#fff"/><rect x="7" y="2" width="1" height="1" fill="#ffff00"/><rect x="8" y="2" width="1" height="1" fill="#000"/><rect x="11" y="2" width="2" height="1" fill="#00ff00"/><rect x="13" y="2" width="2" height="1" fill="#008000"/><rect x="2" y="3" width="1" height="1" fill="#ffff00"/><rect x="3" y="3" width="1" height="1" fill="#fff"/><rect x="4" y="3" width="1" height="1" fill="#ffff00"/><rect x="5" y="3" width="1" height="1" fill="#fff"/><rect x="6" y="3" width="1" height="1" fill="#ffff00"/><rect x="7" y="3" width="1" height="1" fill="#fff"/><rect x="8" y="3" width="1" height="1" fill="#ffff00"/><rect x="9" y="3" width="1" height="1" fill="#000"/><rect x="12" y="3" width="3" height="1" fill="#008000"/><rect x="0" y="4" width="3" height="1" fill="#ffff00"/><rect x="3" y="4" width="1" height="1" fill="#fff"/><rect x="4" y="4" width="1" height="1" fill="#ffff00"/><rect x="5" y="4" width="1" height="1" fill="#fff"/><rect x="6" y="4" width="1" height="1" fill="#ffff00"/><rect x="7" y="4" width="1" height="1" fill="#fff"/><rect x="8" y="4" width="1" height="1" fill="#000"/><rect x="12" y="4" width="2" height="1" fill="#fff"/><rect x="0" y="5" width="2" height="1" fill="#ffff00"/><rect x="2" y="5" width="1" height="1" fill="#000"/><rect x="3" y="5" width="1" height="1" fill="#ffff00"/><rect x="4" y="5" width="1" height="1" fill="#fff"/><rect x="5" y="5" width="1" height="1" fill="#ffff00"/><rect x="6" y="5" width="1" height="1" fill="#fff"/><rect x="7" y="5" width="1" height="1" fill="#000"/><rect x="11" y="5" width="1" height="1" fill="#fff"/><rect x="13" y="5" width="2" height="1" fill="#fff"/><rect x="1" y="6" width="2" height="1" fill="#ffff00"/><rect x="3" y="6" width="2" height="1" fill="#000"/><rect x="5" y="6" width="1" height="1" fill="#ffff00"/><rect x="6" y="6" width="2" height="1" fill="#000"/><rect x="13" y="6" width="1" height="1" fill="#fff"/><rect x="2" y="7" width="2" height="1" fill="#ffff00"/><rect x="6" y="7" width="2" height="1" fill="#000"/><rect x="8" y="7" width="1" height="1" fill="#c6c3c6"/><rect x="9" y="7" width="3" height="1" fill="#848284"/><rect x="14" y="7" width="1" height="1" fill="#fff"/><rect x="0" y="8" width="4" height="1" fill="#ffff00"/><rect x="8" y="8" width="1" height="1" fill="#848284"/><rect x="9" y="8" width="3" height="1" fill="#fff"/><rect x="12" y="8" width="1" height="1" fill="#848284"/><rect x="13" y="8" width="1" height="1" fill="#fff"/><rect x="1" y="9" width="3" height="1" fill="#ffff00"/><rect x="7" y="9" width="1" height="1" fill="#848284"/><rect x="8" y="9" width="5" height="1" fill="#fff"/><rect x="13" y="9" width="2" height="1" fill="#848284"/><rect x="0" y="10" width="2" height="1" fill="#ffff00"/><rect x="6" y="10" width="1" height="1" fill="#848284"/><rect x="7" y="10" width="7" height="1" fill="#fff"/><rect x="14" y="10" width="1" height="1" fill="#848284"/><rect x="0" y="11" width="1" height="1" fill="#ffff00"/><rect x="6" y="11" width="1" height="1" fill="#00ff00"/><rect x="7" y="11" width="1" height="1" fill="#848284"/><rect x="8" y="11" width="5" height="1" fill="#fff"/><rect x="13" y="11" width="1" height="1" fill="#848284"/><rect x="6" y="12" width="2" height="1" fill="#00ff00"/><rect x="8" y="12" width="1" height="1" fill="#848284"/><rect x="9" y="12" width="3" height="1" fill="#fff"/><rect x="12" y="12" width="1" height="1" fill="#848284"/><rect x="7" y="13" width="2" height="1" fill="#00ff00"/><rect x="9" y="13" width="1" height="1" fill="#848284"/><rect x="10" y="13" width="1" height="1" fill="#fff"/><rect x="11" y="13" width="1" height="1" fill="#848284"/><rect x="8" y="14" width="1" height="1" fill="#00ff00"/><rect x="9" y="14" width="1" height="1" fill="#008000"/><rect x="10" y="14" width="1" height="1" fill="#848284"/></svg><div class="a" style="left:839px;top:744px;width:183px;height:22px;box-shadow:inset 1px 1px #848284,inset -1px -1px #fff"></div><svg style="left:842px;top:747px;" width="17" height="15" viewBox="0 0 17 15" shape-rendering="crispEdges"><rect x="8" y="0" width="2" height="1" fill="#000"/><rect x="7" y="1" width="1" height="1" fill="#000"/><rect x="8" y="1" width="1" height="1" fill="#ffff00"/><rect x="9" y="1" width="1" height="1" fill="#000"/><rect x="6" y="2" width="1" height="1" fill="#000"/><rect x="7" y="2" width="1" height="1" fill="#ffff00"/><rect x="8" y="2" width="1" height="1" fill="#fff"/><rect x="9" y="2" width="1" height="1" fill="#000"/><rect x="5" y="3" width="1" height="1" fill="#000"/><rect x="6" y="3" width="1" height="1" fill="#ffff00"/><rect x="7" y="3" width="1" height="1" fill="#fff"/><rect x="8" y="3" width="1" height="1" fill="#ffff00"/><rect x="9" y="3" width="1" height="1" fill="#000"/><rect x="15" y="3" width="1" height="1" fill="#848284"/><rect x="4" y="4" width="1" height="1" fill="#000"/><rect x="5" y="4" width="1" height="1" fill="#ffff00"/><rect x="6" y="4" width="1" height="1" fill="#fff"/><rect x="7" y="4" width="1" height="1" fill="#ffff00"/><rect x="8" y="4" width="1" height="1" fill="#fff"/><rect x="9" y="4" width="1" height="1" fill="#000"/><rect x="14" y="4" width="1" height="1" fill="#848284"/><rect x="2" y="5" width="2" height="1" fill="#000"/><rect x="4" y="5" width="1" height="1" fill="#ffff00"/><rect x="5" y="5" width="1" height="1" fill="#fff"/><rect x="6" y="5" width="1" height="1" fill="#ffff00"/><rect x="7" y="5" width="1" height="1" fill="#fff"/><rect x="8" y="5" width="2" height="1" fill="#000"/><rect x="1" y="6" width="1" height="1" fill="#000"/><rect x="2" y="6" width="2" height="1" fill="#ffff00"/><rect x="4" y="6" width="1" height="1" fill="#fff"/><rect x="5" y="6" width="1" height="1" fill="#ffff00"/><rect x="6" y="6" width="1" height="1" fill="#fff"/><rect x="7" y="6" width="1" height="1" fill="#ffff00"/><rect x="8" y="6" width="1" height="1" fill="#000"/><rect x="9" y="6" width="1" height="1" fill="#fff"/><rect x="0" y="7" width="1" height="1" fill="#000"/><rect x="1" y="7" width="1" height="1" fill="#ffff00"/><rect x="2" y="7" width="1" height="1" fill="#fff"/><rect x="3" y="7" width="1" height="1" fill="#ffff00"/><rect x="4" y="7" width="1" height="1" fill="#fff"/><rect x="5" y="7" width="1" height="1" fill="#ffff00"/><rect x="6" y="7" width="1" height="1" fill="#fff"/><rect x="7" y="7" width="1" height="1" fill="#ffff00"/><rect x="8" y="7" width="1" height="1" fill="#000"/><rect x="9" y="7" width="1" height="1" fill="#fff"/><rect x="12" y="7" width="3" height="1" fill="#848284"/><rect x="1" y="8" width="1" height="1" fill="#000"/><rect x="2" y="8" width="2" height="1" fill="#ffff00"/><rect x="4" y="8" width="1" height="1" fill="#fff"/><rect x="5" y="8" width="1" height="1" fill="#ffff00"/><rect x="6" y="8" width="1" height="1" fill="#fff"/><rect x="7" y="8" width="1" height="1" fill="#ffff00"/><rect x="8" y="8" width="1" height="1" fill="#000"/><rect x="9" y="8" width="1" height="1" fill="#fff"/><rect x="2" y="9" width="2" height="1" fill="#000"/><rect x="4" y="9" width="1" height="1" fill="#ffff00"/><rect x="5" y="9" width="1" height="1" fill="#fff"/><rect x="6" y="9" width="1" height="1" fill="#ffff00"/><rect x="7" y="9" width="1" height="1" fill="#fff"/><rect x="8" y="9" width="2" height="1" fill="#000"/><rect x="4" y="10" width="1" height="1" fill="#000"/><rect x="5" y="10" width="1" height="1" fill="#ffff00"/><rect x="6" y="10" width="1" height="1" fill="#fff"/><rect x="7" y="10" width="1" height="1" fill="#ffff00"/><rect x="8" y="10" width="1" height="1" fill="#fff"/><rect x="9" y="10" width="1" height="1" fill="#000"/><rect x="14" y="10" width="1" height="1" fill="#848284"/><rect x="5" y="11" width="1" height="1" fill="#000"/><rect x="6" y="11" width="1" height="1" fill="#ffff00"/><rect x="7" y="11" width="1" height="1" fill="#fff"/><rect x="8" y="11" width="1" height="1" fill="#ffff00"/><rect x="9" y="11" width="1" height="1" fill="#000"/><rect x="15" y="11" width="1" height="1" fill="#848284"/><rect x="6" y="12" width="1" height="1" fill="#000"/><rect x="7" y="12" width="1" height="1" fill="#ffff00"/><rect x="8" y="12" width="1" height="1" fill="#fff"/><rect x="9" y="12" width="1" height="1" fill="#000"/><rect x="7" y="13" width="1" height="1" fill="#000"/><rect x="8" y="13" width="1" height="1" fill="#ffff00"/><rect x="9" y="13" width="1" height="1" fill="#000"/><rect x="8" y="14" width="2" height="1" fill="#000"/></svg><svg style="left:860px;top:748px;" width="16" height="13" viewBox="0 0 16 13" shape-rendering="crispEdges"><rect x="6" y="0" width="2" height="1" fill="#000"/><rect x="5" y="1" width="1" height="1" fill="#000"/><rect x="6" y="1" width="2" height="1" fill="#ffff00"/><rect x="8" y="1" width="1" height="1" fill="#000"/><rect x="4" y="2" width="1" height="1" fill="#000"/><rect x="5" y="2" width="1" height="1" fill="#ffff00"/><rect x="6" y="2" width="2" height="1" fill="#fff"/><rect x="8" y="2" width="1" height="1" fill="#ffff00"/><rect x="9" y="2" width="1" height="1" fill="#000"/><rect x="3" y="3" width="1" height="1" fill="#000"/><rect x="4" y="3" width="1" height="1" fill="#ffff00"/><rect x="5" y="3" width="2" height="1" fill="#fff"/><rect x="7" y="3" width="1" height="1" fill="#ffff00"/><rect x="8" y="3" width="1" height="1" fill="#fff"/><rect x="9" y="3" width="1" height="1" fill="#ffff00"/><rect x="10" y="3" width="1" height="1" fill="#000"/><rect x="2" y="4" width="1" height="1" fill="#000"/><rect x="3" y="4" width="1" height="1" fill="#ffff00"/><rect x="4" y="4" width="2" height="1" fill="#fff"/><rect x="6" y="4" width="1" height="1" fill="#ffff00"/><rect x="7" y="4" width="1" height="1" fill="#000"/><rect x="8" y="4" width="1" height="1" fill="#0000ff"/><rect x="9" y="4" width="1" height="1" fill="#000"/><rect x="10" y="4" width="1" height="1" fill="#ffff00"/><rect x="11" y="4" width="1" height="1" fill="#000"/><rect x="1" y="5" width="1" height="1" fill="#000"/><rect x="2" y="5" width="1" height="1" fill="#ffff00"/><rect x="3" y="5" width="2" height="1" fill="#fff"/><rect x="5" y="5" width="1" height="1" fill="#ffff00"/><rect x="6" y="5" width="1" height="1" fill="#fff"/><rect x="7" y="5" width="1" height="1" fill="#000"/><rect x="8" y="5" width="1" height="1" fill="#0000ff"/><rect x="9" y="5" width="1" height="1" fill="#000"/><rect x="10" y="5" width="1" height="1" fill="#fff"/><rect x="11" y="5" width="1" height="1" fill="#ffff00"/><rect x="12" y="5" width="1" height="1" fill="#000"/><rect x="0" y="6" width="1" height="1" fill="#000"/><rect x="1" y="6" width="1" height="1" fill="#ffff00"/><rect x="2" y="6" width="2" height="1" fill="#fff"/><rect x="4" y="6" width="3" height="1" fill="#ffff00"/><rect x="7" y="6" width="2" height="1" fill="#000"/><rect x="9" y="6" width="1" height="1" fill="#ffff00"/><rect x="10" y="6" width="1" height="1" fill="#fff"/><rect x="11" y="6" width="1" height="1" fill="#ffff00"/><rect x="12" y="6" width="1" height="1" fill="#000"/><rect x="0" y="7" width="1" height="1" fill="#000"/><rect x="1" y="7" width="1" height="1" fill="#ffff00"/><rect x="2" y="7" width="1" height="1" fill="#fff"/><rect x="3" y="7" width="1" height="1" fill="#ffff00"/><rect x="4" y="7" width="1" height="1" fill="#fff"/><rect x="5" y="7" width="1" height="1" fill="#ffff00"/><rect x="6" y="7" width="1" height="1" fill="#fff"/><rect x="7" y="7" width="2" height="1" fill="#ffff00"/><rect x="9" y="7" width="1" height="1" fill="#fff"/><rect x="10" y="7" width="1" height="1" fill="#ffff00"/><rect x="11" y="7" width="1" height="1" fill="#fff"/><rect x="12" y="7" width="1" height="1" fill="#000"/><rect x="0" y="8" width="1" height="1" fill="#000"/><rect x="1" y="8" width="2" height="1" fill="#ffff00"/><rect x="3" y="8" width="1" height="1" fill="#fff"/><rect x="4" y="8" width="1" height="1" fill="#ffff00"/><rect x="5" y="8" width="1" height="1" fill="#fff"/><rect x="6" y="8" width="1" height="1" fill="#ffff00"/><rect x="7" y="8" width="1" height="1" fill="#fff"/><rect x="8" y="8" width="1" height="1" fill="#ffff00"/><rect x="9" y="8" width="1" height="1" fill="#fff"/><rect x="10" y="8" width="1" height="1" fill="#ffff00"/><rect x="11" y="8" width="1" height="1" fill="#000"/><rect x="0" y="9" width="1" height="1" fill="#000"/><rect x="1" y="9" width="1" height="1" fill="#ffff00"/><rect x="2" y="9" width="1" height="1" fill="#fff"/><rect x="3" y="9" width="1" height="1" fill="#ffff00"/><rect x="4" y="9" width="1" height="1" fill="#fff"/><rect x="5" y="9" width="1" height="1" fill="#ffff00"/><rect x="6" y="9" width="1" height="1" fill="#fff"/><rect x="7" y="9" width="1" height="1" fill="#ffff00"/><rect x="8" y="9" width="1" height="1" fill="#fff"/><rect x="9" y="9" width="1" height="1" fill="#ffff00"/><rect x="10" y="9" width="1" height="1" fill="#000"/><rect x="0" y="10" width="1" height="1" fill="#000"/><rect x="1" y="10" width="2" height="1" fill="#ffff00"/><rect x="3" y="10" width="1" height="1" fill="#fff"/><rect x="4" y="10" width="1" height="1" fill="#ffff00"/><rect x="5" y="10" width="1" height="1" fill="#fff"/><rect x="6" y="10" width="1" height="1" fill="#ffff00"/><rect x="7" y="10" width="1" height="1" fill="#fff"/><rect x="8" y="10" width="1" height="1" fill="#ffff00"/><rect x="9" y="10" width="1" height="1" fill="#000"/><rect x="1" y="11" width="1" height="1" fill="#000"/><rect x="2" y="11" width="2" height="1" fill="#ffff00"/><rect x="4" y="11" width="1" height="1" fill="#fff"/><rect x="5" y="11" width="1" height="1" fill="#ffff00"/><rect x="6" y="11" width="1" height="1" fill="#fff"/><rect x="7" y="11" width="1" height="1" fill="#ffff00"/><rect x="8" y="11" width="1" height="1" fill="#000"/><rect x="2" y="12" width="6" height="1" fill="#000"/></svg><svg style="left:879px;top:748px;" width="12" height="12" viewBox="0 0 12 12" shape-rendering="crispEdges"><rect x="3" y="0" width="1" height="1" fill="#0000ff"/><rect x="4" y="0" width="2" height="1" fill="#ffff00"/><rect x="6" y="0" width="1" height="1" fill="#000"/><rect x="3" y="1" width="4" height="1" fill="#ffff00"/><rect x="7" y="1" width="1" height="1" fill="#000"/><rect x="3" y="2" width="4" height="1" fill="#ffff00"/><rect x="7" y="2" width="1" height="1" fill="#000"/><rect x="4" y="3" width="2" height="1" fill="#ffff00"/><rect x="6" y="3" width="2" height="1" fill="#000"/><rect x="4" y="4" width="5" height="1" fill="#ffff00"/><rect x="9" y="4" width="1" height="1" fill="#000"/><rect x="3" y="5" width="4" height="1" fill="#ffff00"/><rect x="7" y="5" width="1" height="1" fill="#000"/><rect x="8" y="5" width="2" height="1" fill="#ffff00"/><rect x="10" y="5" width="1" height="1" fill="#000"/><rect x="2" y="6" width="4" height="1" fill="#ffff00"/><rect x="6" y="6" width="1" height="1" fill="#000"/><rect x="9" y="6" width="2" height="1" fill="#000"/><rect x="1" y="7" width="6" height="1" fill="#ffff00"/><rect x="0" y="8" width="1" height="1" fill="#000"/><rect x="1" y="8" width="2" height="1" fill="#ffff00"/><rect x="3" y="8" width="1" height="1" fill="#000"/><rect x="5" y="8" width="3" height="1" fill="#ffff00"/><rect x="8" y="8" width="1" height="1" fill="#000"/><rect x="0" y="9" width="1" height="1" fill="#000"/><rect x="1" y="9" width="1" height="1" fill="#ffff00"/><rect x="2" y="9" width="1" height="1" fill="#000"/><rect x="6" y="9" width="3" height="1" fill="#ffff00"/><rect x="9" y="9" width="1" height="1" fill="#000"/><rect x="0" y="10" width="2" height="1" fill="#000"/><rect x="7" y="10" width="2" height="1" fill="#ffff00"/><rect x="9" y="10" width="1" height="1" fill="#000"/><rect x="8" y="11" width="2" height="1" fill="#000"/></svg><svg style="left:893px;top:748px;" width="16" height="14" viewBox="0 0 16 14" shape-rendering="crispEdges"><rect x="5" y="0" width="6" height="1" fill="#0000ff"/><rect x="3" y="1" width="10" height="1" fill="#0000ff"/><rect x="2" y="2" width="5" height="1" fill="#0000ff"/><rect x="7" y="2" width="2" height="1" fill="#fff"/><rect x="9" y="2" width="5" height="1" fill="#0000ff"/><rect x="1" y="3" width="2" height="1" fill="#0000ff"/><rect x="3" y="3" width="1" height="1" fill="#fff"/><rect x="4" y="3" width="3" height="1" fill="#0000ff"/><rect x="7" y="3" width="3" height="1" fill="#fff"/><rect x="10" y="3" width="5" height="1" fill="#0000ff"/><rect x="1" y="4" width="1" height="1" fill="#0000ff"/><rect x="2" y="4" width="1" height="1" fill="#fff"/><rect x="3" y="4" width="4" height="1" fill="#0000ff"/><rect x="7" y="4" width="4" height="1" fill="#fff"/><rect x="11" y="4" width="4" height="1" fill="#0000ff"/><rect x="0" y="5" width="7" height="1" fill="#0000ff"/><rect x="7" y="5" width="5" height="1" fill="#fff"/><rect x="12" y="5" width="4" height="1" fill="#0000ff"/><rect x="0" y="6" width="7" height="1" fill="#0000ff"/><rect x="7" y="6" width="5" height="1" fill="#fff"/><rect x="12" y="6" width="3" height="1" fill="#0000ff"/><rect x="1" y="7" width="6" height="1" fill="#0000ff"/><rect x="7" y="7" width="4" height="1" fill="#fff"/><rect x="11" y="7" width="4" height="1" fill="#0000ff"/><rect x="1" y="8" width="6" height="1" fill="#0000ff"/><rect x="7" y="8" width="3" height="1" fill="#fff"/><rect x="10" y="8" width="4" height="1" fill="#0000ff"/><rect x="2" y="9" width="5" height="1" fill="#0000ff"/><rect x="7" y="9" width="2" height="1" fill="#fff"/><rect x="9" y="9" width="5" height="1" fill="#0000ff"/><rect x="3" y="10" width="10" height="1" fill="#0000ff"/><rect x="5" y="11" width="6" height="1" fill="#0000ff"/><rect x="7" y="12" width="3" height="1" fill="#0000ff"/><rect x="8" y="13" width="1" height="1" fill="#0000ff"/></svg><div class="a" style="left:910px;top:747px;width:16px;height:16px;background:#000084;"></div><div class="ss" style="left:911px;top:749px;color:#fff;font-size:11px;letter-spacing:-0.3px">EN</div><svg style="left:928px;top:749px;" width="14" height="10" viewBox="0 0 14 10" shape-rendering="crispEdges"><rect x="0" y="0" width="14" height="1" fill="#000"/><rect x="0" y="1" width="1" height="1" fill="#000"/><rect x="1" y="1" width="1" height="1" fill="#ffff00"/><rect x="2" y="1" width="1" height="1" fill="#fff"/><rect x="3" y="1" width="1" height="1" fill="#ffff00"/><rect x="4" y="1" width="1" height="1" fill="#fff"/><rect x="5" y="1" width="1" height="1" fill="#ffff00"/><rect x="6" y="1" width="1" height="1" fill="#fff"/><rect x="7" y="1" width="1" height="1" fill="#ffff00"/><rect x="8" y="1" width="1" height="1" fill="#fff"/><rect x="9" y="1" width="1" height="1" fill="#ffff00"/><rect x="10" y="1" width="1" height="1" fill="#fff"/><rect x="11" y="1" width="1" height="1" fill="#ffff00"/><rect x="12" y="1" width="1" height="1" fill="#fff"/><rect x="13" y="1" width="1" height="1" fill="#000"/><rect x="0" y="2" width="2" height="1" fill="#000"/><rect x="2" y="2" width="1" height="1" fill="#ffff00"/><rect x="3" y="2" width="1" height="1" fill="#fff"/><rect x="4" y="2" width="1" height="1" fill="#ffff00"/><rect x="5" y="2" width="1" height="1" fill="#fff"/><rect x="6" y="2" width="1" height="1" fill="#ffff00"/><rect x="7" y="2" width="1" height="1" fill="#fff"/><rect x="8" y="2" width="1" height="1" fill="#ffff00"/><rect x="9" y="2" width="1" height="1" fill="#fff"/><rect x="10" y="2" width="1" height="1" fill="#ffff00"/><rect x="11" y="2" width="3" height="1" fill="#000"/><rect x="0" y="3" width="1" height="1" fill="#000"/><rect x="1" y="3" width="1" height="1" fill="#c6c3c6"/><rect x="2" y="3" width="1" height="1" fill="#000"/><rect x="3" y="3" width="1" height="1" fill="#ffff00"/><rect x="4" y="3" width="1" height="1" fill="#fff"/><rect x="5" y="3" width="1" height="1" fill="#ffff00"/><rect x="6" y="3" width="1" height="1" fill="#fff"/><rect x="7" y="3" width="1" height="1" fill="#ffff00"/><rect x="8" y="3" width="1" height="1" fill="#fff"/><rect x="9" y="3" width="1" height="1" fill="#ffff00"/><rect x="10" y="3" width="1" height="1" fill="#000"/><rect x="11" y="3" width="2" height="1" fill="#c6c3c6"/><rect x="13" y="3" width="1" height="1" fill="#000"/><rect x="0" y="4" width="1" height="1" fill="#000"/><rect x="1" y="4" width="2" height="1" fill="#c6c3c6"/><rect x="3" y="4" width="2" height="1" fill="#000"/><rect x="5" y="4" width="1" height="1" fill="#ffff00"/><rect x="6" y="4" width="1" height="1" fill="#fff"/><rect x="7" y="4" width="1" height="1" fill="#ffff00"/><rect x="8" y="4" width="2" height="1" fill="#000"/><rect x="10" y="4" width="3" height="1" fill="#c6c3c6"/><rect x="13" y="4" width="1" height="1" fill="#000"/><rect x="0" y="5" width="1" height="1" fill="#000"/><rect x="1" y="5" width="4" height="1" fill="#c6c3c6"/><rect x="5" y="5" width="3" height="1" fill="#000"/><rect x="8" y="5" width="5" height="1" fill="#c6c3c6"/><rect x="13" y="5" width="1" height="1" fill="#000"/><rect x="0" y="6" width="1" height="1" fill="#000"/><rect x="1" y="6" width="2" height="1" fill="#c6c3c6"/><rect x="3" y="6" width="1" height="1" fill="#c0c000"/><rect x="4" y="6" width="6" height="1" fill="#c6c3c6"/><rect x="10" y="6" width="1" height="1" fill="#c0c000"/><rect x="11" y="6" width="2" height="1" fill="#c6c3c6"/><rect x="13" y="6" width="1" height="1" fill="#000"/><rect x="0" y="7" width="1" height="1" fill="#000"/><rect x="1" y="7" width="1" height="1" fill="#c6c3c6"/><rect x="2" y="7" width="1" height="1" fill="#c0c000"/><rect x="3" y="7" width="8" height="1" fill="#c6c3c6"/><rect x="11" y="7" width="1" height="1" fill="#c0c000"/><rect x="12" y="7" width="1" height="1" fill="#c6c3c6"/><rect x="13" y="7" width="1" height="1" fill="#000"/><rect x="0" y="8" width="1" height="1" fill="#000"/><rect x="1" y="8" width="12" height="1" fill="#c6c3c6"/><rect x="13" y="8" width="1" height="1" fill="#000"/><rect x="0" y="9" width="14" height="1" fill="#000"/></svg><svg style="left:944px;top:748px;" width="16" height="14" viewBox="0 0 16 14" shape-rendering="crispEdges"><rect x="11" y="0" width="1" height="1" fill="#000"/><rect x="13" y="0" width="1" height="1" fill="#000"/><rect x="8" y="1" width="1" height="1" fill="#000"/><rect x="10" y="1" width="1" height="1" fill="#000"/><rect x="11" y="1" width="1" height="1" fill="#fff"/><rect x="12" y="1" width="1" height="1" fill="#000"/><rect x="13" y="1" width="1" height="1" fill="#fff"/><rect x="14" y="1" width="1" height="1" fill="#000"/><rect x="6" y="2" width="2" height="1" fill="#000"/><rect x="9" y="2" width="1" height="1" fill="#000"/><rect x="10" y="2" width="1" height="1" fill="#fff"/><rect x="11" y="2" width="1" height="1" fill="#000"/><rect x="12" y="2" width="1" height="1" fill="#fff"/><rect x="13" y="2" width="2" height="1" fill="#000"/><rect x="3" y="3" width="2" height="1" fill="#ff0000"/><rect x="5" y="3" width="1" height="1" fill="#000"/><rect x="6" y="3" width="1" height="1" fill="#fff"/><rect x="7" y="3" width="1" height="1" fill="#000"/><rect x="8" y="3" width="1" height="1" fill="#fff"/><rect x="9" y="3" width="1" height="1" fill="#000"/><rect x="10" y="3" width="1" height="1" fill="#fff"/><rect x="11" y="3" width="1" height="1" fill="#000"/><rect x="12" y="3" width="1" height="1" fill="#fff"/><rect x="13" y="3" width="2" height="1" fill="#000"/><rect x="2" y="4" width="1" height="1" fill="#000"/><rect x="3" y="4" width="2" height="1" fill="#ff0000"/><rect x="5" y="4" width="1" height="1" fill="#fff"/><rect x="6" y="4" width="1" height="1" fill="#000"/><rect x="7" y="4" width="1" height="1" fill="#fff"/><rect x="8" y="4" width="1" height="1" fill="#000"/><rect x="9" y="4" width="1" height="1" fill="#fff"/><rect x="10" y="4" width="1" height="1" fill="#000"/><rect x="11" y="4" width="2" height="1" fill="#fff"/><rect x="13" y="4" width="2" height="1" fill="#000"/><rect x="2" y="5" width="1" height="1" fill="#000"/><rect x="3" y="5" width="1" height="1" fill="#ff0000"/><rect x="4" y="5" width="1" height="1" fill="#000"/><rect x="5" y="5" width="1" height="1" fill="#fff"/><rect x="6" y="5" width="1" height="1" fill="#000"/><rect x="7" y="5" width="1" height="1" fill="#fff"/><rect x="8" y="5" width="2" height="1" fill="#000"/><rect x="10" y="5" width="3" height="1" fill="#fff"/><rect x="13" y="5" width="2" height="1" fill="#000"/><rect x="1" y="6" width="2" height="1" fill="#000"/><rect x="3" y="6" width="2" height="1" fill="#fff"/><rect x="5" y="6" width="1" height="1" fill="#000"/><rect x="6" y="6" width="3" height="1" fill="#fff"/><rect x="9" y="6" width="1" height="1" fill="#000"/><rect x="10" y="6" width="4" height="1" fill="#fff"/><rect x="14" y="6" width="1" height="1" fill="#000"/><rect x="1" y="7" width="2" height="1" fill="#000"/><rect x="3" y="7" width="1" height="1" fill="#fff"/><rect x="4" y="7" width="2" height="1" fill="#000"/><rect x="6" y="7" width="2" height="1" fill="#fff"/><rect x="8" y="7" width="2" height="1" fill="#000"/><rect x="10" y="7" width="4" height="1" fill="#fff"/><rect x="14" y="7" width="1" height="1" fill="#000"/><rect x="1" y="8" width="2" height="1" fill="#000"/><rect x="3" y="8" width="1" height="1" fill="#fff"/><rect x="4" y="8" width="1" height="1" fill="#000"/><rect x="5" y="8" width="1" height="1" fill="#c6c3c6"/><rect x="6" y="8" width="5" height="1" fill="#fff"/><rect x="11" y="8" width="1" height="1" fill="#c6c3c6"/><rect x="12" y="8" width="2" height="1" fill="#fff"/><rect x="14" y="8" width="1" height="1" fill="#000"/><rect x="1" y="9" width="2" height="1" fill="#000"/><rect x="3" y="9" width="1" height="1" fill="#fff"/><rect x="4" y="9" width="1" height="1" fill="#000"/><rect x="5" y="9" width="7" height="1" fill="#c6c3c6"/><rect x="12" y="9" width="2" height="1" fill="#fff"/><rect x="14" y="9" width="1" height="1" fill="#000"/><rect x="1" y="10" width="2" height="1" fill="#000"/><rect x="3" y="10" width="1" height="1" fill="#fff"/><rect x="4" y="10" width="1" height="1" fill="#000"/><rect x="5" y="10" width="8" height="1" fill="#c6c3c6"/><rect x="13" y="10" width="2" height="1" fill="#fff"/><rect x="15" y="10" width="1" height="1" fill="#000"/><rect x="1" y="11" width="2" height="1" fill="#000"/><rect x="3" y="11" width="1" height="1" fill="#fff"/><rect x="4" y="11" width="4" height="1" fill="#c6c3c6"/><rect x="8" y="11" width="2" height="1" fill="#000"/><rect x="10" y="11" width="3" height="1" fill="#c6c3c6"/><rect x="13" y="11" width="2" height="1" fill="#fff"/><rect x="15" y="11" width="1" height="1" fill="#000"/><rect x="1" y="12" width="3" height="1" fill="#000"/><rect x="4" y="12" width="3" height="1" fill="#c6c3c6"/><rect x="7" y="12" width="2" height="1" fill="#000"/><rect x="10" y="12" width="2" height="1" fill="#000"/><rect x="12" y="12" width="3" height="1" fill="#fff"/><rect x="15" y="12" width="1" height="1" fill="#000"/><rect x="2" y="13" width="6" height="1" fill="#000"/><rect x="11" y="13" width="4" height="1" fill="#000"/></svg><div class="ss t9" style="left:971px;top:749px;font-size:11px;letter-spacing:-0.2px">2:13 PM</div>
